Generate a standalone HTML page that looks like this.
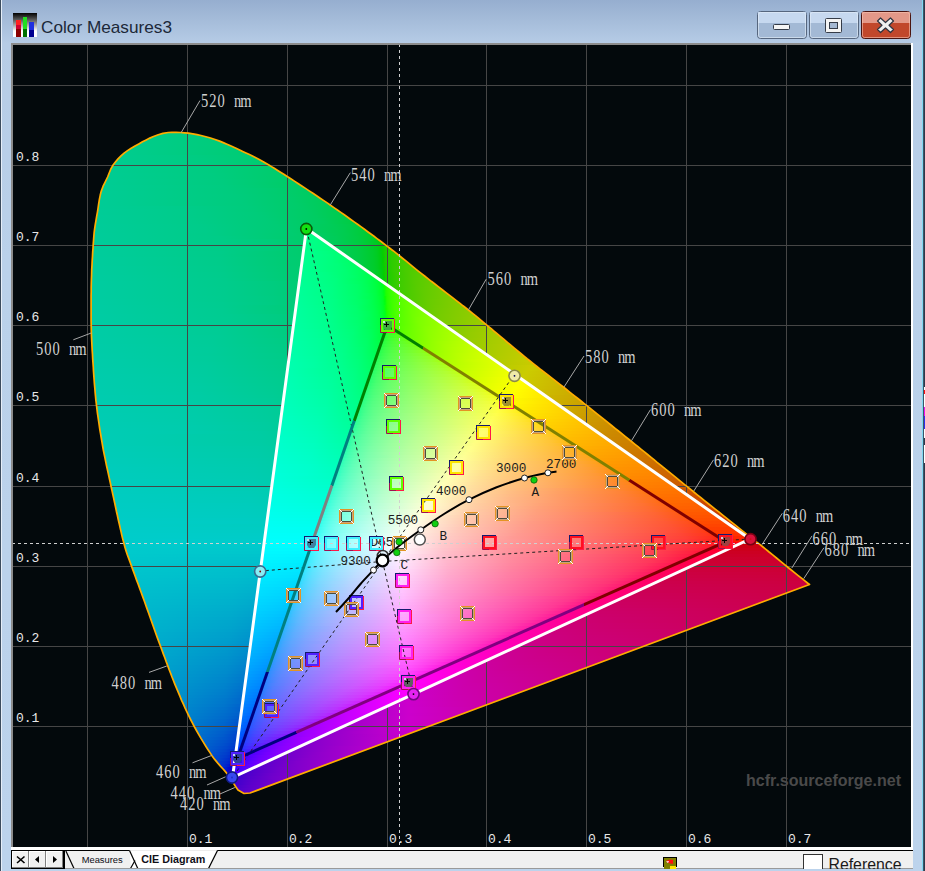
<!DOCTYPE html><html><head><meta charset="utf-8"><style>html,body{margin:0;padding:0;width:925px;height:871px;overflow:hidden;background:#b9d1ea}svg{display:block}</style></head><body>
<svg width="925" height="871" viewBox="0 0 925 871">
<defs>
<linearGradient id="frameg" gradientUnits="userSpaceOnUse" x1="0" y1="0" x2="0" y2="871"><stop offset="0" stop-color="#96aecf"/><stop offset="0.05" stop-color="#b6cce6"/><stop offset="0.3" stop-color="#bad1ea"/><stop offset="1" stop-color="#bcd3ec"/></linearGradient>
<clipPath id="chartclip"><rect x="13" y="45" width="898" height="802"/></clipPath>
<clipPath id="locclip"><polygon points="250.0,793.0 244.0,793.5 238.0,790.0 235.9,787.1 233.6,783.3 230.9,779.1 227.9,774.7 225.6,771.9 223.1,769.0 220.4,766.1 217.6,762.9 214.7,759.4 211.8,755.4 209.8,752.4 207.7,749.2 205.5,745.7 203.3,742.1 201.0,738.4 198.8,734.6 196.6,730.8 194.5,727.0 192.5,723.2 190.6,719.5 188.7,715.7 186.9,711.9 185.1,708.1 183.4,704.2 181.6,700.3 179.9,696.2 178.2,692.1 176.4,687.9 174.9,684.4 173.5,680.7 172.0,677.0 170.6,673.3 169.1,669.5 167.7,665.6 166.2,661.7 164.8,657.8 163.3,653.9 161.9,650.0 160.4,646.0 158.9,642.0 157.4,637.9 155.9,633.7 154.4,629.5 152.9,625.2 151.4,621.0 149.9,616.8 148.5,612.7 147.0,608.6 145.6,604.7 144.3,601.0 142.7,596.6 141.1,592.3 139.6,588.1 138.1,584.0 136.6,580.1 135.2,576.3 133.9,572.6 132.6,569.1 131.4,565.7 129.8,561.4 128.6,558.1 127.4,555.0 126.3,551.7 125.0,547.5 123.5,541.9 122.7,538.9 121.9,535.6 121.1,531.9 120.2,528.1 119.3,524.0 118.3,519.8 117.4,515.5 116.4,511.2 115.5,506.9 114.6,502.6 113.7,498.4 112.8,494.4 112.0,490.6 111.2,487.0 110.2,482.3 109.2,477.9 108.3,473.6 107.4,469.5 106.5,465.6 105.7,461.6 104.9,457.7 104.1,453.8 103.3,449.9 102.6,445.8 101.9,441.7 101.2,437.5 100.5,433.4 99.8,429.3 99.2,425.2 98.6,421.0 98.0,416.9 97.4,412.8 96.9,408.6 96.4,404.5 95.9,400.4 95.5,396.2 95.1,392.0 94.8,387.8 94.4,383.7 94.1,379.5 93.8,375.4 93.5,371.3 93.3,367.2 93.0,363.2 92.7,358.9 92.5,354.6 92.2,350.5 92.0,346.4 91.8,342.3 91.6,338.1 91.4,333.9 91.3,329.5 91.2,325.0 91.1,321.1 91.1,317.1 91.1,312.9 91.1,308.6 91.1,304.3 91.1,300.0 91.1,295.8 91.2,291.6 91.2,287.5 91.3,283.5 91.4,279.8 91.6,274.8 91.7,269.9 92.0,265.1 92.2,260.6 92.5,256.2 92.7,252.1 93.0,248.3 93.2,244.9 93.6,239.5 93.9,235.5 94.2,232.1 94.7,228.4 95.3,224.3 96.0,220.3 96.7,216.2 97.5,211.8 98.1,207.9 98.7,203.7 99.4,199.4 100.2,195.3 101.1,191.6 103.1,186.2 105.4,181.5 107.6,177.0 109.3,172.8 110.9,168.9 113.1,165.0 115.4,162.0 118.0,158.9 121.0,155.9 124.1,153.1 127.5,150.6 131.2,148.2 135.0,146.0 138.8,143.9 142.5,141.8 146.2,139.9 149.8,138.1 153.5,136.5 158.2,134.7 162.9,133.4 168.2,132.5 171.9,132.3 176.1,132.3 180.3,132.5 184.5,132.8 188.4,133.2 192.8,133.8 197.0,134.6 201.0,135.5 204.9,136.5 209.7,137.8 214.3,139.2 219.6,141.1 223.2,142.6 227.0,144.2 231.1,146.0 235.5,148.0 240.2,150.3 243.2,151.7 246.0,153.0 248.9,154.3 252.0,155.7 255.4,157.4 259.2,159.4 263.7,161.9 268.9,165.0 271.5,166.6 274.3,168.3 277.3,170.2 280.5,172.2 283.8,174.3 287.2,176.5 290.8,178.8 294.4,181.1 298.0,183.5 301.8,186.0 305.5,188.4 309.2,190.9 312.9,193.3 316.6,195.8 320.2,198.2 323.8,200.6 327.2,202.9 330.5,205.2 333.9,207.6 337.4,210.0 340.8,212.4 344.3,214.8 347.7,217.2 351.1,219.7 354.5,222.1 357.9,224.5 361.2,226.9 364.5,229.3 367.7,231.7 370.9,234.0 374.0,236.3 377.0,238.6 380.0,240.8 382.9,243.0 385.7,245.1 389.5,248.0 393.1,250.7 396.5,253.4 399.7,256.0 402.8,258.5 405.9,260.9 408.9,263.4 411.9,265.8 414.9,268.3 418.0,270.8 421.2,273.3 424.6,276.0 427.9,278.6 431.3,281.3 434.9,284.0 438.6,286.9 442.3,289.7 446.0,292.6 449.6,295.4 453.2,298.2 456.7,300.9 460.0,303.4 463.0,305.8 465.9,308.0 468.4,310.0 473.2,313.8 476.1,316.2 478.5,318.1 481.4,320.6 486.2,324.6 488.6,326.6 491.2,328.7 494.0,331.1 497.1,333.7 500.3,336.4 503.7,339.2 507.1,342.1 510.5,344.9 514.0,347.8 517.4,350.7 520.8,353.5 524.0,356.1 527.1,358.7 530.0,361.0 533.6,363.9 536.9,366.5 539.9,368.8 542.7,371.0 545.5,373.1 548.5,375.4 551.6,377.8 555.2,380.6 559.3,383.8 564.0,387.5 566.5,389.5 569.1,391.6 571.9,393.8 574.8,396.1 577.9,398.5 581.0,401.0 584.2,403.6 587.5,406.2 590.9,408.9 594.3,411.6 597.7,414.4 601.2,417.2 604.7,419.9 608.1,422.7 611.6,425.5 615.1,428.3 618.5,431.0 621.8,433.7 625.1,436.4 628.4,439.0 631.5,441.5 634.7,444.1 638.0,446.7 641.2,449.3 644.4,451.9 647.6,454.5 650.8,457.1 654.0,459.7 657.1,462.3 660.3,464.8 663.4,467.4 666.5,469.9 669.6,472.4 672.7,474.9 675.8,477.4 678.8,479.9 681.9,482.4 684.9,484.8 687.9,487.2 690.9,489.6 693.8,492.0 697.3,494.8 700.9,497.7 704.5,500.6 708.1,503.5 711.8,506.4 715.5,509.3 719.1,512.2 722.7,515.1 726.2,517.9 729.6,520.6 732.8,523.2 736.0,525.7 739.0,528.1 741.8,530.3 744.4,532.4 746.8,534.3 749.0,536.0 755.1,540.8 757.7,542.8 759.5,544.2 763.0,547.0 765.9,549.3 769.1,552.0 772.7,554.9 776.5,558.0 780.3,561.1 784.0,564.1 787.5,567.0 790.6,569.5 794.5,572.6 798.2,575.6 801.8,578.4 804.9,580.9 807.5,583.0 809.5,584.5"/></clipPath>
<clipPath id="triclip"><polygon points="306.5,228.5 750.0,539.0 232.5,777.5"/></clipPath>
<linearGradient id="o0"><stop offset="0" stop-color="#00cc87"/><stop offset="1" stop-color="#00cc7f"/></linearGradient>
<linearGradient id="o1"><stop offset="0" stop-color="#00cc89"/><stop offset="1" stop-color="#00cc7d"/></linearGradient>
<linearGradient id="o2"><stop offset="0" stop-color="#00cc8a"/><stop offset="1" stop-color="#00cc7b"/></linearGradient>
<linearGradient id="o3"><stop offset="0" stop-color="#00cc8b"/><stop offset="1" stop-color="#00cc79"/></linearGradient>
<linearGradient id="o4"><stop offset="0" stop-color="#00cc8c"/><stop offset="1" stop-color="#00cc78"/></linearGradient>
<linearGradient id="o5"><stop offset="0" stop-color="#00cc8d"/><stop offset="1" stop-color="#00cc76"/></linearGradient>
<linearGradient id="o6"><stop offset="0" stop-color="#00cc8e"/><stop offset="1" stop-color="#00cc75"/></linearGradient>
<linearGradient id="o7"><stop offset="0" stop-color="#00cc8f"/><stop offset="1" stop-color="#00cc73"/></linearGradient>
<linearGradient id="o8"><stop offset="0" stop-color="#00cc90"/><stop offset="0.552" stop-color="#00cc82"/><stop offset="1" stop-color="#00cc72"/></linearGradient>
<linearGradient id="o9"><stop offset="0" stop-color="#00cc90"/><stop offset="0.562" stop-color="#00cc82"/><stop offset="1" stop-color="#00cc70"/></linearGradient>
<linearGradient id="o10"><stop offset="0" stop-color="#00cc91"/><stop offset="0.559" stop-color="#00cc82"/><stop offset="1" stop-color="#00cc6f"/></linearGradient>
<linearGradient id="o11"><stop offset="0" stop-color="#00cc91"/><stop offset="0.571" stop-color="#00cc81"/><stop offset="1" stop-color="#00cc6d"/></linearGradient>
<linearGradient id="o12"><stop offset="0" stop-color="#00cc92"/><stop offset="0.566" stop-color="#00cc82"/><stop offset="1" stop-color="#00cc6c"/></linearGradient>
<linearGradient id="o13"><stop offset="0" stop-color="#00cc92"/><stop offset="0.57" stop-color="#00cc81"/><stop offset="1" stop-color="#00cc6b"/></linearGradient>
<linearGradient id="o14"><stop offset="0" stop-color="#00cc93"/><stop offset="0.573" stop-color="#00cc81"/><stop offset="1" stop-color="#00cc69"/></linearGradient>
<linearGradient id="o15"><stop offset="0" stop-color="#00cc93"/><stop offset="0.583" stop-color="#00cc80"/><stop offset="1" stop-color="#00cc67"/></linearGradient>
<linearGradient id="o16"><stop offset="0" stop-color="#00cc94"/><stop offset="0.589" stop-color="#00cc80"/><stop offset="1" stop-color="#00cc66"/></linearGradient>
<linearGradient id="o17"><stop offset="0" stop-color="#00cc94"/><stop offset="0.598" stop-color="#00cc7f"/><stop offset="1" stop-color="#00cc63"/></linearGradient>
<linearGradient id="o18"><stop offset="0" stop-color="#00cc95"/><stop offset="0.593" stop-color="#00cc80"/><stop offset="1" stop-color="#00cc62"/></linearGradient>
<linearGradient id="o19"><stop offset="0" stop-color="#00cc95"/><stop offset="0.595" stop-color="#00cc7f"/><stop offset="0.819" stop-color="#00cc71"/><stop offset="1" stop-color="#00cc60"/></linearGradient>
<linearGradient id="o20"><stop offset="0" stop-color="#00cc96"/><stop offset="0.609" stop-color="#00cc7e"/><stop offset="0.827" stop-color="#00cc6f"/><stop offset="1" stop-color="#00cc5e"/></linearGradient>
<linearGradient id="o21"><stop offset="0" stop-color="#00cc96"/><stop offset="0.611" stop-color="#00cc7e"/><stop offset="0.832" stop-color="#00cc6e"/><stop offset="1" stop-color="#00cc5b"/></linearGradient>
<linearGradient id="o22"><stop offset="0" stop-color="#00cc96"/><stop offset="0.617" stop-color="#00cc7d"/><stop offset="0.835" stop-color="#00cc6d"/><stop offset="1" stop-color="#00cc59"/></linearGradient>
<linearGradient id="o23"><stop offset="0" stop-color="#00cc97"/><stop offset="0.619" stop-color="#00cc7d"/><stop offset="0.839" stop-color="#00cc6b"/><stop offset="1" stop-color="#00cc56"/></linearGradient>
<linearGradient id="o24"><stop offset="0" stop-color="#00cc97"/><stop offset="0.625" stop-color="#00cc7c"/><stop offset="0.842" stop-color="#00cc6a"/><stop offset="1" stop-color="#00cc53"/></linearGradient>
<linearGradient id="o25"><stop offset="0" stop-color="#00cc97"/><stop offset="0.351" stop-color="#00cc8b"/><stop offset="0.629" stop-color="#00cc7c"/><stop offset="0.841" stop-color="#00cc69"/><stop offset="1" stop-color="#00cc51"/></linearGradient>
<linearGradient id="o26"><stop offset="0" stop-color="#00cc98"/><stop offset="0.36" stop-color="#00cc8b"/><stop offset="0.64" stop-color="#00cc7a"/><stop offset="0.848" stop-color="#00cc66"/><stop offset="1" stop-color="#00cc4d"/></linearGradient>
<linearGradient id="o27"><stop offset="0" stop-color="#00cc98"/><stop offset="0.361" stop-color="#00cc8b"/><stop offset="0.643" stop-color="#00cc7a"/><stop offset="0.847" stop-color="#00cc65"/><stop offset="1" stop-color="#00cc4a"/></linearGradient>
<linearGradient id="o28"><stop offset="0" stop-color="#00cc99"/><stop offset="0.371" stop-color="#00cc8a"/><stop offset="0.649" stop-color="#00cc79"/><stop offset="0.857" stop-color="#00cc62"/><stop offset="1" stop-color="#00cc46"/></linearGradient>
<linearGradient id="o29"><stop offset="0" stop-color="#00cc99"/><stop offset="0.379" stop-color="#00cc8a"/><stop offset="0.659" stop-color="#00cc78"/><stop offset="0.864" stop-color="#00cc60"/><stop offset="1" stop-color="#00cc42"/></linearGradient>
<linearGradient id="o30"><stop offset="0" stop-color="#00cc99"/><stop offset="0.379" stop-color="#00cc8a"/><stop offset="0.662" stop-color="#00cc77"/><stop offset="0.862" stop-color="#00cc5e"/><stop offset="1" stop-color="#00cc3c"/></linearGradient>
<linearGradient id="o31"><stop offset="0" stop-color="#00cc9a"/><stop offset="0.394" stop-color="#00cc8a"/><stop offset="0.679" stop-color="#00cc75"/><stop offset="0.876" stop-color="#00cc59"/><stop offset="0.949" stop-color="#00cc48"/><stop offset="1" stop-color="#00cc36"/></linearGradient>
<linearGradient id="o32"><stop offset="0" stop-color="#00cc9a"/><stop offset="0.396" stop-color="#00cc8a"/><stop offset="0.683" stop-color="#00cc74"/><stop offset="0.885" stop-color="#00cc55"/><stop offset="0.95" stop-color="#00cc44"/><stop offset="1" stop-color="#00cc30"/></linearGradient>
<linearGradient id="o33"><stop offset="0" stop-color="#00cc9a"/><stop offset="0.411" stop-color="#00cc89"/><stop offset="0.702" stop-color="#00cc71"/><stop offset="0.894" stop-color="#00cc51"/><stop offset="0.957" stop-color="#00cc3d"/><stop offset="1" stop-color="#00cc27"/></linearGradient>
<linearGradient id="o34"><stop offset="0" stop-color="#00cc9b"/><stop offset="0.418" stop-color="#00cc88"/><stop offset="0.711" stop-color="#00cc6f"/><stop offset="0.815" stop-color="#00cc5f"/><stop offset="0.899" stop-color="#00cc4d"/><stop offset="0.962" stop-color="#00cc36"/><stop offset="1" stop-color="#00cc1e"/></linearGradient>
<linearGradient id="o35"><stop offset="0" stop-color="#00cc9b"/><stop offset="0.447" stop-color="#00cc87"/><stop offset="0.742" stop-color="#00cc6a"/><stop offset="0.845" stop-color="#00cc58"/><stop offset="0.921" stop-color="#00cc42"/><stop offset="0.969" stop-color="#00cc2b"/><stop offset="0.983" stop-color="#00cc20"/><stop offset="1" stop-color="#00cc0a"/></linearGradient>
<linearGradient id="o36"><stop offset="0" stop-color="#00cc9b"/><stop offset="0.447" stop-color="#00cc87"/><stop offset="0.617" stop-color="#00cc79"/><stop offset="0.746" stop-color="#00cc68"/><stop offset="0.847" stop-color="#00cc55"/><stop offset="0.922" stop-color="#00cc3d"/><stop offset="0.963" stop-color="#00cc27"/><stop offset="0.983" stop-color="#00cc0f"/><stop offset="0.99" stop-color="#04cc00"/><stop offset="0.997" stop-color="#14cc00"/><stop offset="1" stop-color="#17cc00"/></linearGradient>
<linearGradient id="o37"><stop offset="0" stop-color="#00cc9c"/><stop offset="0.441" stop-color="#00cc87"/><stop offset="0.609" stop-color="#00cc79"/><stop offset="0.736" stop-color="#00cc69"/><stop offset="0.829" stop-color="#00cc57"/><stop offset="0.896" stop-color="#00cc43"/><stop offset="0.943" stop-color="#00cc2c"/><stop offset="0.957" stop-color="#00cc22"/><stop offset="0.97" stop-color="#00cc10"/><stop offset="0.977" stop-color="#02cc00"/><stop offset="0.983" stop-color="#13cc00"/><stop offset="1" stop-color="#25cc00"/></linearGradient>
<linearGradient id="o38"><stop offset="0" stop-color="#00cc9c"/><stop offset="0.434" stop-color="#00cc88"/><stop offset="0.592" stop-color="#00cc7a"/><stop offset="0.724" stop-color="#00cc6a"/><stop offset="0.816" stop-color="#00cc58"/><stop offset="0.888" stop-color="#00cc43"/><stop offset="0.934" stop-color="#00cc2a"/><stop offset="0.954" stop-color="#00cc17"/><stop offset="0.961" stop-color="#00cc0a"/><stop offset="0.967" stop-color="#0bcc00"/><stop offset="0.98" stop-color="#20cc00"/><stop offset="1" stop-color="#30cc00"/></linearGradient>
<linearGradient id="o39"><stop offset="0" stop-color="#00cc9d"/><stop offset="0.429" stop-color="#00cc88"/><stop offset="0.584" stop-color="#00cc7b"/><stop offset="0.714" stop-color="#00cc6a"/><stop offset="0.805" stop-color="#00cc59"/><stop offset="0.877" stop-color="#00cc43"/><stop offset="0.922" stop-color="#00cc2b"/><stop offset="0.935" stop-color="#00cc20"/><stop offset="0.948" stop-color="#00cc0c"/><stop offset="0.955" stop-color="#0acc00"/><stop offset="0.968" stop-color="#1fcc00"/><stop offset="1" stop-color="#38cc00"/></linearGradient>
<linearGradient id="o40"><stop offset="0" stop-color="#00cc9d"/><stop offset="0.423" stop-color="#00cc89"/><stop offset="0.699" stop-color="#00cc6c"/><stop offset="0.795" stop-color="#00cc59"/><stop offset="0.865" stop-color="#00cc44"/><stop offset="0.91" stop-color="#00cc2c"/><stop offset="0.923" stop-color="#00cc21"/><stop offset="0.936" stop-color="#00cc0d"/><stop offset="0.942" stop-color="#08cc00"/><stop offset="0.949" stop-color="#16cc00"/><stop offset="0.962" stop-color="#26cc00"/><stop offset="1" stop-color="#40cc00"/></linearGradient>
<linearGradient id="o41"><stop offset="0" stop-color="#00cc9d"/><stop offset="0.413" stop-color="#00cc89"/><stop offset="0.686" stop-color="#00cc6d"/><stop offset="0.787" stop-color="#00cc5a"/><stop offset="0.857" stop-color="#00cc44"/><stop offset="0.902" stop-color="#00cc2c"/><stop offset="0.914" stop-color="#00cc21"/><stop offset="0.927" stop-color="#00cc0f"/><stop offset="0.933" stop-color="#06cc00"/><stop offset="0.94" stop-color="#15cc00"/><stop offset="0.952" stop-color="#25cc00"/><stop offset="1" stop-color="#44cc00"/></linearGradient>
<linearGradient id="o42"><stop offset="0" stop-color="#00cc9e"/><stop offset="0.408" stop-color="#00cc8a"/><stop offset="0.677" stop-color="#00cc6e"/><stop offset="0.771" stop-color="#00cc5c"/><stop offset="0.84" stop-color="#00cc47"/><stop offset="0.89" stop-color="#00cc2d"/><stop offset="0.903" stop-color="#00cc22"/><stop offset="0.915" stop-color="#00cc10"/><stop offset="0.922" stop-color="#04cc00"/><stop offset="0.928" stop-color="#15cc00"/><stop offset="0.947" stop-color="#2bcc00"/><stop offset="1" stop-color="#4acc00"/></linearGradient>
<linearGradient id="o43"><stop offset="0" stop-color="#00cc9e"/><stop offset="0.402" stop-color="#00cc8a"/><stop offset="0.669" stop-color="#00cc6e"/><stop offset="0.762" stop-color="#00cc5c"/><stop offset="0.83" stop-color="#00cc48"/><stop offset="0.879" stop-color="#00cc2e"/><stop offset="0.892" stop-color="#00cc23"/><stop offset="0.904" stop-color="#00cc11"/><stop offset="0.91" stop-color="#02cc00"/><stop offset="0.916" stop-color="#14cc00"/><stop offset="0.923" stop-color="#1dcc00"/><stop offset="0.941" stop-color="#30cc00"/><stop offset="1" stop-color="#4fcc00"/></linearGradient>
<linearGradient id="o44"><stop offset="0" stop-color="#00cc9e"/><stop offset="0.402" stop-color="#00cc8a"/><stop offset="0.671" stop-color="#00cc6d"/><stop offset="0.762" stop-color="#00cc5b"/><stop offset="0.829" stop-color="#00cc44"/><stop offset="0.872" stop-color="#00cc2c"/><stop offset="0.884" stop-color="#00cc20"/><stop offset="0.896" stop-color="#00cc0b"/><stop offset="0.902" stop-color="#0bcc00"/><stop offset="0.915" stop-color="#21cc00"/><stop offset="0.927" stop-color="#2dcc00"/><stop offset="0.957" stop-color="#41cc00"/><stop offset="1" stop-color="#55cc00"/></linearGradient>
<linearGradient id="o45"><stop offset="0" stop-color="#00cc9f"/><stop offset="0.399" stop-color="#00cc8b"/><stop offset="0.665" stop-color="#00cc6e"/><stop offset="0.755" stop-color="#00cc5b"/><stop offset="0.822" stop-color="#00cc45"/><stop offset="0.864" stop-color="#00cc2d"/><stop offset="0.876" stop-color="#00cc21"/><stop offset="0.888" stop-color="#00cc0d"/><stop offset="0.894" stop-color="#0acc00"/><stop offset="0.906" stop-color="#20cc00"/><stop offset="0.924" stop-color="#32cc00"/><stop offset="0.961" stop-color="#48cc00"/><stop offset="1" stop-color="#58cc00"/></linearGradient>
<linearGradient id="o46"><stop offset="0" stop-color="#00cc9f"/><stop offset="0.394" stop-color="#00cc8b"/><stop offset="0.651" stop-color="#00cc6f"/><stop offset="0.746" stop-color="#00cc5c"/><stop offset="0.812" stop-color="#00cc46"/><stop offset="0.854" stop-color="#00cc2d"/><stop offset="0.866" stop-color="#00cc22"/><stop offset="0.878" stop-color="#00cc0e"/><stop offset="0.884" stop-color="#08cc00"/><stop offset="0.89" stop-color="#17cc00"/><stop offset="0.896" stop-color="#20cc00"/><stop offset="0.913" stop-color="#32cc00"/><stop offset="0.949" stop-color="#48cc00"/><stop offset="1" stop-color="#5dcc00"/></linearGradient>
<linearGradient id="o47"><stop offset="0" stop-color="#00cc9f"/><stop offset="0.389" stop-color="#00cc8c"/><stop offset="0.643" stop-color="#00cc70"/><stop offset="0.732" stop-color="#00cc5e"/><stop offset="0.796" stop-color="#00cc49"/><stop offset="0.844" stop-color="#00cc2e"/><stop offset="0.855" stop-color="#00cc23"/><stop offset="0.867" stop-color="#00cc10"/><stop offset="0.873" stop-color="#06cc00"/><stop offset="0.879" stop-color="#16cc00"/><stop offset="0.885" stop-color="#1fcc00"/><stop offset="0.909" stop-color="#36cc00"/><stop offset="0.95" stop-color="#4ecc00"/><stop offset="1" stop-color="#62cc00"/></linearGradient>
<linearGradient id="o48"><stop offset="0" stop-color="#00cca0"/><stop offset="0.385" stop-color="#00cc8c"/><stop offset="0.636" stop-color="#00cc70"/><stop offset="0.723" stop-color="#00cc5e"/><stop offset="0.787" stop-color="#00cc49"/><stop offset="0.834" stop-color="#00cc2f"/><stop offset="0.845" stop-color="#00cc24"/><stop offset="0.857" stop-color="#00cc11"/><stop offset="0.863" stop-color="#04cc00"/><stop offset="0.869" stop-color="#15cc00"/><stop offset="0.875" stop-color="#1fcc00"/><stop offset="0.904" stop-color="#3acc00"/><stop offset="0.945" stop-color="#51cc00"/><stop offset="1" stop-color="#66cc00"/></linearGradient>
<linearGradient id="o49"><stop offset="0" stop-color="#00cca0"/><stop offset="0.382" stop-color="#00cc8d"/><stop offset="0.63" stop-color="#00cc71"/><stop offset="0.717" stop-color="#00cc5f"/><stop offset="0.78" stop-color="#00cc4a"/><stop offset="0.827" stop-color="#00cc2f"/><stop offset="0.838" stop-color="#00cc24"/><stop offset="0.85" stop-color="#00cc13"/><stop offset="0.855" stop-color="#02cc00"/><stop offset="0.861" stop-color="#14cc00"/><stop offset="0.867" stop-color="#1ecc00"/><stop offset="0.896" stop-color="#3acc00"/><stop offset="0.942" stop-color="#54cc00"/><stop offset="1" stop-color="#6acc00"/></linearGradient>
<linearGradient id="o50"><stop offset="0" stop-color="#00cca1"/><stop offset="0.394" stop-color="#00cc8c"/><stop offset="0.537" stop-color="#00cc7e"/><stop offset="0.646" stop-color="#00cc6d"/><stop offset="0.731" stop-color="#00cc59"/><stop offset="0.794" stop-color="#00cc3f"/><stop offset="0.829" stop-color="#00cc25"/><stop offset="0.84" stop-color="#00cc14"/><stop offset="0.846" stop-color="#00cc01"/><stop offset="0.851" stop-color="#13cc00"/><stop offset="0.857" stop-color="#1ecc00"/><stop offset="0.886" stop-color="#3acc00"/><stop offset="0.931" stop-color="#54cc00"/><stop offset="1" stop-color="#6ecc00"/></linearGradient>
<linearGradient id="o51"><stop offset="0" stop-color="#00cca1"/><stop offset="0.39" stop-color="#00cc8c"/><stop offset="0.531" stop-color="#00cc7e"/><stop offset="0.638" stop-color="#00cc6e"/><stop offset="0.723" stop-color="#00cc59"/><stop offset="0.785" stop-color="#00cc40"/><stop offset="0.819" stop-color="#00cc26"/><stop offset="0.831" stop-color="#00cc15"/><stop offset="0.836" stop-color="#00cc03"/><stop offset="0.842" stop-color="#12cc00"/><stop offset="0.853" stop-color="#25cc00"/><stop offset="0.881" stop-color="#3ecc00"/><stop offset="0.932" stop-color="#59cc00"/><stop offset="1" stop-color="#73cc00"/></linearGradient>
<linearGradient id="o52"><stop offset="0" stop-color="#00cca1"/><stop offset="0.38" stop-color="#00cc8d"/><stop offset="0.52" stop-color="#00cc7f"/><stop offset="0.626" stop-color="#00cc6f"/><stop offset="0.709" stop-color="#00cc5c"/><stop offset="0.771" stop-color="#00cc44"/><stop offset="0.81" stop-color="#00cc27"/><stop offset="0.821" stop-color="#00cc16"/><stop offset="0.827" stop-color="#00cc05"/><stop offset="0.832" stop-color="#11cc00"/><stop offset="0.844" stop-color="#25cc00"/><stop offset="0.872" stop-color="#3ecc00"/><stop offset="0.922" stop-color="#5acc00"/><stop offset="1" stop-color="#77cc00"/></linearGradient>
<linearGradient id="o53"><stop offset="0" stop-color="#00cca2"/><stop offset="0.376" stop-color="#00cc8e"/><stop offset="0.514" stop-color="#00cc80"/><stop offset="0.619" stop-color="#00cc70"/><stop offset="0.702" stop-color="#00cc5c"/><stop offset="0.762" stop-color="#00cc44"/><stop offset="0.801" stop-color="#00cc27"/><stop offset="0.812" stop-color="#00cc17"/><stop offset="0.818" stop-color="#00cc07"/><stop offset="0.823" stop-color="#10cc00"/><stop offset="0.834" stop-color="#24cc00"/><stop offset="0.867" stop-color="#42cc00"/><stop offset="0.923" stop-color="#5fcc00"/><stop offset="1" stop-color="#7bcc00"/></linearGradient>
<linearGradient id="o54"><stop offset="0" stop-color="#00cca2"/><stop offset="0.372" stop-color="#00cc8e"/><stop offset="0.508" stop-color="#00cc80"/><stop offset="0.612" stop-color="#00cc70"/><stop offset="0.694" stop-color="#00cc5d"/><stop offset="0.754" stop-color="#00cc45"/><stop offset="0.792" stop-color="#00cc28"/><stop offset="0.803" stop-color="#00cc18"/><stop offset="0.809" stop-color="#00cc0a"/><stop offset="0.814" stop-color="#0fcc00"/><stop offset="0.825" stop-color="#24cc00"/><stop offset="0.858" stop-color="#42cc00"/><stop offset="0.918" stop-color="#61cc00"/><stop offset="1" stop-color="#7fcc00"/></linearGradient>
<linearGradient id="o55"><stop offset="0" stop-color="#00cca2"/><stop offset="0.362" stop-color="#00cc8f"/><stop offset="0.497" stop-color="#00cc82"/><stop offset="0.6" stop-color="#00cc72"/><stop offset="0.681" stop-color="#00cc5f"/><stop offset="0.741" stop-color="#00cc48"/><stop offset="0.778" stop-color="#00cc2f"/><stop offset="0.795" stop-color="#00cc1a"/><stop offset="0.8" stop-color="#00cc0c"/><stop offset="0.805" stop-color="#0dcc00"/><stop offset="0.816" stop-color="#23cc00"/><stop offset="0.832" stop-color="#35cc00"/><stop offset="0.854" stop-color="#46cc00"/><stop offset="0.914" stop-color="#64cc00"/><stop offset="1" stop-color="#82cc00"/></linearGradient>
<linearGradient id="o56"><stop offset="0" stop-color="#00cca3"/><stop offset="0.358" stop-color="#00cc8f"/><stop offset="0.492" stop-color="#00cc82"/><stop offset="0.594" stop-color="#00cc73"/><stop offset="0.674" stop-color="#00cc60"/><stop offset="0.733" stop-color="#00cc49"/><stop offset="0.77" stop-color="#00cc2f"/><stop offset="0.781" stop-color="#00cc23"/><stop offset="0.791" stop-color="#00cc0d"/><stop offset="0.797" stop-color="#0ccc00"/><stop offset="0.802" stop-color="#1acc00"/><stop offset="0.813" stop-color="#2acc00"/><stop offset="0.85" stop-color="#49cc00"/><stop offset="0.914" stop-color="#69cc00"/><stop offset="1" stop-color="#86cc00"/></linearGradient>
<linearGradient id="o57"><stop offset="0" stop-color="#00cca3"/><stop offset="0.355" stop-color="#00cc90"/><stop offset="0.488" stop-color="#00cc83"/><stop offset="0.589" stop-color="#00cc73"/><stop offset="0.668" stop-color="#00cc60"/><stop offset="0.727" stop-color="#00cc49"/><stop offset="0.764" stop-color="#00cc30"/><stop offset="0.775" stop-color="#00cc24"/><stop offset="0.785" stop-color="#00cc0f"/><stop offset="0.79" stop-color="#0acc00"/><stop offset="0.796" stop-color="#19cc00"/><stop offset="0.806" stop-color="#2acc00"/><stop offset="0.844" stop-color="#49cc00"/><stop offset="0.907" stop-color="#69cc00"/><stop offset="1" stop-color="#89cc00"/></linearGradient>
<linearGradient id="o58"><stop offset="0" stop-color="#00cca4"/><stop offset="0.352" stop-color="#00cc90"/><stop offset="0.577" stop-color="#00cc75"/><stop offset="0.661" stop-color="#00cc61"/><stop offset="0.719" stop-color="#00cc4a"/><stop offset="0.756" stop-color="#00cc31"/><stop offset="0.766" stop-color="#00cc25"/><stop offset="0.777" stop-color="#00cc11"/><stop offset="0.782" stop-color="#08cc00"/><stop offset="0.787" stop-color="#18cc00"/><stop offset="0.798" stop-color="#29cc00"/><stop offset="0.814" stop-color="#3acc00"/><stop offset="0.84" stop-color="#4dcc00"/><stop offset="0.908" stop-color="#6ecc00"/><stop offset="1" stop-color="#8ccc00"/></linearGradient>
<linearGradient id="o59"><stop offset="0" stop-color="#00cca4"/><stop offset="0.348" stop-color="#00cc91"/><stop offset="0.571" stop-color="#00cc75"/><stop offset="0.649" stop-color="#00cc63"/><stop offset="0.706" stop-color="#00cc4d"/><stop offset="0.748" stop-color="#00cc32"/><stop offset="0.758" stop-color="#00cc26"/><stop offset="0.769" stop-color="#00cc12"/><stop offset="0.774" stop-color="#05cc00"/><stop offset="0.779" stop-color="#17cc00"/><stop offset="0.79" stop-color="#29cc00"/><stop offset="0.805" stop-color="#3acc00"/><stop offset="0.831" stop-color="#4dcc00"/><stop offset="0.904" stop-color="#71cc00"/><stop offset="1" stop-color="#90cc00"/></linearGradient>
<linearGradient id="o60"><stop offset="0" stop-color="#00cca4"/><stop offset="0.344" stop-color="#00cc91"/><stop offset="0.566" stop-color="#00cc76"/><stop offset="0.643" stop-color="#00cc64"/><stop offset="0.699" stop-color="#00cc4e"/><stop offset="0.74" stop-color="#00cc32"/><stop offset="0.751" stop-color="#00cc27"/><stop offset="0.761" stop-color="#00cc14"/><stop offset="0.766" stop-color="#03cc00"/><stop offset="0.771" stop-color="#17cc00"/><stop offset="0.781" stop-color="#29cc00"/><stop offset="0.802" stop-color="#3ecc00"/><stop offset="0.828" stop-color="#50cc00"/><stop offset="0.9" stop-color="#73cc00"/><stop offset="1" stop-color="#94cc00"/></linearGradient>
<linearGradient id="o61"><stop offset="0" stop-color="#00cca5"/><stop offset="0.361" stop-color="#00cc90"/><stop offset="0.489" stop-color="#00cc82"/><stop offset="0.585" stop-color="#00cc71"/><stop offset="0.662" stop-color="#00cc5c"/><stop offset="0.712" stop-color="#00cc43"/><stop offset="0.743" stop-color="#00cc28"/><stop offset="0.753" stop-color="#00cc15"/><stop offset="0.758" stop-color="#00cc00"/><stop offset="0.763" stop-color="#16cc00"/><stop offset="0.774" stop-color="#28cc00"/><stop offset="0.794" stop-color="#3ecc00"/><stop offset="0.819" stop-color="#51cc00"/><stop offset="0.896" stop-color="#76cc00"/><stop offset="1" stop-color="#97cc00"/></linearGradient>
<linearGradient id="o62"><stop offset="0" stop-color="#00cca5"/><stop offset="0.354" stop-color="#00cc91"/><stop offset="0.48" stop-color="#00cc83"/><stop offset="0.576" stop-color="#00cc73"/><stop offset="0.652" stop-color="#00cc5e"/><stop offset="0.707" stop-color="#00cc44"/><stop offset="0.737" stop-color="#00cc28"/><stop offset="0.747" stop-color="#00cc16"/><stop offset="0.753" stop-color="#00cc02"/><stop offset="0.758" stop-color="#15cc00"/><stop offset="0.768" stop-color="#28cc00"/><stop offset="0.788" stop-color="#3ecc00"/><stop offset="0.813" stop-color="#51cc00"/><stop offset="0.889" stop-color="#76cc00"/><stop offset="1" stop-color="#9bcc00"/></linearGradient>
<linearGradient id="o63"><stop offset="0" stop-color="#00cca5"/><stop offset="0.35" stop-color="#00cc92"/><stop offset="0.475" stop-color="#00cc84"/><stop offset="0.57" stop-color="#00cc74"/><stop offset="0.64" stop-color="#00cc61"/><stop offset="0.695" stop-color="#00cc48"/><stop offset="0.73" stop-color="#00cc29"/><stop offset="0.74" stop-color="#00cc18"/><stop offset="0.745" stop-color="#00cc05"/><stop offset="0.75" stop-color="#13cc00"/><stop offset="0.755" stop-color="#1fcc00"/><stop offset="0.765" stop-color="#2fcc00"/><stop offset="0.785" stop-color="#43cc00"/><stop offset="0.81" stop-color="#54cc00"/><stop offset="0.89" stop-color="#7bcc00"/><stop offset="1" stop-color="#9ecc00"/></linearGradient>
<linearGradient id="o64"><stop offset="0" stop-color="#00cca6"/><stop offset="0.347" stop-color="#00cc92"/><stop offset="0.471" stop-color="#00cc84"/><stop offset="0.566" stop-color="#00cc74"/><stop offset="0.635" stop-color="#00cc61"/><stop offset="0.69" stop-color="#00cc48"/><stop offset="0.725" stop-color="#00cc2a"/><stop offset="0.734" stop-color="#00cc19"/><stop offset="0.739" stop-color="#00cc07"/><stop offset="0.744" stop-color="#12cc00"/><stop offset="0.749" stop-color="#1fcc00"/><stop offset="0.759" stop-color="#2ecc00"/><stop offset="0.779" stop-color="#43cc00"/><stop offset="0.804" stop-color="#55cc00"/><stop offset="0.883" stop-color="#7bcc00"/><stop offset="1" stop-color="#a1cc00"/></linearGradient>
<linearGradient id="o65"><stop offset="0" stop-color="#00cca6"/><stop offset="0.339" stop-color="#00cc93"/><stop offset="0.462" stop-color="#00cc86"/><stop offset="0.555" stop-color="#00cc76"/><stop offset="0.629" stop-color="#00cc62"/><stop offset="0.683" stop-color="#00cc49"/><stop offset="0.717" stop-color="#00cc2b"/><stop offset="0.727" stop-color="#00cc1a"/><stop offset="0.732" stop-color="#00cc0a"/><stop offset="0.737" stop-color="#13cc04"/><stop offset="0.752" stop-color="#2ecc00"/><stop offset="0.771" stop-color="#43cc00"/><stop offset="0.801" stop-color="#58cc00"/><stop offset="0.885" stop-color="#80cc00"/><stop offset="1" stop-color="#a5cc00"/></linearGradient>
<linearGradient id="o66"><stop offset="0" stop-color="#00cca7"/><stop offset="0.321" stop-color="#00cc95"/><stop offset="0.53" stop-color="#00cc7a"/><stop offset="0.603" stop-color="#00cc69"/><stop offset="0.657" stop-color="#00cc54"/><stop offset="0.696" stop-color="#00cc3b"/><stop offset="0.71" stop-color="#00cc2c"/><stop offset="0.72" stop-color="#00cc1b"/><stop offset="0.73" stop-color="#19cc10"/><stop offset="0.745" stop-color="#2ecc00"/><stop offset="0.769" stop-color="#47cc00"/><stop offset="0.798" stop-color="#5bcc00"/><stop offset="0.881" stop-color="#82cc00"/><stop offset="1" stop-color="#a8cc00"/></linearGradient>
<linearGradient id="o67"><stop offset="0" stop-color="#00cca7"/><stop offset="0.319" stop-color="#00cc95"/><stop offset="0.527" stop-color="#00cc7b"/><stop offset="0.599" stop-color="#00cc69"/><stop offset="0.652" stop-color="#00cc55"/><stop offset="0.691" stop-color="#00cc3c"/><stop offset="0.705" stop-color="#00cc2d"/><stop offset="0.715" stop-color="#01cc1d"/><stop offset="0.72" stop-color="#14cc1b"/><stop offset="0.734" stop-color="#2bcc12"/><stop offset="0.754" stop-color="#3ecc00"/><stop offset="0.797" stop-color="#5fcc00"/><stop offset="0.879" stop-color="#85cc00"/><stop offset="1" stop-color="#accc00"/></linearGradient>
<linearGradient id="o68"><stop offset="0" stop-color="#00cca7"/><stop offset="0.306" stop-color="#00cc97"/><stop offset="0.512" stop-color="#00cc7d"/><stop offset="0.584" stop-color="#00cc6d"/><stop offset="0.636" stop-color="#00cc5a"/><stop offset="0.679" stop-color="#00cc41"/><stop offset="0.703" stop-color="#00cc27"/><stop offset="0.713" stop-color="#19cc20"/><stop offset="0.727" stop-color="#2ecc19"/><stop offset="0.756" stop-color="#47cc00"/><stop offset="0.789" stop-color="#5fcc00"/><stop offset="0.876" stop-color="#87cc00"/><stop offset="1" stop-color="#afcc00"/></linearGradient>
<linearGradient id="o69"><stop offset="0" stop-color="#00cca8"/><stop offset="0.295" stop-color="#00cc98"/><stop offset="0.494" stop-color="#00cc81"/><stop offset="0.565" stop-color="#00cc72"/><stop offset="0.622" stop-color="#00cc5f"/><stop offset="0.665" stop-color="#00cc49"/><stop offset="0.694" stop-color="#00cc2f"/><stop offset="0.698" stop-color="#02cc28"/><stop offset="0.703" stop-color="#14cc26"/><stop offset="0.708" stop-color="#1ecc25"/><stop offset="0.722" stop-color="#31cc1f"/><stop offset="0.746" stop-color="#46cc11"/><stop offset="0.76" stop-color="#4fcc00"/><stop offset="0.789" stop-color="#62cc00"/><stop offset="0.879" stop-color="#8ccc00"/><stop offset="1" stop-color="#b2cc00"/></linearGradient>
<linearGradient id="o70"><stop offset="0" stop-color="#00cca8"/><stop offset="0.292" stop-color="#00cc98"/><stop offset="0.489" stop-color="#00cc81"/><stop offset="0.56" stop-color="#00cc72"/><stop offset="0.616" stop-color="#00cc60"/><stop offset="0.659" stop-color="#00cc4a"/><stop offset="0.687" stop-color="#00cc2f"/><stop offset="0.696" stop-color="#1acc2b"/><stop offset="0.715" stop-color="#34cc24"/><stop offset="0.744" stop-color="#4bcc16"/><stop offset="0.762" stop-color="#57cc02"/><stop offset="0.786" stop-color="#65cc00"/><stop offset="0.875" stop-color="#8ecc00"/><stop offset="1" stop-color="#b5cc00"/></linearGradient>
<linearGradient id="o71"><stop offset="0" stop-color="#00cca9"/><stop offset="0.285" stop-color="#00cc99"/><stop offset="0.481" stop-color="#00cc83"/><stop offset="0.551" stop-color="#00cc74"/><stop offset="0.607" stop-color="#00cc62"/><stop offset="0.65" stop-color="#00cc4d"/><stop offset="0.678" stop-color="#00cc36"/><stop offset="0.682" stop-color="#03cc31"/><stop offset="0.687" stop-color="#15cc30"/><stop offset="0.692" stop-color="#1fcc2e"/><stop offset="0.71" stop-color="#36cc28"/><stop offset="0.748" stop-color="#53cc17"/><stop offset="0.771" stop-color="#60cc00"/><stop offset="0.785" stop-color="#69cc00"/><stop offset="0.874" stop-color="#91cc00"/><stop offset="1" stop-color="#b9cc00"/></linearGradient>
<linearGradient id="o72"><stop offset="0" stop-color="#00cca9"/><stop offset="0.278" stop-color="#00cc9a"/><stop offset="0.469" stop-color="#00cc85"/><stop offset="0.538" stop-color="#00cc77"/><stop offset="0.594" stop-color="#00cc66"/><stop offset="0.636" stop-color="#00cc52"/><stop offset="0.668" stop-color="#00cc39"/><stop offset="0.673" stop-color="#03cc35"/><stop offset="0.677" stop-color="#15cc34"/><stop offset="0.682" stop-color="#1fcc32"/><stop offset="0.696" stop-color="#32cc2e"/><stop offset="0.719" stop-color="#47cc27"/><stop offset="0.752" stop-color="#5bcc17"/><stop offset="0.775" stop-color="#68cc00"/><stop offset="0.868" stop-color="#93cc00"/><stop offset="1" stop-color="#bccc00"/></linearGradient>
<linearGradient id="o73"><stop offset="0" stop-color="#00cca9"/><stop offset="0.276" stop-color="#00cc9b"/><stop offset="0.464" stop-color="#00cc85"/><stop offset="0.533" stop-color="#00cc77"/><stop offset="0.589" stop-color="#00cc67"/><stop offset="0.63" stop-color="#00cc53"/><stop offset="0.662" stop-color="#00cc3a"/><stop offset="0.671" stop-color="#1bcc37"/><stop offset="0.685" stop-color="#30cc33"/><stop offset="0.708" stop-color="#45cc2c"/><stop offset="0.745" stop-color="#5dcc1d"/><stop offset="0.763" stop-color="#67cc11"/><stop offset="0.777" stop-color="#6ecc00"/><stop offset="0.874" stop-color="#99cc00"/><stop offset="1" stop-color="#c0cc00"/></linearGradient>
<linearGradient id="o74"><stop offset="0" stop-color="#00ccaa"/><stop offset="0.269" stop-color="#00cc9b"/><stop offset="0.457" stop-color="#00cc87"/><stop offset="0.58" stop-color="#00cc69"/><stop offset="0.621" stop-color="#00cc57"/><stop offset="0.653" stop-color="#00cc40"/><stop offset="0.658" stop-color="#04cc3c"/><stop offset="0.662" stop-color="#16cc3b"/><stop offset="0.667" stop-color="#20cc3a"/><stop offset="0.68" stop-color="#33cc36"/><stop offset="0.703" stop-color="#47cc30"/><stop offset="0.74" stop-color="#5fcc23"/><stop offset="0.763" stop-color="#6bcc16"/><stop offset="0.785" stop-color="#76cc00"/><stop offset="0.877" stop-color="#9dcc00"/><stop offset="1" stop-color="#c3cc00"/></linearGradient>
<linearGradient id="o75"><stop offset="0" stop-color="#00ccaa"/><stop offset="0.267" stop-color="#00cc9c"/><stop offset="0.452" stop-color="#00cc87"/><stop offset="0.575" stop-color="#00cc6a"/><stop offset="0.615" stop-color="#00cc57"/><stop offset="0.647" stop-color="#00cc41"/><stop offset="0.656" stop-color="#1bcc3e"/><stop offset="0.67" stop-color="#30cc3b"/><stop offset="0.697" stop-color="#49cc34"/><stop offset="0.733" stop-color="#60cc28"/><stop offset="0.765" stop-color="#71cc18"/><stop offset="0.787" stop-color="#7bcc00"/><stop offset="0.878" stop-color="#a1cc00"/><stop offset="1" stop-color="#c7cc00"/></linearGradient>
<linearGradient id="o76"><stop offset="0" stop-color="#00ccab"/><stop offset="0.265" stop-color="#00cc9c"/><stop offset="0.444" stop-color="#00cc89"/><stop offset="0.565" stop-color="#00cc6c"/><stop offset="0.605" stop-color="#00cc5b"/><stop offset="0.637" stop-color="#00cc46"/><stop offset="0.641" stop-color="#05cc42"/><stop offset="0.646" stop-color="#17cc41"/><stop offset="0.65" stop-color="#20cc40"/><stop offset="0.664" stop-color="#33cc3d"/><stop offset="0.691" stop-color="#4bcc37"/><stop offset="0.726" stop-color="#62cc2c"/><stop offset="0.767" stop-color="#76cc19"/><stop offset="0.78" stop-color="#7ccc0e"/><stop offset="0.789" stop-color="#80cc00"/><stop offset="0.879" stop-color="#a5cc00"/><stop offset="1" stop-color="#cbcc00"/></linearGradient>
<linearGradient id="o77"><stop offset="0" stop-color="#00ccab"/><stop offset="0.263" stop-color="#00cc9d"/><stop offset="0.441" stop-color="#00cc89"/><stop offset="0.561" stop-color="#00cc6d"/><stop offset="0.601" stop-color="#00cc5b"/><stop offset="0.633" stop-color="#00cc46"/><stop offset="0.641" stop-color="#1ccc44"/><stop offset="0.659" stop-color="#36cc40"/><stop offset="0.686" stop-color="#4dcc3a"/><stop offset="0.722" stop-color="#64cc30"/><stop offset="0.771" stop-color="#7ccc1a"/><stop offset="0.797" stop-color="#88cc00"/><stop offset="0.9" stop-color="#b0cc00"/><stop offset="1" stop-color="#ccca00"/></linearGradient>
<linearGradient id="o78"><stop offset="0" stop-color="#00ccab"/><stop offset="0.257" stop-color="#00cc9e"/><stop offset="0.434" stop-color="#00cc8a"/><stop offset="0.553" stop-color="#00cc6e"/><stop offset="0.593" stop-color="#00cc5d"/><stop offset="0.624" stop-color="#00cc49"/><stop offset="0.633" stop-color="#1ccc47"/><stop offset="0.65" stop-color="#36cc43"/><stop offset="0.677" stop-color="#4ecc3e"/><stop offset="0.717" stop-color="#67cc33"/><stop offset="0.77" stop-color="#80cc1d"/><stop offset="0.801" stop-color="#8ecc00"/><stop offset="0.929" stop-color="#bdcc00"/><stop offset="0.978" stop-color="#cccc00"/><stop offset="1" stop-color="#ccc600"/></linearGradient>
<linearGradient id="o79"><stop offset="0" stop-color="#00ccac"/><stop offset="0.25" stop-color="#00cc9f"/><stop offset="0.421" stop-color="#00cc8c"/><stop offset="0.539" stop-color="#00cc72"/><stop offset="0.583" stop-color="#00cc61"/><stop offset="0.614" stop-color="#00cc4e"/><stop offset="0.618" stop-color="#07cc4b"/><stop offset="0.623" stop-color="#18cc4a"/><stop offset="0.627" stop-color="#21cc49"/><stop offset="0.645" stop-color="#39cc46"/><stop offset="0.675" stop-color="#53cc3f"/><stop offset="0.719" stop-color="#6dcc34"/><stop offset="0.776" stop-color="#88cc1b"/><stop offset="0.789" stop-color="#8dcc11"/><stop offset="0.803" stop-color="#92cc00"/><stop offset="0.877" stop-color="#b0cc00"/><stop offset="0.965" stop-color="#cccc00"/><stop offset="1" stop-color="#ccc300"/></linearGradient>
<linearGradient id="o80"><stop offset="0" stop-color="#00ccac"/><stop offset="0.248" stop-color="#00cc9f"/><stop offset="0.417" stop-color="#00cc8d"/><stop offset="0.535" stop-color="#00cc73"/><stop offset="0.578" stop-color="#00cc61"/><stop offset="0.609" stop-color="#00cc4e"/><stop offset="0.617" stop-color="#1dcc4c"/><stop offset="0.639" stop-color="#3bcc48"/><stop offset="0.67" stop-color="#55cc42"/><stop offset="0.713" stop-color="#6ecc37"/><stop offset="0.774" stop-color="#8bcc1f"/><stop offset="0.791" stop-color="#92cc13"/><stop offset="0.804" stop-color="#97cc00"/><stop offset="0.948" stop-color="#cbcc00"/><stop offset="1" stop-color="#ccbf00"/></linearGradient>
<linearGradient id="o81"><stop offset="0" stop-color="#00ccad"/><stop offset="0.241" stop-color="#00cca0"/><stop offset="0.409" stop-color="#00cc8e"/><stop offset="0.526" stop-color="#00cc75"/><stop offset="0.569" stop-color="#00cc64"/><stop offset="0.599" stop-color="#00cc53"/><stop offset="0.603" stop-color="#08cc50"/><stop offset="0.608" stop-color="#18cc4f"/><stop offset="0.612" stop-color="#22cc4f"/><stop offset="0.634" stop-color="#3ecc4b"/><stop offset="0.668" stop-color="#59cc44"/><stop offset="0.716" stop-color="#74cc38"/><stop offset="0.776" stop-color="#90cc21"/><stop offset="0.793" stop-color="#97cc14"/><stop offset="0.806" stop-color="#9ccc02"/><stop offset="0.81" stop-color="#9ecc00"/><stop offset="0.935" stop-color="#cbcc00"/><stop offset="1" stop-color="#ccbc00"/></linearGradient>
<linearGradient id="o82"><stop offset="0" stop-color="#00ccad"/><stop offset="0.239" stop-color="#00cca1"/><stop offset="0.406" stop-color="#00cc8f"/><stop offset="0.521" stop-color="#00cc76"/><stop offset="0.564" stop-color="#00cc65"/><stop offset="0.594" stop-color="#00cc53"/><stop offset="0.598" stop-color="#12cc52"/><stop offset="0.603" stop-color="#1ecc52"/><stop offset="0.624" stop-color="#3ccc4e"/><stop offset="0.662" stop-color="#5bcc47"/><stop offset="0.714" stop-color="#78cc3a"/><stop offset="0.782" stop-color="#97cc1f"/><stop offset="0.799" stop-color="#9ecc12"/><stop offset="0.812" stop-color="#a3cc00"/><stop offset="0.923" stop-color="#cbcc00"/><stop offset="1" stop-color="#ccb800"/></linearGradient>
<linearGradient id="o83"><stop offset="0" stop-color="#00ccae"/><stop offset="0.234" stop-color="#00cca1"/><stop offset="0.399" stop-color="#00cc90"/><stop offset="0.514" stop-color="#00cc77"/><stop offset="0.556" stop-color="#00cc67"/><stop offset="0.586" stop-color="#00cc56"/><stop offset="0.59" stop-color="#12cc55"/><stop offset="0.599" stop-color="#26cc53"/><stop offset="0.62" stop-color="#41cc50"/><stop offset="0.658" stop-color="#5ecc49"/><stop offset="0.709" stop-color="#7bcc3d"/><stop offset="0.781" stop-color="#9bcc22"/><stop offset="0.798" stop-color="#a2cc16"/><stop offset="0.815" stop-color="#a9cc00"/><stop offset="0.913" stop-color="#cccc00"/><stop offset="1" stop-color="#ccb500"/></linearGradient>
<linearGradient id="o84"><stop offset="0" stop-color="#00ccae"/><stop offset="0.232" stop-color="#00cca2"/><stop offset="0.392" stop-color="#00cc91"/><stop offset="0.505" stop-color="#00cc7a"/><stop offset="0.543" stop-color="#00cc6c"/><stop offset="0.577" stop-color="#00cc5a"/><stop offset="0.589" stop-color="#23cc56"/><stop offset="0.615" stop-color="#43cc52"/><stop offset="0.653" stop-color="#60cc4b"/><stop offset="0.712" stop-color="#81cc3e"/><stop offset="0.783" stop-color="#a0cc23"/><stop offset="0.804" stop-color="#a8cc13"/><stop offset="0.817" stop-color="#adcc00"/><stop offset="0.901" stop-color="#cccc00"/><stop offset="1" stop-color="#ccb200"/></linearGradient>
<linearGradient id="o85"><stop offset="0" stop-color="#00ccae"/><stop offset="0.23" stop-color="#00cca3"/><stop offset="0.389" stop-color="#00cc92"/><stop offset="0.502" stop-color="#00cc7a"/><stop offset="0.54" stop-color="#00cc6d"/><stop offset="0.573" stop-color="#00cc5b"/><stop offset="0.577" stop-color="#13cc5a"/><stop offset="0.586" stop-color="#27cc58"/><stop offset="0.611" stop-color="#45cc55"/><stop offset="0.653" stop-color="#65cc4d"/><stop offset="0.711" stop-color="#84cc40"/><stop offset="0.787" stop-color="#a5cc24"/><stop offset="0.808" stop-color="#adcc15"/><stop offset="0.82" stop-color="#b2cc01"/><stop offset="0.824" stop-color="#b4cc00"/><stop offset="0.891" stop-color="#cccc00"/><stop offset="1" stop-color="#ccaf00"/></linearGradient>
<linearGradient id="o86"><stop offset="0" stop-color="#00ccaf"/><stop offset="0.224" stop-color="#00cca3"/><stop offset="0.382" stop-color="#00cc93"/><stop offset="0.49" stop-color="#00cc7e"/><stop offset="0.531" stop-color="#00cc6f"/><stop offset="0.564" stop-color="#00cc5e"/><stop offset="0.573" stop-color="#1acc5c"/><stop offset="0.581" stop-color="#2bcc5b"/><stop offset="0.606" stop-color="#48cc57"/><stop offset="0.651" stop-color="#69cc4f"/><stop offset="0.714" stop-color="#8acc41"/><stop offset="0.759" stop-color="#9ecc33"/><stop offset="0.793" stop-color="#abcc23"/><stop offset="0.813" stop-color="#b4cc12"/><stop offset="0.826" stop-color="#b8cc00"/><stop offset="0.88" stop-color="#cccb00"/><stop offset="1" stop-color="#ccac00"/></linearGradient>
<linearGradient id="o87"><stop offset="0" stop-color="#00ccaf"/><stop offset="0.219" stop-color="#00cca4"/><stop offset="0.375" stop-color="#00cc94"/><stop offset="0.482" stop-color="#00cc7f"/><stop offset="0.557" stop-color="#00cc60"/><stop offset="0.565" stop-color="#1acc5e"/><stop offset="0.573" stop-color="#2bcc5d"/><stop offset="0.598" stop-color="#48cc59"/><stop offset="0.647" stop-color="#6ccc51"/><stop offset="0.718" stop-color="#90cc41"/><stop offset="0.792" stop-color="#b0cc25"/><stop offset="0.812" stop-color="#b8cc16"/><stop offset="0.829" stop-color="#becc00"/><stop offset="0.866" stop-color="#cccc00"/><stop offset="1" stop-color="#cca900"/></linearGradient>
<linearGradient id="o88"><stop offset="0" stop-color="#00ccb0"/><stop offset="0.217" stop-color="#00cca5"/><stop offset="0.372" stop-color="#00cc95"/><stop offset="0.479" stop-color="#00cc80"/><stop offset="0.552" stop-color="#00cc61"/><stop offset="0.556" stop-color="#14cc61"/><stop offset="0.564" stop-color="#28cc60"/><stop offset="0.593" stop-color="#4acc5c"/><stop offset="0.642" stop-color="#6ecc53"/><stop offset="0.716" stop-color="#94cc44"/><stop offset="0.765" stop-color="#a9cc34"/><stop offset="0.798" stop-color="#b6cc24"/><stop offset="0.818" stop-color="#becc14"/><stop offset="0.83" stop-color="#c3cc00"/><stop offset="0.855" stop-color="#cccc00"/><stop offset="0.92" stop-color="#ccb700"/><stop offset="1" stop-color="#cca600"/></linearGradient>
<linearGradient id="o89"><stop offset="0" stop-color="#00ccb0"/><stop offset="0.215" stop-color="#00cca5"/><stop offset="0.366" stop-color="#00cc97"/><stop offset="0.472" stop-color="#00cc82"/><stop offset="0.545" stop-color="#00cc65"/><stop offset="0.553" stop-color="#1bcc63"/><stop offset="0.561" stop-color="#2ccc62"/><stop offset="0.593" stop-color="#50cc5d"/><stop offset="0.646" stop-color="#74cc54"/><stop offset="0.724" stop-color="#9bcc43"/><stop offset="0.801" stop-color="#bbcc26"/><stop offset="0.821" stop-color="#c3cc16"/><stop offset="0.833" stop-color="#c8cc01"/><stop offset="0.846" stop-color="#cccc00"/><stop offset="0.915" stop-color="#ccb600"/><stop offset="1" stop-color="#cca300"/></linearGradient>
<linearGradient id="o90"><stop offset="0" stop-color="#00ccb1"/><stop offset="0.21" stop-color="#00cca6"/><stop offset="0.36" stop-color="#00cc98"/><stop offset="0.465" stop-color="#00cc83"/><stop offset="0.537" stop-color="#00cc67"/><stop offset="0.545" stop-color="#1bcc65"/><stop offset="0.554" stop-color="#2ccc64"/><stop offset="0.586" stop-color="#50cc60"/><stop offset="0.642" stop-color="#77cc57"/><stop offset="0.727" stop-color="#a1cc44"/><stop offset="0.804" stop-color="#c1cc26"/><stop offset="0.824" stop-color="#c9cc15"/><stop offset="0.836" stop-color="#cccb00"/><stop offset="0.909" stop-color="#ccb400"/><stop offset="1" stop-color="#cca000"/></linearGradient>
<linearGradient id="o91"><stop offset="0" stop-color="#00ccb1"/><stop offset="0.208" stop-color="#00cca7"/><stop offset="0.357" stop-color="#00cc98"/><stop offset="0.461" stop-color="#00cc84"/><stop offset="0.533" stop-color="#00cc68"/><stop offset="0.537" stop-color="#16cc68"/><stop offset="0.545" stop-color="#29cc67"/><stop offset="0.561" stop-color="#3fcc64"/><stop offset="0.581" stop-color="#53cc62"/><stop offset="0.641" stop-color="#7bcc58"/><stop offset="0.733" stop-color="#a8cc44"/><stop offset="0.806" stop-color="#c6cc27"/><stop offset="0.826" stop-color="#ccca17"/><stop offset="0.838" stop-color="#ccc603"/><stop offset="0.842" stop-color="#ccc400"/><stop offset="0.914" stop-color="#ccaf00"/><stop offset="1" stop-color="#cc9d00"/></linearGradient>
<linearGradient id="o92"><stop offset="0" stop-color="#00ccb2"/><stop offset="0.203" stop-color="#00cca8"/><stop offset="0.35" stop-color="#00cc9a"/><stop offset="0.453" stop-color="#00cc86"/><stop offset="0.525" stop-color="#00cc6b"/><stop offset="0.533" stop-color="#1ccc6a"/><stop offset="0.541" stop-color="#2dcc69"/><stop offset="0.557" stop-color="#42cc67"/><stop offset="0.581" stop-color="#58cc63"/><stop offset="0.644" stop-color="#81cc59"/><stop offset="0.744" stop-color="#b0cc43"/><stop offset="0.811" stop-color="#cccc26"/><stop offset="0.831" stop-color="#ccc413"/><stop offset="0.843" stop-color="#ccc000"/><stop offset="0.915" stop-color="#ccac00"/><stop offset="1" stop-color="#cc9b00"/></linearGradient>
<linearGradient id="o93"><stop offset="0" stop-color="#00ccb2"/><stop offset="0.202" stop-color="#00cca8"/><stop offset="0.345" stop-color="#00cc9b"/><stop offset="0.448" stop-color="#00cc88"/><stop offset="0.519" stop-color="#00cc6d"/><stop offset="0.527" stop-color="#1ccc6c"/><stop offset="0.539" stop-color="#33cc6a"/><stop offset="0.554" stop-color="#46cc68"/><stop offset="0.578" stop-color="#5bcc65"/><stop offset="0.65" stop-color="#88cc5a"/><stop offset="0.756" stop-color="#bacc41"/><stop offset="0.8" stop-color="#cccc2f"/><stop offset="0.812" stop-color="#ccc827"/><stop offset="0.832" stop-color="#ccc017"/><stop offset="0.848" stop-color="#ccbb00"/><stop offset="1" stop-color="#cc9800"/></linearGradient>
<linearGradient id="o94"><stop offset="0" stop-color="#00ccb3"/><stop offset="0.196" stop-color="#00cca9"/><stop offset="0.338" stop-color="#00cc9c"/><stop offset="0.44" stop-color="#00cc8a"/><stop offset="0.511" stop-color="#00cc71"/><stop offset="0.515" stop-color="#01cc6f"/><stop offset="0.519" stop-color="#17cc6e"/><stop offset="0.523" stop-color="#22cc6e"/><stop offset="0.534" stop-color="#36cc6c"/><stop offset="0.554" stop-color="#4dcc6a"/><stop offset="0.578" stop-color="#60cc67"/><stop offset="0.656" stop-color="#90cc5a"/><stop offset="0.778" stop-color="#c7cc3b"/><stop offset="0.79" stop-color="#cccc36"/><stop offset="0.825" stop-color="#ccbf1f"/><stop offset="0.837" stop-color="#ccba13"/><stop offset="0.849" stop-color="#ccb700"/><stop offset="1" stop-color="#cc9500"/></linearGradient>
<linearGradient id="o95"><stop offset="0" stop-color="#00ccb3"/><stop offset="0.199" stop-color="#00cca9"/><stop offset="0.339" stop-color="#00cc9c"/><stop offset="0.437" stop-color="#00cc8b"/><stop offset="0.507" stop-color="#00cc72"/><stop offset="0.515" stop-color="#1dcc70"/><stop offset="0.526" stop-color="#34cc6f"/><stop offset="0.546" stop-color="#4bcc6c"/><stop offset="0.573" stop-color="#62cc69"/><stop offset="0.651" stop-color="#91cc5d"/><stop offset="0.776" stop-color="#cacc3d"/><stop offset="0.827" stop-color="#ccba1f"/><stop offset="0.854" stop-color="#ccb100"/><stop offset="1" stop-color="#cc9200"/></linearGradient>
<linearGradient id="o96"><stop offset="0" stop-color="#00ccb3"/><stop offset="0.194" stop-color="#00ccaa"/><stop offset="0.333" stop-color="#00cc9d"/><stop offset="0.43" stop-color="#00cc8c"/><stop offset="0.5" stop-color="#00cc74"/><stop offset="0.508" stop-color="#1dcc72"/><stop offset="0.519" stop-color="#34cc71"/><stop offset="0.539" stop-color="#4ccc6f"/><stop offset="0.566" stop-color="#63cc6b"/><stop offset="0.643" stop-color="#92cc60"/><stop offset="0.767" stop-color="#cbcc42"/><stop offset="0.829" stop-color="#ccb51e"/><stop offset="0.845" stop-color="#ccb00f"/><stop offset="0.853" stop-color="#ccae00"/><stop offset="1" stop-color="#cc9000"/></linearGradient>
<linearGradient id="o97"><stop offset="0" stop-color="#00ccb4"/><stop offset="0.189" stop-color="#00ccab"/><stop offset="0.328" stop-color="#00cc9f"/><stop offset="0.424" stop-color="#00cc8e"/><stop offset="0.493" stop-color="#00cc77"/><stop offset="0.497" stop-color="#03cc75"/><stop offset="0.501" stop-color="#18cc75"/><stop offset="0.505" stop-color="#23cc74"/><stop offset="0.516" stop-color="#37cc73"/><stop offset="0.536" stop-color="#4ecc71"/><stop offset="0.559" stop-color="#62cc6e"/><stop offset="0.636" stop-color="#92cc63"/><stop offset="0.759" stop-color="#cccc47"/><stop offset="0.829" stop-color="#ccb222"/><stop offset="0.844" stop-color="#ccad15"/><stop offset="0.859" stop-color="#cca900"/><stop offset="1" stop-color="#cc8d00"/></linearGradient>
<linearGradient id="o98"><stop offset="0" stop-color="#00ccb4"/><stop offset="0.188" stop-color="#00ccac"/><stop offset="0.322" stop-color="#00cca0"/><stop offset="0.418" stop-color="#00cc8f"/><stop offset="0.487" stop-color="#00cc79"/><stop offset="0.49" stop-color="#04cc77"/><stop offset="0.494" stop-color="#18cc77"/><stop offset="0.498" stop-color="#23cc76"/><stop offset="0.51" stop-color="#38cc75"/><stop offset="0.529" stop-color="#4ecc73"/><stop offset="0.552" stop-color="#62cc70"/><stop offset="0.628" stop-color="#92cc65"/><stop offset="0.747" stop-color="#cbcc4c"/><stop offset="0.828" stop-color="#ccaf23"/><stop offset="0.847" stop-color="#cca914"/><stop offset="0.862" stop-color="#cca500"/><stop offset="1" stop-color="#cc8a00"/></linearGradient>
<linearGradient id="o99"><stop offset="0" stop-color="#00ccb5"/><stop offset="0.186" stop-color="#00ccac"/><stop offset="0.319" stop-color="#00cca0"/><stop offset="0.414" stop-color="#00cc90"/><stop offset="0.483" stop-color="#00cc7a"/><stop offset="0.49" stop-color="#1ecc79"/><stop offset="0.502" stop-color="#35cc77"/><stop offset="0.521" stop-color="#4dcc75"/><stop offset="0.544" stop-color="#61cc73"/><stop offset="0.62" stop-color="#92cc68"/><stop offset="0.738" stop-color="#cbcc51"/><stop offset="0.829" stop-color="#ccab23"/><stop offset="0.848" stop-color="#cca515"/><stop offset="0.863" stop-color="#cca100"/><stop offset="1" stop-color="#cc8800"/></linearGradient>
<linearGradient id="o100"><stop offset="0" stop-color="#00ccb5"/><stop offset="0.181" stop-color="#00ccad"/><stop offset="0.314" stop-color="#00cca2"/><stop offset="0.408" stop-color="#00cc92"/><stop offset="0.476" stop-color="#00cc7c"/><stop offset="0.484" stop-color="#1fcc7b"/><stop offset="0.495" stop-color="#36cc7a"/><stop offset="0.514" stop-color="#4dcc78"/><stop offset="0.537" stop-color="#62cc75"/><stop offset="0.609" stop-color="#91cc6c"/><stop offset="0.726" stop-color="#cbcc55"/><stop offset="0.828" stop-color="#cca825"/><stop offset="0.851" stop-color="#cca114"/><stop offset="0.866" stop-color="#cc9d00"/><stop offset="1" stop-color="#cc8500"/></linearGradient>
<linearGradient id="o101"><stop offset="0" stop-color="#00ccb6"/><stop offset="0.308" stop-color="#00cca3"/><stop offset="0.402" stop-color="#00cc94"/><stop offset="0.47" stop-color="#00cc7f"/><stop offset="0.474" stop-color="#06cc7d"/><stop offset="0.477" stop-color="#19cc7d"/><stop offset="0.481" stop-color="#24cc7d"/><stop offset="0.489" stop-color="#33cc7c"/><stop offset="0.508" stop-color="#4ccc7a"/><stop offset="0.53" stop-color="#61cc78"/><stop offset="0.602" stop-color="#90cc6f"/><stop offset="0.718" stop-color="#cbcc59"/><stop offset="0.831" stop-color="#cca425"/><stop offset="0.853" stop-color="#cc9d15"/><stop offset="0.868" stop-color="#cc9900"/><stop offset="1" stop-color="#cc8300"/></linearGradient>
<linearGradient id="o102"><stop offset="0" stop-color="#00ccb6"/><stop offset="0.307" stop-color="#00cca3"/><stop offset="0.4" stop-color="#00cc94"/><stop offset="0.464" stop-color="#00cc81"/><stop offset="0.467" stop-color="#06cc7f"/><stop offset="0.471" stop-color="#1acc7f"/><stop offset="0.475" stop-color="#24cc7f"/><stop offset="0.482" stop-color="#33cc7e"/><stop offset="0.501" stop-color="#4ccc7c"/><stop offset="0.523" stop-color="#61cc7a"/><stop offset="0.594" stop-color="#91cc71"/><stop offset="0.71" stop-color="#cccc5d"/><stop offset="0.83" stop-color="#cca126"/><stop offset="0.856" stop-color="#cc9914"/><stop offset="0.871" stop-color="#cc9500"/><stop offset="1" stop-color="#cc8000"/></linearGradient>
<linearGradient id="o103"><stop offset="0" stop-color="#00ccb7"/><stop offset="0.304" stop-color="#00cca4"/><stop offset="0.397" stop-color="#00cc95"/><stop offset="0.46" stop-color="#00cc82"/><stop offset="0.468" stop-color="#20cc81"/><stop offset="0.479" stop-color="#37cc80"/><stop offset="0.497" stop-color="#4ecc7e"/><stop offset="0.519" stop-color="#63cc7c"/><stop offset="0.59" stop-color="#93cc73"/><stop offset="0.701" stop-color="#cccc61"/><stop offset="0.761" stop-color="#ccb347"/><stop offset="0.831" stop-color="#cc9d26"/><stop offset="0.857" stop-color="#cc9615"/><stop offset="0.872" stop-color="#cc9200"/><stop offset="1" stop-color="#cc7e00"/></linearGradient>
<linearGradient id="o104"><stop offset="0" stop-color="#00ccb7"/><stop offset="0.299" stop-color="#00cca5"/><stop offset="0.391" stop-color="#00cc97"/><stop offset="0.454" stop-color="#00cc84"/><stop offset="0.458" stop-color="#13cc83"/><stop offset="0.461" stop-color="#20cc83"/><stop offset="0.469" stop-color="#31cc82"/><stop offset="0.487" stop-color="#4bcc81"/><stop offset="0.509" stop-color="#61cc7e"/><stop offset="0.579" stop-color="#92cc76"/><stop offset="0.69" stop-color="#cccc65"/><stop offset="0.756" stop-color="#ccb149"/><stop offset="0.83" stop-color="#cc9a28"/><stop offset="0.86" stop-color="#cc9214"/><stop offset="0.875" stop-color="#cc8e00"/><stop offset="1" stop-color="#cc7b00"/></linearGradient>
<linearGradient id="o105"><stop offset="0" stop-color="#00ccb8"/><stop offset="0.294" stop-color="#00cca7"/><stop offset="0.382" stop-color="#00cc9a"/><stop offset="0.448" stop-color="#00cc87"/><stop offset="0.451" stop-color="#09cc86"/><stop offset="0.455" stop-color="#1bcc85"/><stop offset="0.459" stop-color="#26cc85"/><stop offset="0.466" stop-color="#34cc84"/><stop offset="0.484" stop-color="#4dcc83"/><stop offset="0.506" stop-color="#63cc81"/><stop offset="0.576" stop-color="#93cc79"/><stop offset="0.683" stop-color="#cccc68"/><stop offset="0.752" stop-color="#ccaf4b"/><stop offset="0.833" stop-color="#cc9628"/><stop offset="0.859" stop-color="#cc9018"/><stop offset="0.881" stop-color="#cc8a00"/><stop offset="1" stop-color="#cc7900"/></linearGradient>
<linearGradient id="o106"><stop offset="0" stop-color="#00ccb8"/><stop offset="0.288" stop-color="#00cca8"/><stop offset="0.376" stop-color="#00cc9b"/><stop offset="0.442" stop-color="#00cc89"/><stop offset="0.445" stop-color="#09cc88"/><stop offset="0.449" stop-color="#1bcc87"/><stop offset="0.46" stop-color="#35cc86"/><stop offset="0.478" stop-color="#4ecc85"/><stop offset="0.5" stop-color="#63cc83"/><stop offset="0.566" stop-color="#92cc7c"/><stop offset="0.672" stop-color="#cbcc6c"/><stop offset="0.748" stop-color="#ccad4d"/><stop offset="0.836" stop-color="#cc9227"/><stop offset="0.865" stop-color="#cc8b14"/><stop offset="0.88" stop-color="#cc8701"/><stop offset="1" stop-color="#cc7600"/></linearGradient>
<linearGradient id="o107"><stop offset="0" stop-color="#00ccb9"/><stop offset="0.286" stop-color="#00cca9"/><stop offset="0.373" stop-color="#00cc9c"/><stop offset="0.438" stop-color="#00cc8a"/><stop offset="0.442" stop-color="#15cc8a"/><stop offset="0.446" stop-color="#21cc89"/><stop offset="0.453" stop-color="#32cc89"/><stop offset="0.471" stop-color="#4ccc87"/><stop offset="0.493" stop-color="#62cc85"/><stop offset="0.558" stop-color="#92cc7e"/><stop offset="0.663" stop-color="#cbcc70"/><stop offset="0.743" stop-color="#ccab4f"/><stop offset="0.833" stop-color="#cc9029"/><stop offset="0.862" stop-color="#cc8917"/><stop offset="0.884" stop-color="#cc8400"/><stop offset="1" stop-color="#cc7300"/></linearGradient>
<linearGradient id="o108"><stop offset="0" stop-color="#00ccb9"/><stop offset="0.285" stop-color="#00cca9"/><stop offset="0.372" stop-color="#00cc9d"/><stop offset="0.433" stop-color="#00cc8c"/><stop offset="0.437" stop-color="#15cc8c"/><stop offset="0.44" stop-color="#22cc8b"/><stop offset="0.448" stop-color="#32cc8b"/><stop offset="0.466" stop-color="#4dcc89"/><stop offset="0.487" stop-color="#63cc87"/><stop offset="0.556" stop-color="#95cc80"/><stop offset="0.657" stop-color="#cccc72"/><stop offset="0.736" stop-color="#ccaa51"/><stop offset="0.838" stop-color="#cc8c28"/><stop offset="0.866" stop-color="#cc8517"/><stop offset="0.888" stop-color="#cc8000"/><stop offset="1" stop-color="#cc7100"/></linearGradient>
<linearGradient id="o109"><stop offset="0" stop-color="#00ccba"/><stop offset="0.28" stop-color="#00ccab"/><stop offset="0.366" stop-color="#00cc9f"/><stop offset="0.427" stop-color="#00cc8f"/><stop offset="0.43" stop-color="#0bcc8e"/><stop offset="0.434" stop-color="#1dcc8e"/><stop offset="0.444" stop-color="#36cc8d"/><stop offset="0.459" stop-color="#4bcc8c"/><stop offset="0.48" stop-color="#62cc8a"/><stop offset="0.545" stop-color="#92cc83"/><stop offset="0.645" stop-color="#cbcc76"/><stop offset="0.735" stop-color="#cca752"/><stop offset="0.839" stop-color="#cc8928"/><stop offset="0.871" stop-color="#cc8115"/><stop offset="0.889" stop-color="#cc7d00"/><stop offset="1" stop-color="#cc6f00"/></linearGradient>
<linearGradient id="o110"><stop offset="0" stop-color="#00ccba"/><stop offset="0.275" stop-color="#00ccac"/><stop offset="0.36" stop-color="#00cca0"/><stop offset="0.421" stop-color="#00cc91"/><stop offset="0.428" stop-color="#1dcc90"/><stop offset="0.439" stop-color="#36cc8f"/><stop offset="0.453" stop-color="#4bcc8e"/><stop offset="0.474" stop-color="#62cc8c"/><stop offset="0.538" stop-color="#93cc86"/><stop offset="0.638" stop-color="#cccc79"/><stop offset="0.724" stop-color="#cca756"/><stop offset="0.838" stop-color="#cc8629"/><stop offset="0.87" stop-color="#cc7e17"/><stop offset="0.891" stop-color="#cc7a00"/><stop offset="1" stop-color="#cc6c00"/></linearGradient>
<linearGradient id="o111"><stop offset="0" stop-color="#00ccbb"/><stop offset="0.27" stop-color="#00ccad"/><stop offset="0.355" stop-color="#00cca2"/><stop offset="0.416" stop-color="#00cc93"/><stop offset="0.423" stop-color="#1dcc92"/><stop offset="0.433" stop-color="#37cc91"/><stop offset="0.448" stop-color="#4ccc90"/><stop offset="0.469" stop-color="#63cc8e"/><stop offset="0.533" stop-color="#94cc88"/><stop offset="0.629" stop-color="#cbcc7d"/><stop offset="0.721" stop-color="#cca557"/><stop offset="0.842" stop-color="#cc8228"/><stop offset="0.874" stop-color="#cc7b16"/><stop offset="0.895" stop-color="#cc7600"/><stop offset="1" stop-color="#cc6a00"/></linearGradient>
<linearGradient id="o112"><stop offset="0" stop-color="#00ccbc"/><stop offset="0.268" stop-color="#00ccae"/><stop offset="0.353" stop-color="#00cca3"/><stop offset="0.413" stop-color="#00cc94"/><stop offset="0.416" stop-color="#17cc94"/><stop offset="0.427" stop-color="#34cc93"/><stop offset="0.441" stop-color="#4acc92"/><stop offset="0.462" stop-color="#62cc91"/><stop offset="0.522" stop-color="#91cc8b"/><stop offset="0.621" stop-color="#cccc80"/><stop offset="0.716" stop-color="#cca359"/><stop offset="0.843" stop-color="#cc7f28"/><stop offset="0.875" stop-color="#cc7817"/><stop offset="0.896" stop-color="#cc7300"/><stop offset="1" stop-color="#cc6700"/></linearGradient>
<linearGradient id="o113"><stop offset="0" stop-color="#00ccbc"/><stop offset="0.267" stop-color="#00ccaf"/><stop offset="0.347" stop-color="#00cca4"/><stop offset="0.407" stop-color="#00cc96"/><stop offset="0.411" stop-color="#17cc96"/><stop offset="0.421" stop-color="#34cc95"/><stop offset="0.435" stop-color="#4acc94"/><stop offset="0.456" stop-color="#62cc93"/><stop offset="0.516" stop-color="#92cc8e"/><stop offset="0.611" stop-color="#cbcc83"/><stop offset="0.712" stop-color="#cca15a"/><stop offset="0.846" stop-color="#cc7b28"/><stop offset="0.877" stop-color="#cc7416"/><stop offset="0.898" stop-color="#cc7000"/><stop offset="1" stop-color="#cc6400"/></linearGradient>
<linearGradient id="o114"><stop offset="0" stop-color="#00ccbd"/><stop offset="0.262" stop-color="#00ccb0"/><stop offset="0.342" stop-color="#00cca6"/><stop offset="0.401" stop-color="#00cc99"/><stop offset="0.405" stop-color="#18cc98"/><stop offset="0.415" stop-color="#35cc98"/><stop offset="0.429" stop-color="#4bcc97"/><stop offset="0.45" stop-color="#63cc95"/><stop offset="0.51" stop-color="#93cc90"/><stop offset="0.604" stop-color="#cccc86"/><stop offset="0.705" stop-color="#cca05c"/><stop offset="0.845" stop-color="#cc7928"/><stop offset="0.88" stop-color="#cc7115"/><stop offset="0.901" stop-color="#cc6d00"/><stop offset="1" stop-color="#cc6200"/></linearGradient>
<linearGradient id="o115"><stop offset="0" stop-color="#00ccbd"/><stop offset="0.257" stop-color="#00ccb1"/><stop offset="0.337" stop-color="#00cca8"/><stop offset="0.396" stop-color="#00cc9b"/><stop offset="0.403" stop-color="#1fcc9a"/><stop offset="0.41" stop-color="#32cc9a"/><stop offset="0.424" stop-color="#49cc99"/><stop offset="0.444" stop-color="#62cc97"/><stop offset="0.503" stop-color="#92cc93"/><stop offset="0.597" stop-color="#cccc89"/><stop offset="0.701" stop-color="#cc9e5d"/><stop offset="0.851" stop-color="#cc7527"/><stop offset="0.882" stop-color="#cc6e16"/><stop offset="0.903" stop-color="#cc6a00"/><stop offset="1" stop-color="#cc5f00"/></linearGradient>
<linearGradient id="o116"><stop offset="0" stop-color="#00ccbe"/><stop offset="0.252" stop-color="#00ccb2"/><stop offset="0.332" stop-color="#00cca9"/><stop offset="0.39" stop-color="#00cc9d"/><stop offset="0.397" stop-color="#1fcc9c"/><stop offset="0.404" stop-color="#32cc9c"/><stop offset="0.418" stop-color="#4acc9b"/><stop offset="0.439" stop-color="#62cc9a"/><stop offset="0.497" stop-color="#93cc95"/><stop offset="0.587" stop-color="#cccc8d"/><stop offset="0.639" stop-color="#ccb275"/><stop offset="0.698" stop-color="#cc9c5e"/><stop offset="0.85" stop-color="#cc7228"/><stop offset="0.884" stop-color="#cc6a15"/><stop offset="0.905" stop-color="#cc6600"/><stop offset="1" stop-color="#cc5d00"/></linearGradient>
<linearGradient id="o117"><stop offset="0" stop-color="#00ccbe"/><stop offset="0.251" stop-color="#00ccb3"/><stop offset="0.385" stop-color="#00cc9f"/><stop offset="0.392" stop-color="#20cc9e"/><stop offset="0.399" stop-color="#32cc9e"/><stop offset="0.412" stop-color="#4acc9d"/><stop offset="0.433" stop-color="#63cc9c"/><stop offset="0.491" stop-color="#94cc98"/><stop offset="0.581" stop-color="#cccb8f"/><stop offset="0.632" stop-color="#ccb177"/><stop offset="0.691" stop-color="#cc9b60"/><stop offset="0.852" stop-color="#cc6f27"/><stop offset="0.887" stop-color="#cc6715"/><stop offset="0.907" stop-color="#cc6300"/><stop offset="1" stop-color="#cc5a00"/></linearGradient>
<linearGradient id="o118"><stop offset="0" stop-color="#00ccbf"/><stop offset="0.25" stop-color="#00ccb4"/><stop offset="0.383" stop-color="#00cca1"/><stop offset="0.386" stop-color="#1acca1"/><stop offset="0.397" stop-color="#36cca0"/><stop offset="0.41" stop-color="#4dcc9f"/><stop offset="0.427" stop-color="#62cc9e"/><stop offset="0.485" stop-color="#94cc9a"/><stop offset="0.574" stop-color="#cccb92"/><stop offset="0.626" stop-color="#ccb179"/><stop offset="0.687" stop-color="#cc9962"/><stop offset="0.855" stop-color="#cc6c27"/><stop offset="0.889" stop-color="#cc6415"/><stop offset="0.909" stop-color="#cc6000"/><stop offset="1" stop-color="#cc5700"/></linearGradient>
<linearGradient id="o119"><stop offset="0" stop-color="#00ccc0"/><stop offset="0.245" stop-color="#00ccb5"/><stop offset="0.378" stop-color="#01cca3"/><stop offset="0.381" stop-color="#1acca3"/><stop offset="0.391" stop-color="#37cca2"/><stop offset="0.405" stop-color="#4dcca2"/><stop offset="0.422" stop-color="#62cca1"/><stop offset="0.48" stop-color="#94cc9d"/><stop offset="0.565" stop-color="#cccc95"/><stop offset="0.626" stop-color="#ccac78"/><stop offset="0.701" stop-color="#cc915d"/><stop offset="0.861" stop-color="#cc6725"/><stop offset="0.891" stop-color="#cc6115"/><stop offset="0.912" stop-color="#cc5d00"/><stop offset="1" stop-color="#cc5500"/></linearGradient>
<linearGradient id="o120"><stop offset="0" stop-color="#00ccc0"/><stop offset="0.237" stop-color="#00ccb7"/><stop offset="0.369" stop-color="#00cca6"/><stop offset="0.372" stop-color="#02cca5"/><stop offset="0.376" stop-color="#1bcca5"/><stop offset="0.386" stop-color="#37cca4"/><stop offset="0.399" stop-color="#4ecca4"/><stop offset="0.416" stop-color="#63cca3"/><stop offset="0.47" stop-color="#93cc9f"/><stop offset="0.555" stop-color="#cccc99"/><stop offset="0.619" stop-color="#ccab7a"/><stop offset="0.694" stop-color="#cc905f"/><stop offset="0.86" stop-color="#cc6526"/><stop offset="0.893" stop-color="#cc5d14"/><stop offset="0.914" stop-color="#cc5900"/><stop offset="1" stop-color="#cc5200"/></linearGradient>
<linearGradient id="o121"><stop offset="0" stop-color="#00ccc1"/><stop offset="0.235" stop-color="#00ccb8"/><stop offset="0.366" stop-color="#00cca8"/><stop offset="0.373" stop-color="#22cca7"/><stop offset="0.38" stop-color="#34cca7"/><stop offset="0.393" stop-color="#4ccca6"/><stop offset="0.41" stop-color="#62cca5"/><stop offset="0.464" stop-color="#92cca2"/><stop offset="0.548" stop-color="#cccc9c"/><stop offset="0.612" stop-color="#ccab7d"/><stop offset="0.689" stop-color="#cc8e60"/><stop offset="0.861" stop-color="#cc6226"/><stop offset="0.894" stop-color="#cc5a15"/><stop offset="0.914" stop-color="#cc5600"/><stop offset="1" stop-color="#cc4f00"/></linearGradient>
<linearGradient id="o122"><stop offset="0" stop-color="#00ccc1"/><stop offset="0.235" stop-color="#00ccb9"/><stop offset="0.362" stop-color="#00ccaa"/><stop offset="0.369" stop-color="#22cca9"/><stop offset="0.375" stop-color="#35cca9"/><stop offset="0.389" stop-color="#4dcca8"/><stop offset="0.405" stop-color="#62cca7"/><stop offset="0.462" stop-color="#96cca4"/><stop offset="0.543" stop-color="#cccb9e"/><stop offset="0.606" stop-color="#cca97e"/><stop offset="0.683" stop-color="#cc8d62"/><stop offset="0.861" stop-color="#cc5f27"/><stop offset="0.898" stop-color="#cc5714"/><stop offset="0.918" stop-color="#cc5300"/><stop offset="1" stop-color="#cc4c00"/></linearGradient>
<linearGradient id="o123"><stop offset="0" stop-color="#00ccc2"/><stop offset="0.23" stop-color="#00ccba"/><stop offset="0.357" stop-color="#00ccac"/><stop offset="0.363" stop-color="#23ccab"/><stop offset="0.37" stop-color="#35ccab"/><stop offset="0.383" stop-color="#4dccab"/><stop offset="0.4" stop-color="#63ccaa"/><stop offset="0.453" stop-color="#94cca7"/><stop offset="0.533" stop-color="#cccca1"/><stop offset="0.597" stop-color="#ccaa82"/><stop offset="0.677" stop-color="#cc8c64"/><stop offset="0.863" stop-color="#cc5b26"/><stop offset="0.9" stop-color="#cc5313"/><stop offset="0.92" stop-color="#cc4f00"/><stop offset="1" stop-color="#cc4900"/></linearGradient>
<linearGradient id="o124"><stop offset="0" stop-color="#00ccc3"/><stop offset="0.225" stop-color="#00ccbc"/><stop offset="0.351" stop-color="#00ccae"/><stop offset="0.354" stop-color="#05ccae"/><stop offset="0.358" stop-color="#1cccae"/><stop offset="0.368" stop-color="#39ccad"/><stop offset="0.381" stop-color="#50ccad"/><stop offset="0.397" stop-color="#65ccac"/><stop offset="0.45" stop-color="#96cca9"/><stop offset="0.526" stop-color="#cccba4"/><stop offset="0.589" stop-color="#cca984"/><stop offset="0.672" stop-color="#cc8a65"/><stop offset="0.864" stop-color="#cc5826"/><stop offset="0.901" stop-color="#cc5014"/><stop offset="0.921" stop-color="#cc4c00"/><stop offset="1" stop-color="#cc4600"/></linearGradient>
<linearGradient id="o125"><stop offset="0" stop-color="#00ccc3"/><stop offset="0.221" stop-color="#00ccbd"/><stop offset="0.346" stop-color="#00ccb1"/><stop offset="0.349" stop-color="#06ccb0"/><stop offset="0.353" stop-color="#1dccb0"/><stop offset="0.356" stop-color="#29ccb0"/><stop offset="0.362" stop-color="#3accb0"/><stop offset="0.389" stop-color="#62ccaf"/><stop offset="0.438" stop-color="#92ccac"/><stop offset="0.517" stop-color="#cccca8"/><stop offset="0.583" stop-color="#cca886"/><stop offset="0.666" stop-color="#cc8967"/><stop offset="0.863" stop-color="#cc5527"/><stop offset="0.903" stop-color="#cc4d13"/><stop offset="0.923" stop-color="#cc4800"/><stop offset="1" stop-color="#cc4300"/></linearGradient>
<linearGradient id="o126"><stop offset="0" stop-color="#00ccc4"/><stop offset="0.223" stop-color="#00ccbe"/><stop offset="0.344" stop-color="#00ccb3"/><stop offset="0.351" stop-color="#24ccb2"/><stop offset="0.357" stop-color="#36ccb2"/><stop offset="0.367" stop-color="#4accb2"/><stop offset="0.384" stop-color="#61ccb1"/><stop offset="0.433" stop-color="#92ccaf"/><stop offset="0.511" stop-color="#ccccab"/><stop offset="0.593" stop-color="#cca081"/><stop offset="0.705" stop-color="#cc7a5a"/><stop offset="0.869" stop-color="#cc5126"/><stop offset="0.905" stop-color="#cc4914"/><stop offset="0.925" stop-color="#cc4501"/><stop offset="1" stop-color="#cc4000"/></linearGradient>
<linearGradient id="o127"><stop offset="0" stop-color="#00ccc5"/><stop offset="0.219" stop-color="#00ccbf"/><stop offset="0.339" stop-color="#00ccb5"/><stop offset="0.343" stop-color="#15ccb5"/><stop offset="0.346" stop-color="#24ccb4"/><stop offset="0.352" stop-color="#37ccb4"/><stop offset="0.362" stop-color="#4accb4"/><stop offset="0.378" stop-color="#61ccb3"/><stop offset="0.427" stop-color="#93ccb1"/><stop offset="0.502" stop-color="#cbccae"/><stop offset="0.587" stop-color="#cc9f83"/><stop offset="0.698" stop-color="#cc795c"/><stop offset="0.871" stop-color="#cc4e25"/><stop offset="0.907" stop-color="#cc4613"/><stop offset="0.927" stop-color="#cc4100"/><stop offset="1" stop-color="#cc3c00"/></linearGradient>
<linearGradient id="o128"><stop offset="0" stop-color="#00ccc5"/><stop offset="0.214" stop-color="#00ccc0"/><stop offset="0.334" stop-color="#00ccb7"/><stop offset="0.338" stop-color="#16ccb7"/><stop offset="0.341" stop-color="#25ccb7"/><stop offset="0.347" stop-color="#37ccb7"/><stop offset="0.357" stop-color="#4bccb6"/><stop offset="0.373" stop-color="#62ccb6"/><stop offset="0.422" stop-color="#94ccb4"/><stop offset="0.497" stop-color="#cccbb0"/><stop offset="0.578" stop-color="#cc9f86"/><stop offset="0.692" stop-color="#cc775e"/><stop offset="0.87" stop-color="#cc4b26"/><stop offset="0.909" stop-color="#cc4213"/><stop offset="0.929" stop-color="#cc3d00"/><stop offset="1" stop-color="#cc3900"/></linearGradient>
<linearGradient id="o129"><stop offset="0" stop-color="#00ccc6"/><stop offset="0.21" stop-color="#00ccc2"/><stop offset="0.329" stop-color="#00ccb9"/><stop offset="0.332" stop-color="#09ccb9"/><stop offset="0.335" stop-color="#1fccb9"/><stop offset="0.342" stop-color="#34ccb9"/><stop offset="0.355" stop-color="#4eccb9"/><stop offset="0.371" stop-color="#65ccb8"/><stop offset="0.419" stop-color="#96ccb7"/><stop offset="0.49" stop-color="#cccbb3"/><stop offset="0.571" stop-color="#cc9e88"/><stop offset="0.684" stop-color="#cc7660"/><stop offset="0.871" stop-color="#cc4726"/><stop offset="0.91" stop-color="#cc3e13"/><stop offset="0.929" stop-color="#cc3901"/><stop offset="1" stop-color="#cc3500"/></linearGradient>
<linearGradient id="o130"><stop offset="0" stop-color="#00ccc7"/><stop offset="0.209" stop-color="#00ccc3"/><stop offset="0.325" stop-color="#00ccbc"/><stop offset="0.328" stop-color="#0accbb"/><stop offset="0.331" stop-color="#1fccbb"/><stop offset="0.338" stop-color="#34ccbb"/><stop offset="0.347" stop-color="#49ccbb"/><stop offset="0.363" stop-color="#61ccbb"/><stop offset="0.412" stop-color="#94ccb9"/><stop offset="0.482" stop-color="#ccccb7"/><stop offset="0.563" stop-color="#cc9e8b"/><stop offset="0.672" stop-color="#cc7763"/><stop offset="0.871" stop-color="#cc4427"/><stop offset="0.91" stop-color="#cc3b15"/><stop offset="0.932" stop-color="#cc3500"/><stop offset="1" stop-color="#cc3100"/></linearGradient>
<linearGradient id="o131"><stop offset="0" stop-color="#00ccc7"/><stop offset="0.32" stop-color="#00ccbe"/><stop offset="0.323" stop-color="#0bccbe"/><stop offset="0.326" stop-color="#20ccbe"/><stop offset="0.333" stop-color="#35ccbe"/><stop offset="0.342" stop-color="#4accbd"/><stop offset="0.358" stop-color="#62ccbd"/><stop offset="0.403" stop-color="#92ccbc"/><stop offset="0.474" stop-color="#cbccba"/><stop offset="0.554" stop-color="#cc9e8e"/><stop offset="0.666" stop-color="#cc7665"/><stop offset="0.874" stop-color="#cc4026"/><stop offset="0.912" stop-color="#cc3615"/><stop offset="0.934" stop-color="#cc3000"/><stop offset="1" stop-color="#cc2d00"/></linearGradient>
<linearGradient id="o132"><stop offset="0" stop-color="#00ccc8"/><stop offset="0.318" stop-color="#00ccc0"/><stop offset="0.321" stop-color="#18ccc0"/><stop offset="0.328" stop-color="#31ccc0"/><stop offset="0.337" stop-color="#47ccc0"/><stop offset="0.353" stop-color="#61ccc0"/><stop offset="0.397" stop-color="#92ccbf"/><stop offset="0.467" stop-color="#ccccbd"/><stop offset="0.547" stop-color="#cc9e90"/><stop offset="0.655" stop-color="#cc7668"/><stop offset="0.871" stop-color="#cc3d28"/><stop offset="0.913" stop-color="#cc3215"/><stop offset="0.938" stop-color="#cc2b00"/><stop offset="1" stop-color="#cc2800"/></linearGradient>
<linearGradient id="o133"><stop offset="0" stop-color="#00ccc9"/><stop offset="0.313" stop-color="#00ccc3"/><stop offset="0.316" stop-color="#19ccc2"/><stop offset="0.323" stop-color="#32ccc2"/><stop offset="0.332" stop-color="#48ccc2"/><stop offset="0.348" stop-color="#61ccc2"/><stop offset="0.396" stop-color="#96ccc1"/><stop offset="0.462" stop-color="#cccbbf"/><stop offset="0.538" stop-color="#cc9e93"/><stop offset="0.646" stop-color="#cc756b"/><stop offset="0.873" stop-color="#cc3827"/><stop offset="0.915" stop-color="#cc2d15"/><stop offset="0.937" stop-color="#cc2601"/><stop offset="1" stop-color="#cc2300"/></linearGradient>
<linearGradient id="o134"><stop offset="0" stop-color="#00ccca"/><stop offset="0.309" stop-color="#00ccc5"/><stop offset="0.312" stop-color="#19ccc5"/><stop offset="0.319" stop-color="#32ccc5"/><stop offset="0.328" stop-color="#48ccc5"/><stop offset="0.344" stop-color="#62ccc5"/><stop offset="0.388" stop-color="#94ccc4"/><stop offset="0.454" stop-color="#ccccc3"/><stop offset="0.527" stop-color="#cc9f97"/><stop offset="0.631" stop-color="#cc776f"/><stop offset="0.874" stop-color="#cc3528"/><stop offset="0.918" stop-color="#cc2714"/><stop offset="0.94" stop-color="#cc1f00"/><stop offset="1" stop-color="#cc1d00"/></linearGradient>
<linearGradient id="o135"><stop offset="0" stop-color="#00ccca"/><stop offset="0.305" stop-color="#00ccc7"/><stop offset="0.308" stop-color="#1accc7"/><stop offset="0.314" stop-color="#33ccc7"/><stop offset="0.323" stop-color="#49ccc7"/><stop offset="0.339" stop-color="#63ccc7"/><stop offset="0.38" stop-color="#92ccc7"/><stop offset="0.446" stop-color="#cbccc6"/><stop offset="0.518" stop-color="#cc9f9a"/><stop offset="0.619" stop-color="#cc7873"/><stop offset="0.876" stop-color="#cc3027"/><stop offset="0.92" stop-color="#cc2114"/><stop offset="0.942" stop-color="#cc1700"/><stop offset="1" stop-color="#cc1500"/></linearGradient>
<linearGradient id="o136"><stop offset="0" stop-color="#00cccb"/><stop offset="0.3" stop-color="#00ccca"/><stop offset="0.306" stop-color="#22ccca"/><stop offset="0.312" stop-color="#38ccca"/><stop offset="0.321" stop-color="#4dccca"/><stop offset="0.334" stop-color="#61ccca"/><stop offset="0.374" stop-color="#91ccca"/><stop offset="0.44" stop-color="#ccccc9"/><stop offset="0.509" stop-color="#cca09e"/><stop offset="0.599" stop-color="#cc7b79"/><stop offset="0.874" stop-color="#cc2c28"/><stop offset="0.917" stop-color="#cc1b16"/><stop offset="0.942" stop-color="#cc0c01"/><stop offset="1" stop-color="#cc0a00"/></linearGradient>
<linearGradient id="o137"><stop offset="0" stop-color="#00cccc"/><stop offset="0.295" stop-color="#00cccc"/><stop offset="0.301" stop-color="#23cccc"/><stop offset="0.307" stop-color="#38cccc"/><stop offset="0.317" stop-color="#4dcccc"/><stop offset="0.329" stop-color="#62cccc"/><stop offset="0.373" stop-color="#95cccc"/><stop offset="0.435" stop-color="#cccbcb"/><stop offset="0.5" stop-color="#cca0a1"/><stop offset="0.593" stop-color="#cc7a7a"/><stop offset="0.87" stop-color="#cc282a"/><stop offset="0.913" stop-color="#cc1519"/><stop offset="0.938" stop-color="#cc0008"/><stop offset="1" stop-color="#cc0008"/></linearGradient>
<linearGradient id="o138"><stop offset="0" stop-color="#00cbcc"/><stop offset="0.291" stop-color="#00c9cc"/><stop offset="0.297" stop-color="#23c9cc"/><stop offset="0.303" stop-color="#38c9cc"/><stop offset="0.312" stop-color="#4dc9cc"/><stop offset="0.325" stop-color="#61c9cc"/><stop offset="0.365" stop-color="#91c9cc"/><stop offset="0.43" stop-color="#cbc8cc"/><stop offset="0.507" stop-color="#cc999c"/><stop offset="0.612" stop-color="#cc7073"/><stop offset="0.856" stop-color="#cc272e"/><stop offset="0.896" stop-color="#cc1521"/><stop offset="0.921" stop-color="#cc0015"/><stop offset="1" stop-color="#cc0014"/></linearGradient>
<linearGradient id="o139"><stop offset="0" stop-color="#00cacc"/><stop offset="0.287" stop-color="#00c7cc"/><stop offset="0.293" stop-color="#23c7cc"/><stop offset="0.299" stop-color="#38c7cc"/><stop offset="0.308" stop-color="#4cc7cc"/><stop offset="0.32" stop-color="#61c7cc"/><stop offset="0.364" stop-color="#93c6cc"/><stop offset="0.428" stop-color="#ccc5cc"/><stop offset="0.49" stop-color="#cc9da4"/><stop offset="0.57" stop-color="#cc7b81"/><stop offset="0.841" stop-color="#cc2834"/><stop offset="0.884" stop-color="#cc1426"/><stop offset="0.906" stop-color="#cc001e"/><stop offset="1" stop-color="#cc001b"/></linearGradient>
<linearGradient id="o140"><stop offset="0" stop-color="#00cacc"/><stop offset="0.282" stop-color="#00c5cc"/><stop offset="0.288" stop-color="#23c4cc"/><stop offset="0.294" stop-color="#37c4cc"/><stop offset="0.304" stop-color="#4cc4cc"/><stop offset="0.319" stop-color="#65c4cc"/><stop offset="0.365" stop-color="#98c3cc"/><stop offset="0.426" stop-color="#ccc1cb"/><stop offset="0.488" stop-color="#cc9aa4"/><stop offset="0.567" stop-color="#cc7882"/><stop offset="0.825" stop-color="#cc2838"/><stop offset="0.868" stop-color="#cc142c"/><stop offset="0.89" stop-color="#cc0024"/><stop offset="1" stop-color="#cc0021"/></linearGradient>
<linearGradient id="o141"><stop offset="0" stop-color="#00c9cc"/><stop offset="0.278" stop-color="#00c2cc"/><stop offset="0.284" stop-color="#23c2cc"/><stop offset="0.29" stop-color="#37c2cc"/><stop offset="0.299" stop-color="#4cc2cc"/><stop offset="0.315" stop-color="#64c1cc"/><stop offset="0.357" stop-color="#95c1cc"/><stop offset="0.421" stop-color="#ccbfcc"/><stop offset="0.482" stop-color="#cc99a5"/><stop offset="0.565" stop-color="#cc7682"/><stop offset="0.812" stop-color="#cc273c"/><stop offset="0.852" stop-color="#cc1531"/><stop offset="0.873" stop-color="#cc002a"/><stop offset="1" stop-color="#cc0025"/></linearGradient>
<linearGradient id="o142"><stop offset="0" stop-color="#00c8cc"/><stop offset="0.274" stop-color="#00c0cc"/><stop offset="0.28" stop-color="#23c0cc"/><stop offset="0.286" stop-color="#37bfcc"/><stop offset="0.295" stop-color="#4bbfcc"/><stop offset="0.311" stop-color="#63bfcc"/><stop offset="0.356" stop-color="#96becc"/><stop offset="0.42" stop-color="#ccbbcb"/><stop offset="0.481" stop-color="#cc96a5"/><stop offset="0.563" stop-color="#cc7382"/><stop offset="0.798" stop-color="#cc2840"/><stop offset="0.837" stop-color="#cc1535"/><stop offset="0.858" stop-color="#cc012f"/><stop offset="1" stop-color="#cc0029"/></linearGradient>
<linearGradient id="o143"><stop offset="0" stop-color="#00c7cc"/><stop offset="0.27" stop-color="#00bdcc"/><stop offset="0.276" stop-color="#23bdcc"/><stop offset="0.282" stop-color="#37bdcc"/><stop offset="0.291" stop-color="#4bbdcc"/><stop offset="0.306" stop-color="#63bccc"/><stop offset="0.348" stop-color="#93bbcc"/><stop offset="0.415" stop-color="#ccb9cc"/><stop offset="0.479" stop-color="#cc93a4"/><stop offset="0.561" stop-color="#cc7082"/><stop offset="0.782" stop-color="#cc2844"/><stop offset="0.821" stop-color="#cc163a"/><stop offset="0.845" stop-color="#cc0034"/><stop offset="1" stop-color="#cc002d"/></linearGradient>
<linearGradient id="o144"><stop offset="0" stop-color="#00c6cc"/><stop offset="0.265" stop-color="#00bbcc"/><stop offset="0.271" stop-color="#23bbcc"/><stop offset="0.278" stop-color="#37bbcc"/><stop offset="0.287" stop-color="#4abacc"/><stop offset="0.302" stop-color="#62bacc"/><stop offset="0.347" stop-color="#95b8cc"/><stop offset="0.413" stop-color="#ccb5cb"/><stop offset="0.474" stop-color="#cc91a6"/><stop offset="0.555" stop-color="#cc6f83"/><stop offset="0.769" stop-color="#cc2847"/><stop offset="0.805" stop-color="#cc163e"/><stop offset="0.83" stop-color="#cc0038"/><stop offset="1" stop-color="#cc0030"/></linearGradient>
<linearGradient id="o145"><stop offset="0" stop-color="#00c5cc"/><stop offset="0.165" stop-color="#00c1cc"/><stop offset="0.262" stop-color="#00b9cc"/><stop offset="0.268" stop-color="#23b9cc"/><stop offset="0.274" stop-color="#36b8cc"/><stop offset="0.283" stop-color="#4ab8cc"/><stop offset="0.298" stop-color="#62b8cc"/><stop offset="0.346" stop-color="#97b6cc"/><stop offset="0.412" stop-color="#ccb1ca"/><stop offset="0.472" stop-color="#cc8ea6"/><stop offset="0.553" stop-color="#cc6c84"/><stop offset="0.755" stop-color="#cc284b"/><stop offset="0.794" stop-color="#cc1441"/><stop offset="0.815" stop-color="#cc003c"/><stop offset="1" stop-color="#cc0033"/></linearGradient>
<linearGradient id="o146"><stop offset="0" stop-color="#00c5cc"/><stop offset="0.162" stop-color="#00bfcc"/><stop offset="0.257" stop-color="#00b7cc"/><stop offset="0.263" stop-color="#23b6cc"/><stop offset="0.269" stop-color="#36b6cc"/><stop offset="0.278" stop-color="#4ab6cc"/><stop offset="0.293" stop-color="#61b5cc"/><stop offset="0.338" stop-color="#93b3cc"/><stop offset="0.407" stop-color="#ccb0cc"/><stop offset="0.467" stop-color="#cc8ca7"/><stop offset="0.545" stop-color="#cc6b86"/><stop offset="0.743" stop-color="#cc284e"/><stop offset="0.778" stop-color="#cc1545"/><stop offset="0.799" stop-color="#cc0040"/><stop offset="1" stop-color="#cc0035"/></linearGradient>
<linearGradient id="o147"><stop offset="0" stop-color="#00c4cc"/><stop offset="0.158" stop-color="#00becc"/><stop offset="0.253" stop-color="#00b4cc"/><stop offset="0.259" stop-color="#23b4cc"/><stop offset="0.265" stop-color="#36b4cc"/><stop offset="0.277" stop-color="#4fb3cc"/><stop offset="0.292" stop-color="#65b3cc"/><stop offset="0.34" stop-color="#98b0cc"/><stop offset="0.405" stop-color="#ccaccb"/><stop offset="0.465" stop-color="#cc89a7"/><stop offset="0.539" stop-color="#cc6a87"/><stop offset="0.727" stop-color="#cc2852"/><stop offset="0.763" stop-color="#cc1549"/><stop offset="0.784" stop-color="#cc0044"/><stop offset="1" stop-color="#cc0038"/></linearGradient>
<linearGradient id="o148"><stop offset="0" stop-color="#00c3cc"/><stop offset="0.157" stop-color="#00bdcc"/><stop offset="0.249" stop-color="#00b2cc"/><stop offset="0.255" stop-color="#23b2cc"/><stop offset="0.261" stop-color="#36b1cc"/><stop offset="0.27" stop-color="#49b1cc"/><stop offset="0.285" stop-color="#60b0cc"/><stop offset="0.329" stop-color="#91aecc"/><stop offset="0.401" stop-color="#ccaacc"/><stop offset="0.46" stop-color="#cc87a8"/><stop offset="0.534" stop-color="#cc6888"/><stop offset="0.715" stop-color="#cc2754"/><stop offset="0.751" stop-color="#cc144c"/><stop offset="0.769" stop-color="#cc0047"/><stop offset="1" stop-color="#cc003a"/></linearGradient>
<linearGradient id="o149"><stop offset="0" stop-color="#00c2cc"/><stop offset="0.154" stop-color="#00bbcc"/><stop offset="0.245" stop-color="#00b0cc"/><stop offset="0.251" stop-color="#23afcc"/><stop offset="0.257" stop-color="#36afcc"/><stop offset="0.269" stop-color="#4eafcc"/><stop offset="0.284" stop-color="#64aecc"/><stop offset="0.331" stop-color="#96abcc"/><stop offset="0.399" stop-color="#cca6cb"/><stop offset="0.455" stop-color="#cc86a9"/><stop offset="0.529" stop-color="#cc668a"/><stop offset="0.703" stop-color="#cc2657"/><stop offset="0.736" stop-color="#cc144f"/><stop offset="0.753" stop-color="#cc004b"/><stop offset="1" stop-color="#cc003c"/></linearGradient>
<linearGradient id="o150"><stop offset="0" stop-color="#00c1cc"/><stop offset="0.15" stop-color="#00bacc"/><stop offset="0.242" stop-color="#00aecc"/><stop offset="0.247" stop-color="#23adcc"/><stop offset="0.253" stop-color="#36adcc"/><stop offset="0.265" stop-color="#4eaccc"/><stop offset="0.28" stop-color="#63accc"/><stop offset="0.33" stop-color="#98a9cc"/><stop offset="0.398" stop-color="#cca2ca"/><stop offset="0.454" stop-color="#cc82a9"/><stop offset="0.524" stop-color="#cc648b"/><stop offset="0.689" stop-color="#cc275b"/><stop offset="0.722" stop-color="#cc1453"/><stop offset="0.739" stop-color="#cc004f"/><stop offset="1" stop-color="#cc003e"/></linearGradient>
<linearGradient id="o151"><stop offset="0" stop-color="#00c0cc"/><stop offset="0.148" stop-color="#00b8cc"/><stop offset="0.236" stop-color="#00accc"/><stop offset="0.239" stop-color="#06abcc"/><stop offset="0.242" stop-color="#1cabcc"/><stop offset="0.245" stop-color="#28abcc"/><stop offset="0.251" stop-color="#39abcc"/><stop offset="0.263" stop-color="#50aacc"/><stop offset="0.278" stop-color="#65a9cc"/><stop offset="0.328" stop-color="#98a6cc"/><stop offset="0.396" stop-color="#cc9fcb"/><stop offset="0.452" stop-color="#cc80a9"/><stop offset="0.523" stop-color="#cc628b"/><stop offset="0.679" stop-color="#cc275e"/><stop offset="0.712" stop-color="#cc1456"/><stop offset="0.73" stop-color="#cc0052"/><stop offset="1" stop-color="#cc0040"/></linearGradient>
<linearGradient id="o152"><stop offset="0" stop-color="#00bfcc"/><stop offset="0.146" stop-color="#00b7cc"/><stop offset="0.236" stop-color="#00aacc"/><stop offset="0.239" stop-color="#07a9cc"/><stop offset="0.242" stop-color="#1da9cc"/><stop offset="0.245" stop-color="#28a9cc"/><stop offset="0.251" stop-color="#39a8cc"/><stop offset="0.263" stop-color="#4fa8cc"/><stop offset="0.278" stop-color="#64a7cc"/><stop offset="0.325" stop-color="#95a4cc"/><stop offset="0.397" stop-color="#cc9ecc"/><stop offset="0.454" stop-color="#cc7eaa"/><stop offset="0.522" stop-color="#cc618e"/><stop offset="0.678" stop-color="#cc2660"/><stop offset="0.707" stop-color="#cc1459"/><stop offset="0.725" stop-color="#cc0055"/><stop offset="1" stop-color="#cc0042"/></linearGradient>
<linearGradient id="o153"><stop offset="0" stop-color="#00becc"/><stop offset="0.145" stop-color="#00b6cc"/><stop offset="0.236" stop-color="#00a8cc"/><stop offset="0.239" stop-color="#07a7cc"/><stop offset="0.242" stop-color="#1da7cc"/><stop offset="0.245" stop-color="#28a6cc"/><stop offset="0.251" stop-color="#39a6cc"/><stop offset="0.263" stop-color="#4fa5cc"/><stop offset="0.278" stop-color="#64a4cc"/><stop offset="0.33" stop-color="#96a1cc"/><stop offset="0.402" stop-color="#cc9acb"/><stop offset="0.457" stop-color="#cc7cac"/><stop offset="0.526" stop-color="#cc5f8f"/><stop offset="0.675" stop-color="#cc2764"/><stop offset="0.705" stop-color="#cc155d"/><stop offset="0.723" stop-color="#cc0058"/><stop offset="1" stop-color="#cc0045"/></linearGradient>
<linearGradient id="o154"><stop offset="0" stop-color="#00bdcc"/><stop offset="0.147" stop-color="#00b4cc"/><stop offset="0.236" stop-color="#00a5cc"/><stop offset="0.239" stop-color="#08a5cc"/><stop offset="0.242" stop-color="#1da4cc"/><stop offset="0.245" stop-color="#28a4cc"/><stop offset="0.252" stop-color="#38a4cc"/><stop offset="0.264" stop-color="#4fa3cc"/><stop offset="0.279" stop-color="#63a2cc"/><stop offset="0.328" stop-color="#939fcc"/><stop offset="0.405" stop-color="#cc98cc"/><stop offset="0.454" stop-color="#cc7db0"/><stop offset="0.512" stop-color="#cc6497"/><stop offset="0.672" stop-color="#cc2767"/><stop offset="0.702" stop-color="#cc1560"/><stop offset="0.721" stop-color="#cc005c"/><stop offset="1" stop-color="#cc0047"/></linearGradient>
<linearGradient id="o155"><stop offset="0" stop-color="#00bccc"/><stop offset="0.146" stop-color="#00b3cc"/><stop offset="0.236" stop-color="#00a3cc"/><stop offset="0.24" stop-color="#08a3cc"/><stop offset="0.243" stop-color="#1da2cc"/><stop offset="0.246" stop-color="#28a2cc"/><stop offset="0.252" stop-color="#38a2cc"/><stop offset="0.264" stop-color="#4ea1cc"/><stop offset="0.28" stop-color="#63a0cc"/><stop offset="0.333" stop-color="#959ccc"/><stop offset="0.411" stop-color="#cc94cb"/><stop offset="0.457" stop-color="#cc7bb1"/><stop offset="0.516" stop-color="#cc6298"/><stop offset="0.669" stop-color="#cc286b"/><stop offset="0.7" stop-color="#cc1663"/><stop offset="0.719" stop-color="#cc005f"/><stop offset="1" stop-color="#cc0049"/></linearGradient>
<linearGradient id="o156"><stop offset="0" stop-color="#00bbcc"/><stop offset="0.145" stop-color="#00b1cc"/><stop offset="0.237" stop-color="#00a1cc"/><stop offset="0.24" stop-color="#09a0cc"/><stop offset="0.243" stop-color="#1da0cc"/><stop offset="0.246" stop-color="#28a0cc"/><stop offset="0.252" stop-color="#38a0cc"/><stop offset="0.265" stop-color="#4e9fcc"/><stop offset="0.281" stop-color="#629ecc"/><stop offset="0.331" stop-color="#929acc"/><stop offset="0.413" stop-color="#cb92cc"/><stop offset="0.464" stop-color="#cc78b1"/><stop offset="0.517" stop-color="#cc619a"/><stop offset="0.666" stop-color="#cc286e"/><stop offset="0.697" stop-color="#cc1667"/><stop offset="0.719" stop-color="#cc0062"/><stop offset="1" stop-color="#cc004c"/></linearGradient>
<linearGradient id="o157"><stop offset="0" stop-color="#00bacc"/><stop offset="0.147" stop-color="#00b0cc"/><stop offset="0.237" stop-color="#009fcc"/><stop offset="0.24" stop-color="#0a9ecc"/><stop offset="0.243" stop-color="#1d9ecc"/><stop offset="0.253" stop-color="#389dcc"/><stop offset="0.266" stop-color="#4e9ccc"/><stop offset="0.282" stop-color="#629bcc"/><stop offset="0.336" stop-color="#9397cc"/><stop offset="0.419" stop-color="#cc8ecc"/><stop offset="0.467" stop-color="#cc76b2"/><stop offset="0.522" stop-color="#cc5f9b"/><stop offset="0.666" stop-color="#cc2771"/><stop offset="0.698" stop-color="#cc1469"/><stop offset="0.717" stop-color="#cc0065"/><stop offset="1" stop-color="#cc004e"/></linearGradient>
<linearGradient id="o158"><stop offset="0" stop-color="#00b9cc"/><stop offset="0.146" stop-color="#00aecc"/><stop offset="0.237" stop-color="#009dcc"/><stop offset="0.24" stop-color="#0a9ccc"/><stop offset="0.244" stop-color="#1d9ccc"/><stop offset="0.253" stop-color="#389bcc"/><stop offset="0.266" stop-color="#4d9acc"/><stop offset="0.286" stop-color="#6599cc"/><stop offset="0.344" stop-color="#9794cc"/><stop offset="0.425" stop-color="#cc8acb"/><stop offset="0.523" stop-color="#cc5e9d"/><stop offset="0.662" stop-color="#cc2874"/><stop offset="0.695" stop-color="#cc156d"/><stop offset="0.714" stop-color="#cc0068"/><stop offset="1" stop-color="#cc0050"/></linearGradient>
<linearGradient id="o159"><stop offset="0" stop-color="#00b8cc"/><stop offset="0.145" stop-color="#00adcc"/><stop offset="0.237" stop-color="#009bcc"/><stop offset="0.241" stop-color="#0b9acc"/><stop offset="0.244" stop-color="#1d9acc"/><stop offset="0.254" stop-color="#3799cc"/><stop offset="0.267" stop-color="#4d98cc"/><stop offset="0.283" stop-color="#6197cc"/><stop offset="0.339" stop-color="#9292cc"/><stop offset="0.428" stop-color="#cc88cc"/><stop offset="0.524" stop-color="#cc5da0"/><stop offset="0.659" stop-color="#cc2978"/><stop offset="0.692" stop-color="#cc1570"/><stop offset="0.712" stop-color="#cc006c"/><stop offset="1" stop-color="#cc0053"/></linearGradient>
<linearGradient id="o160"><stop offset="0" stop-color="#00b7cc"/><stop offset="0.147" stop-color="#00abcc"/><stop offset="0.237" stop-color="#0099cc"/><stop offset="0.241" stop-color="#0b98cc"/><stop offset="0.244" stop-color="#1d98cc"/><stop offset="0.254" stop-color="#3797cc"/><stop offset="0.268" stop-color="#4d96cc"/><stop offset="0.288" stop-color="#6494cc"/><stop offset="0.348" stop-color="#968fcc"/><stop offset="0.435" stop-color="#cc84cb"/><stop offset="0.528" stop-color="#cc5ba1"/><stop offset="0.659" stop-color="#cc287a"/><stop offset="0.689" stop-color="#cc1673"/><stop offset="0.709" stop-color="#cc006f"/><stop offset="1" stop-color="#cc0055"/></linearGradient>
<linearGradient id="o161"><stop offset="0" stop-color="#00b6cc"/><stop offset="0.146" stop-color="#00aacc"/><stop offset="0.238" stop-color="#0097cc"/><stop offset="0.241" stop-color="#0c96cc"/><stop offset="0.244" stop-color="#1d95cc"/><stop offset="0.255" stop-color="#3795cc"/><stop offset="0.268" stop-color="#4c94cc"/><stop offset="0.289" stop-color="#6492cc"/><stop offset="0.346" stop-color="#938dcc"/><stop offset="0.438" stop-color="#cc82cc"/><stop offset="0.533" stop-color="#cc59a2"/><stop offset="0.655" stop-color="#cc287e"/><stop offset="0.686" stop-color="#cc1777"/><stop offset="0.706" stop-color="#cc0072"/><stop offset="1" stop-color="#cc0057"/></linearGradient>
<linearGradient id="o162"><stop offset="0" stop-color="#00b5cc"/><stop offset="0.145" stop-color="#00a8cc"/><stop offset="0.238" stop-color="#0094cc"/><stop offset="0.242" stop-color="#1693cc"/><stop offset="0.252" stop-color="#3493cc"/><stop offset="0.266" stop-color="#4a92cc"/><stop offset="0.287" stop-color="#6290cc"/><stop offset="0.349" stop-color="#938acc"/><stop offset="0.442" stop-color="#cb7fcc"/><stop offset="0.535" stop-color="#cc57a3"/><stop offset="0.653" stop-color="#cc2881"/><stop offset="0.684" stop-color="#cc167a"/><stop offset="0.705" stop-color="#cc0075"/><stop offset="1" stop-color="#cc0059"/></linearGradient>
<linearGradient id="o163"><stop offset="0" stop-color="#00b4cc"/><stop offset="0.147" stop-color="#00a6cc"/><stop offset="0.239" stop-color="#0092cc"/><stop offset="0.242" stop-color="#1691cc"/><stop offset="0.253" stop-color="#3491cc"/><stop offset="0.267" stop-color="#4a8fcc"/><stop offset="0.288" stop-color="#618ecc"/><stop offset="0.351" stop-color="#9288cc"/><stop offset="0.449" stop-color="#cc7bcc"/><stop offset="0.537" stop-color="#cc56a6"/><stop offset="0.649" stop-color="#cc2985"/><stop offset="0.681" stop-color="#cc167d"/><stop offset="0.702" stop-color="#cc0079"/><stop offset="0.832" stop-color="#cc0069"/><stop offset="1" stop-color="#cc005c"/></linearGradient>
<linearGradient id="o164"><stop offset="0" stop-color="#00b3cc"/><stop offset="0.146" stop-color="#00a5cc"/><stop offset="0.239" stop-color="#0090cc"/><stop offset="0.242" stop-color="#178fcc"/><stop offset="0.253" stop-color="#338ecc"/><stop offset="0.267" stop-color="#498dcc"/><stop offset="0.289" stop-color="#618bcc"/><stop offset="0.357" stop-color="#9485cc"/><stop offset="0.456" stop-color="#cc77cb"/><stop offset="0.538" stop-color="#cc55a8"/><stop offset="0.649" stop-color="#cc2888"/><stop offset="0.681" stop-color="#cc1480"/><stop offset="0.699" stop-color="#cc007c"/><stop offset="0.831" stop-color="#cc006c"/><stop offset="1" stop-color="#cc005e"/></linearGradient>
<linearGradient id="o165"><stop offset="0" stop-color="#00b2cc"/><stop offset="0.145" stop-color="#00a4cc"/><stop offset="0.239" stop-color="#008ecc"/><stop offset="0.243" stop-color="#178dcc"/><stop offset="0.254" stop-color="#338ccc"/><stop offset="0.268" stop-color="#498bcc"/><stop offset="0.29" stop-color="#6089cc"/><stop offset="0.355" stop-color="#9183cc"/><stop offset="0.46" stop-color="#cc75cc"/><stop offset="0.543" stop-color="#cc52a9"/><stop offset="0.645" stop-color="#cc298b"/><stop offset="0.678" stop-color="#cc1583"/><stop offset="0.696" stop-color="#cc007f"/><stop offset="0.83" stop-color="#cc006e"/><stop offset="1" stop-color="#cc0060"/></linearGradient>
<linearGradient id="o166"><stop offset="0" stop-color="#00b1cc"/><stop offset="0.147" stop-color="#00a2cc"/><stop offset="0.239" stop-color="#008bcc"/><stop offset="0.243" stop-color="#178bcc"/><stop offset="0.254" stop-color="#338acc"/><stop offset="0.273" stop-color="#4d89cc"/><stop offset="0.295" stop-color="#6387cc"/><stop offset="0.365" stop-color="#957fcc"/><stop offset="0.468" stop-color="#cc71cb"/><stop offset="0.545" stop-color="#cc51ab"/><stop offset="0.645" stop-color="#cc288e"/><stop offset="0.674" stop-color="#cc1687"/><stop offset="0.692" stop-color="#cc0083"/><stop offset="0.829" stop-color="#cc0071"/><stop offset="1" stop-color="#cc0063"/></linearGradient>
<linearGradient id="o167"><stop offset="0" stop-color="#00afcc"/><stop offset="0.146" stop-color="#00a0cc"/><stop offset="0.24" stop-color="#0089cc"/><stop offset="0.243" stop-color="#1789cc"/><stop offset="0.255" stop-color="#3388cc"/><stop offset="0.273" stop-color="#4d86cc"/><stop offset="0.296" stop-color="#6384cc"/><stop offset="0.363" stop-color="#927dcc"/><stop offset="0.472" stop-color="#cc6ecc"/><stop offset="0.551" stop-color="#cc4eac"/><stop offset="0.64" stop-color="#cc2892"/><stop offset="0.67" stop-color="#cc168a"/><stop offset="0.689" stop-color="#cc0086"/><stop offset="0.824" stop-color="#cc0074"/><stop offset="1" stop-color="#cc0065"/></linearGradient>
<linearGradient id="o168"><stop offset="0" stop-color="#00aecc"/><stop offset="0.145" stop-color="#009fcc"/><stop offset="0.24" stop-color="#0087cc"/><stop offset="0.244" stop-color="#1787cc"/><stop offset="0.256" stop-color="#3386cc"/><stop offset="0.275" stop-color="#4d84cc"/><stop offset="0.298" stop-color="#6282cc"/><stop offset="0.37" stop-color="#937acc"/><stop offset="0.481" stop-color="#cc6acc"/><stop offset="0.553" stop-color="#cc4caf"/><stop offset="0.641" stop-color="#cc2795"/><stop offset="0.672" stop-color="#cc148d"/><stop offset="0.687" stop-color="#cc008a"/><stop offset="0.824" stop-color="#cc0077"/><stop offset="1" stop-color="#cc0067"/></linearGradient>
<linearGradient id="o169"><stop offset="0" stop-color="#00adcc"/><stop offset="0.148" stop-color="#009dcc"/><stop offset="0.241" stop-color="#0085cc"/><stop offset="0.245" stop-color="#1785cc"/><stop offset="0.256" stop-color="#3384cc"/><stop offset="0.276" stop-color="#4c82cc"/><stop offset="0.299" stop-color="#6280cc"/><stop offset="0.377" stop-color="#9577cc"/><stop offset="0.489" stop-color="#cc65cb"/><stop offset="0.559" stop-color="#cc49b0"/><stop offset="0.641" stop-color="#cc2698"/><stop offset="0.668" stop-color="#cc1491"/><stop offset="0.683" stop-color="#cc008d"/><stop offset="0.823" stop-color="#cc0079"/><stop offset="1" stop-color="#cc006a"/></linearGradient>
<linearGradient id="o170"><stop offset="0" stop-color="#00accc"/><stop offset="0.146" stop-color="#009ccc"/><stop offset="0.241" stop-color="#0083cc"/><stop offset="0.245" stop-color="#1783cc"/><stop offset="0.257" stop-color="#3382cc"/><stop offset="0.277" stop-color="#4c80cc"/><stop offset="0.3" stop-color="#627ecc"/><stop offset="0.375" stop-color="#9275cc"/><stop offset="0.494" stop-color="#cc63cc"/><stop offset="0.557" stop-color="#cc49b3"/><stop offset="0.636" stop-color="#cc279c"/><stop offset="0.664" stop-color="#cc1595"/><stop offset="0.68" stop-color="#cc0191"/><stop offset="0.684" stop-color="#cc0090"/><stop offset="0.822" stop-color="#cc007c"/><stop offset="1" stop-color="#cc006c"/></linearGradient>
<linearGradient id="o171"><stop offset="0" stop-color="#00abcc"/><stop offset="0.145" stop-color="#009acc"/><stop offset="0.241" stop-color="#0181cc"/><stop offset="0.245" stop-color="#1881cc"/><stop offset="0.258" stop-color="#327fcc"/><stop offset="0.278" stop-color="#4c7ecc"/><stop offset="0.302" stop-color="#617bcc"/><stop offset="0.382" stop-color="#9472cc"/><stop offset="0.503" stop-color="#cc5ecb"/><stop offset="0.632" stop-color="#cc28a0"/><stop offset="0.66" stop-color="#cc1699"/><stop offset="0.68" stop-color="#cc0094"/><stop offset="0.821" stop-color="#cc007f"/><stop offset="1" stop-color="#cc006e"/></linearGradient>
<linearGradient id="o172"><stop offset="0" stop-color="#00a9cc"/><stop offset="0.143" stop-color="#0099cc"/><stop offset="0.238" stop-color="#0080cc"/><stop offset="0.242" stop-color="#027fcc"/><stop offset="0.246" stop-color="#187ecc"/><stop offset="0.25" stop-color="#237ecc"/><stop offset="0.262" stop-color="#387dcc"/><stop offset="0.283" stop-color="#4f7bcc"/><stop offset="0.307" stop-color="#6479cc"/><stop offset="0.385" stop-color="#936fcc"/><stop offset="0.508" stop-color="#cc5bcc"/><stop offset="0.631" stop-color="#cc26a3"/><stop offset="0.656" stop-color="#cc179d"/><stop offset="0.676" stop-color="#cc0098"/><stop offset="0.816" stop-color="#cc0082"/><stop offset="1" stop-color="#cc0071"/></linearGradient>
<linearGradient id="o173"><stop offset="0" stop-color="#00a8cc"/><stop offset="0.142" stop-color="#0097cc"/><stop offset="0.238" stop-color="#007ecc"/><stop offset="0.242" stop-color="#027dcc"/><stop offset="0.246" stop-color="#187ccc"/><stop offset="0.251" stop-color="#237ccc"/><stop offset="0.263" stop-color="#387bcc"/><stop offset="0.284" stop-color="#4f79cc"/><stop offset="0.309" stop-color="#6476cc"/><stop offset="0.392" stop-color="#946ccc"/><stop offset="0.518" stop-color="#cc56cc"/><stop offset="0.63" stop-color="#cc25a6"/><stop offset="0.656" stop-color="#cc14a0"/><stop offset="0.672" stop-color="#cc009c"/><stop offset="0.814" stop-color="#cc0085"/><stop offset="1" stop-color="#cc0073"/></linearGradient>
<linearGradient id="o174"><stop offset="0" stop-color="#00a7cc"/><stop offset="0.145" stop-color="#0095cc"/><stop offset="0.238" stop-color="#007ccc"/><stop offset="0.243" stop-color="#037bcc"/><stop offset="0.247" stop-color="#187acc"/><stop offset="0.251" stop-color="#237acc"/><stop offset="0.264" stop-color="#3879cc"/><stop offset="0.285" stop-color="#4f77cc"/><stop offset="0.311" stop-color="#6374cc"/><stop offset="0.396" stop-color="#946acc"/><stop offset="0.523" stop-color="#cb53cc"/><stop offset="0.63" stop-color="#cc23a9"/><stop offset="0.651" stop-color="#cc15a4"/><stop offset="0.668" stop-color="#cc00a0"/><stop offset="0.813" stop-color="#cc0088"/><stop offset="1" stop-color="#cc0075"/></linearGradient>
<linearGradient id="o175"><stop offset="0" stop-color="#00a5cc"/><stop offset="0.143" stop-color="#0093cc"/><stop offset="0.239" stop-color="#0079cc"/><stop offset="0.248" stop-color="#1e78cc"/><stop offset="0.261" stop-color="#3577cc"/><stop offset="0.283" stop-color="#4d74cc"/><stop offset="0.309" stop-color="#6172cc"/><stop offset="0.396" stop-color="#9267cc"/><stop offset="0.53" stop-color="#cb4ecc"/><stop offset="0.626" stop-color="#cc23ad"/><stop offset="0.648" stop-color="#cc13a8"/><stop offset="0.661" stop-color="#cc02a4"/><stop offset="0.665" stop-color="#cc00a3"/><stop offset="0.809" stop-color="#cc008b"/><stop offset="1" stop-color="#cc0078"/></linearGradient>
<linearGradient id="o176"><stop offset="0" stop-color="#00a4cc"/><stop offset="0.146" stop-color="#0091cc"/><stop offset="0.239" stop-color="#0077cc"/><stop offset="0.248" stop-color="#1e76cc"/><stop offset="0.262" stop-color="#3574cc"/><stop offset="0.284" stop-color="#4c72cc"/><stop offset="0.31" stop-color="#616fcc"/><stop offset="0.399" stop-color="#9264cc"/><stop offset="0.541" stop-color="#cc49cc"/><stop offset="0.625" stop-color="#cc21b1"/><stop offset="0.643" stop-color="#cc14ac"/><stop offset="0.661" stop-color="#cc00a7"/><stop offset="0.807" stop-color="#cc008e"/><stop offset="1" stop-color="#cc007a"/></linearGradient>
<linearGradient id="o177"><stop offset="0" stop-color="#00a3cc"/><stop offset="0.145" stop-color="#0090cc"/><stop offset="0.24" stop-color="#0075cc"/><stop offset="0.249" stop-color="#1e73cc"/><stop offset="0.262" stop-color="#3572cc"/><stop offset="0.285" stop-color="#4c70cc"/><stop offset="0.317" stop-color="#636dcc"/><stop offset="0.412" stop-color="#9560cc"/><stop offset="0.552" stop-color="#cc43cb"/><stop offset="0.624" stop-color="#cc1fb4"/><stop offset="0.643" stop-color="#cc11af"/><stop offset="0.656" stop-color="#cc00ac"/><stop offset="0.805" stop-color="#cc0091"/><stop offset="1" stop-color="#cc007d"/></linearGradient>
<linearGradient id="o178"><stop offset="0" stop-color="#00a1cc"/><stop offset="0.143" stop-color="#008ecc"/><stop offset="0.24" stop-color="#0073cc"/><stop offset="0.249" stop-color="#1e71cc"/><stop offset="0.263" stop-color="#3570cc"/><stop offset="0.286" stop-color="#4c6ecc"/><stop offset="0.319" stop-color="#636acc"/><stop offset="0.411" stop-color="#925ecc"/><stop offset="0.559" stop-color="#cc3fcc"/><stop offset="0.624" stop-color="#cc1db8"/><stop offset="0.651" stop-color="#cc00b0"/><stop offset="0.799" stop-color="#cc0095"/><stop offset="1" stop-color="#cc007f"/></linearGradient>
<linearGradient id="o179"><stop offset="0" stop-color="#00a0cc"/><stop offset="0.146" stop-color="#008ccc"/><stop offset="0.241" stop-color="#0071cc"/><stop offset="0.25" stop-color="#1e6fcc"/><stop offset="0.264" stop-color="#356ecc"/><stop offset="0.288" stop-color="#4c6bcc"/><stop offset="0.321" stop-color="#6368cc"/><stop offset="0.42" stop-color="#945acc"/><stop offset="0.505" stop-color="#b54acc"/><stop offset="0.571" stop-color="#cc38cc"/><stop offset="0.623" stop-color="#cc1bbb"/><stop offset="0.646" stop-color="#cc00b5"/><stop offset="0.797" stop-color="#cc0098"/><stop offset="1" stop-color="#cc0082"/></linearGradient>
<linearGradient id="o180"><stop offset="0" stop-color="#009ecc"/><stop offset="0.145" stop-color="#008bcc"/><stop offset="0.241" stop-color="#006ecc"/><stop offset="0.251" stop-color="#1e6dcc"/><stop offset="0.265" stop-color="#346bcc"/><stop offset="0.289" stop-color="#4b69cc"/><stop offset="0.323" stop-color="#6265cc"/><stop offset="0.386" stop-color="#835dcc"/><stop offset="0.477" stop-color="#a84ecc"/><stop offset="0.578" stop-color="#cb32cc"/><stop offset="0.622" stop-color="#cc18bf"/><stop offset="0.641" stop-color="#cc00ba"/><stop offset="0.795" stop-color="#cc009c"/><stop offset="1" stop-color="#cc0084"/></linearGradient>
<linearGradient id="o181"><stop offset="0" stop-color="#009dcc"/><stop offset="0.143" stop-color="#0089cc"/><stop offset="0.241" stop-color="#006ccc"/><stop offset="0.251" stop-color="#1e6bcc"/><stop offset="0.266" stop-color="#3469cc"/><stop offset="0.291" stop-color="#4b67cc"/><stop offset="0.325" stop-color="#6263cc"/><stop offset="0.394" stop-color="#845acc"/><stop offset="0.488" stop-color="#a949cc"/><stop offset="0.547" stop-color="#bd3acc"/><stop offset="0.591" stop-color="#cc29cc"/><stop offset="0.621" stop-color="#cc14c3"/><stop offset="0.635" stop-color="#cc00bf"/><stop offset="0.788" stop-color="#cc00a0"/><stop offset="1" stop-color="#cc0087"/></linearGradient>
<linearGradient id="o182"><stop offset="0" stop-color="#009bcc"/><stop offset="0.141" stop-color="#0087cc"/><stop offset="0.237" stop-color="#006bcc"/><stop offset="0.242" stop-color="#0769cc"/><stop offset="0.247" stop-color="#1969cc"/><stop offset="0.253" stop-color="#2368cc"/><stop offset="0.268" stop-color="#3767cc"/><stop offset="0.293" stop-color="#4d64cc"/><stop offset="0.328" stop-color="#6360cc"/><stop offset="0.399" stop-color="#8556cc"/><stop offset="0.5" stop-color="#ab44cc"/><stop offset="0.561" stop-color="#bf32cc"/><stop offset="0.601" stop-color="#cc20cc"/><stop offset="0.616" stop-color="#cc13c7"/><stop offset="0.631" stop-color="#cc00c3"/><stop offset="0.788" stop-color="#cc00a3"/><stop offset="1" stop-color="#cc008a"/></linearGradient>
<linearGradient id="o183"><stop offset="0" stop-color="#009acc"/><stop offset="0.145" stop-color="#0085cc"/><stop offset="0.238" stop-color="#0069cc"/><stop offset="0.243" stop-color="#0867cc"/><stop offset="0.248" stop-color="#1966cc"/><stop offset="0.253" stop-color="#2366cc"/><stop offset="0.269" stop-color="#3764cc"/><stop offset="0.295" stop-color="#4d61cc"/><stop offset="0.331" stop-color="#635dcc"/><stop offset="0.413" stop-color="#8852cc"/><stop offset="0.527" stop-color="#b13acc"/><stop offset="0.584" stop-color="#c325cc"/><stop offset="0.615" stop-color="#cc0ecb"/><stop offset="0.625" stop-color="#cc00c8"/><stop offset="0.786" stop-color="#cc00a6"/><stop offset="1" stop-color="#cc008c"/></linearGradient>
<linearGradient id="o184"><stop offset="0" stop-color="#0098cc"/><stop offset="0.143" stop-color="#0083cc"/><stop offset="0.238" stop-color="#0066cc"/><stop offset="0.243" stop-color="#0865cc"/><stop offset="0.249" stop-color="#1964cc"/><stop offset="0.254" stop-color="#2364cc"/><stop offset="0.27" stop-color="#3762cc"/><stop offset="0.296" stop-color="#4c5fcc"/><stop offset="0.333" stop-color="#625bcc"/><stop offset="0.418" stop-color="#884fcc"/><stop offset="0.534" stop-color="#b035cc"/><stop offset="0.587" stop-color="#c01fcc"/><stop offset="0.603" stop-color="#c514cc"/><stop offset="0.619" stop-color="#ca00cc"/><stop offset="0.624" stop-color="#cc00cc"/><stop offset="0.783" stop-color="#cc00aa"/><stop offset="1" stop-color="#cc008f"/></linearGradient>
<linearGradient id="o185"><stop offset="0" stop-color="#0096cc"/><stop offset="0.141" stop-color="#0082cc"/><stop offset="0.238" stop-color="#0064cc"/><stop offset="0.244" stop-color="#0962cc"/><stop offset="0.249" stop-color="#1962cc"/><stop offset="0.255" stop-color="#2361cc"/><stop offset="0.271" stop-color="#375fcc"/><stop offset="0.298" stop-color="#4c5dcc"/><stop offset="0.336" stop-color="#6258cc"/><stop offset="0.417" stop-color="#854ccc"/><stop offset="0.526" stop-color="#aa35cc"/><stop offset="0.585" stop-color="#bc1ccc"/><stop offset="0.602" stop-color="#c10fcc"/><stop offset="0.612" stop-color="#c400cc"/><stop offset="0.64" stop-color="#cc00cc"/><stop offset="0.791" stop-color="#cc00ac"/><stop offset="1" stop-color="#cc0092"/></linearGradient>
<linearGradient id="o186"><stop offset="0" stop-color="#0095cc"/><stop offset="0.144" stop-color="#007fcc"/><stop offset="0.239" stop-color="#0062cc"/><stop offset="0.256" stop-color="#235fcc"/><stop offset="0.272" stop-color="#365dcc"/><stop offset="0.3" stop-color="#4c5acc"/><stop offset="0.339" stop-color="#6255cc"/><stop offset="0.411" stop-color="#814bcc"/><stop offset="0.511" stop-color="#a336cc"/><stop offset="0.578" stop-color="#b71ccc"/><stop offset="0.594" stop-color="#bc0fcc"/><stop offset="0.606" stop-color="#bf00cc"/><stop offset="0.65" stop-color="#cb00cc"/><stop offset="0.806" stop-color="#cc00ad"/><stop offset="1" stop-color="#cc0095"/></linearGradient>
<linearGradient id="o187"><stop offset="0" stop-color="#0093cc"/><stop offset="0.143" stop-color="#007dcc"/><stop offset="0.24" stop-color="#005ecc"/><stop offset="0.246" stop-color="#135dcc"/><stop offset="0.251" stop-color="#1f5dcc"/><stop offset="0.269" stop-color="#345bcc"/><stop offset="0.297" stop-color="#4a58cc"/><stop offset="0.337" stop-color="#6053cc"/><stop offset="0.417" stop-color="#8147cc"/><stop offset="0.526" stop-color="#a52ecc"/><stop offset="0.571" stop-color="#b21bcc"/><stop offset="0.6" stop-color="#ba00cc"/><stop offset="0.663" stop-color="#cb00cc"/><stop offset="0.811" stop-color="#cc00af"/><stop offset="1" stop-color="#cc0098"/></linearGradient>
<linearGradient id="o188"><stop offset="0" stop-color="#0091cc"/><stop offset="0.147" stop-color="#007acc"/><stop offset="0.241" stop-color="#005ccc"/><stop offset="0.247" stop-color="#135bcc"/><stop offset="0.253" stop-color="#1f5acc"/><stop offset="0.271" stop-color="#3358cc"/><stop offset="0.3" stop-color="#4955cc"/><stop offset="0.347" stop-color="#624fcc"/><stop offset="0.447" stop-color="#893fcc"/><stop offset="0.524" stop-color="#a12ccc"/><stop offset="0.571" stop-color="#ae17cc"/><stop offset="0.594" stop-color="#b500cc"/><stop offset="0.682" stop-color="#cc00cc"/><stop offset="0.824" stop-color="#cc00b1"/><stop offset="1" stop-color="#cc009b"/></linearGradient>
<linearGradient id="o189"><stop offset="0" stop-color="#008fcc"/><stop offset="0.145" stop-color="#0078cc"/><stop offset="0.242" stop-color="#0059cc"/><stop offset="0.248" stop-color="#1358cc"/><stop offset="0.254" stop-color="#1f58cc"/><stop offset="0.272" stop-color="#3356cc"/><stop offset="0.302" stop-color="#4952cc"/><stop offset="0.35" stop-color="#624ccc"/><stop offset="0.447" stop-color="#863ccc"/><stop offset="0.52" stop-color="#9c2acc"/><stop offset="0.562" stop-color="#a817cc"/><stop offset="0.586" stop-color="#af00cc"/><stop offset="0.695" stop-color="#cb00cc"/><stop offset="0.84" stop-color="#cc00b2"/><stop offset="1" stop-color="#cc009e"/></linearGradient>
<linearGradient id="o190"><stop offset="0" stop-color="#008ecc"/><stop offset="0.143" stop-color="#0077cc"/><stop offset="0.199" stop-color="#0068cc"/><stop offset="0.242" stop-color="#0057cc"/><stop offset="0.248" stop-color="#1356cc"/><stop offset="0.267" stop-color="#2e54cc"/><stop offset="0.292" stop-color="#4151cc"/><stop offset="0.323" stop-color="#534dcc"/><stop offset="0.398" stop-color="#7342cc"/><stop offset="0.503" stop-color="#952bcc"/><stop offset="0.553" stop-color="#a317cc"/><stop offset="0.578" stop-color="#a900cc"/><stop offset="0.714" stop-color="#cc00cc"/><stop offset="0.845" stop-color="#cc00b5"/><stop offset="1" stop-color="#cc00a1"/></linearGradient>
<linearGradient id="o191"><stop offset="0" stop-color="#008bcc"/><stop offset="0.141" stop-color="#0075cc"/><stop offset="0.237" stop-color="#0056cc"/><stop offset="0.25" stop-color="#1a53cc"/><stop offset="0.263" stop-color="#2a52cc"/><stop offset="0.288" stop-color="#3f4fcc"/><stop offset="0.321" stop-color="#514bcc"/><stop offset="0.391" stop-color="#6f40cc"/><stop offset="0.494" stop-color="#902acc"/><stop offset="0.538" stop-color="#9c19cc"/><stop offset="0.571" stop-color="#a500cc"/><stop offset="0.731" stop-color="#cb00cc"/><stop offset="0.859" stop-color="#cc00b6"/><stop offset="1" stop-color="#cc00a4"/></linearGradient>
<linearGradient id="o192"><stop offset="0" stop-color="#0089cc"/><stop offset="0.145" stop-color="#0071cc"/><stop offset="0.238" stop-color="#0053cc"/><stop offset="0.251" stop-color="#1a50cc"/><stop offset="0.264" stop-color="#2a4fcc"/><stop offset="0.29" stop-color="#3f4ccc"/><stop offset="0.323" stop-color="#5148cc"/><stop offset="0.396" stop-color="#6f3dcc"/><stop offset="0.488" stop-color="#8b28cc"/><stop offset="0.535" stop-color="#9816cc"/><stop offset="0.561" stop-color="#9f00cc"/><stop offset="0.752" stop-color="#cc00cc"/><stop offset="1" stop-color="#cc00a8"/></linearGradient>
<linearGradient id="o193"><stop offset="0" stop-color="#0087cc"/><stop offset="0.143" stop-color="#006fcc"/><stop offset="0.198" stop-color="#0060cc"/><stop offset="0.239" stop-color="#004fcc"/><stop offset="0.246" stop-color="#144ecc"/><stop offset="0.259" stop-color="#274ccc"/><stop offset="0.28" stop-color="#384acc"/><stop offset="0.314" stop-color="#4c46cc"/><stop offset="0.382" stop-color="#683ccc"/><stop offset="0.478" stop-color="#8627cc"/><stop offset="0.519" stop-color="#9118cc"/><stop offset="0.546" stop-color="#9801cc"/><stop offset="0.553" stop-color="#9a00cc"/><stop offset="0.771" stop-color="#cc00cc"/><stop offset="1" stop-color="#cc00ab"/></linearGradient>
<linearGradient id="o194"><stop offset="0" stop-color="#0085cc"/><stop offset="0.141" stop-color="#006dcc"/><stop offset="0.197" stop-color="#005ecc"/><stop offset="0.239" stop-color="#004ccc"/><stop offset="0.246" stop-color="#144bcc"/><stop offset="0.261" stop-color="#274acc"/><stop offset="0.282" stop-color="#3847cc"/><stop offset="0.317" stop-color="#4c43cc"/><stop offset="0.38" stop-color="#6639cc"/><stop offset="0.472" stop-color="#8225cc"/><stop offset="0.514" stop-color="#8d14cc"/><stop offset="0.535" stop-color="#9302cc"/><stop offset="0.542" stop-color="#9400cc"/><stop offset="0.789" stop-color="#cb00cc"/><stop offset="1" stop-color="#cc00af"/></linearGradient>
<linearGradient id="o195"><stop offset="0" stop-color="#0083cc"/><stop offset="0.145" stop-color="#006acc"/><stop offset="0.196" stop-color="#005bcc"/><stop offset="0.24" stop-color="#0049cc"/><stop offset="0.247" stop-color="#1448cc"/><stop offset="0.262" stop-color="#2747cc"/><stop offset="0.313" stop-color="#4840cc"/><stop offset="0.378" stop-color="#6336cc"/><stop offset="0.458" stop-color="#7b25cc"/><stop offset="0.502" stop-color="#8714cc"/><stop offset="0.531" stop-color="#8f00cc"/><stop offset="0.655" stop-color="#ad00cc"/><stop offset="0.815" stop-color="#cc00cc"/><stop offset="1" stop-color="#cc00b3"/></linearGradient>
<linearGradient id="o196"><stop offset="0" stop-color="#0080cc"/><stop offset="0.143" stop-color="#0067cc"/><stop offset="0.234" stop-color="#0048cc"/><stop offset="0.257" stop-color="#2344cc"/><stop offset="0.279" stop-color="#3541cc"/><stop offset="0.309" stop-color="#463dcc"/><stop offset="0.37" stop-color="#5e34cc"/><stop offset="0.453" stop-color="#7821cc"/><stop offset="0.491" stop-color="#8212cc"/><stop offset="0.513" stop-color="#8800cc"/><stop offset="0.657" stop-color="#aa00cc"/><stop offset="0.838" stop-color="#cc00cc"/><stop offset="1" stop-color="#cc00b6"/></linearGradient>
<linearGradient id="o197"><stop offset="0" stop-color="#007ecc"/><stop offset="0.141" stop-color="#0065cc"/><stop offset="0.234" stop-color="#0045cc"/><stop offset="0.258" stop-color="#2341cc"/><stop offset="0.305" stop-color="#423bcc"/><stop offset="0.359" stop-color="#5932cc"/><stop offset="0.438" stop-color="#7121cc"/><stop offset="0.477" stop-color="#7c13cc"/><stop offset="0.5" stop-color="#8100cc"/><stop offset="0.656" stop-color="#a700cc"/><stop offset="0.859" stop-color="#cb00cc"/><stop offset="1" stop-color="#cc00ba"/></linearGradient>
<linearGradient id="o198"><stop offset="0" stop-color="#007bcc"/><stop offset="0.146" stop-color="#0061cc"/><stop offset="0.236" stop-color="#0140cc"/><stop offset="0.244" stop-color="#153fcc"/><stop offset="0.252" stop-color="#1f3ecc"/><stop offset="0.301" stop-color="#4038cc"/><stop offset="0.358" stop-color="#572fcc"/><stop offset="0.431" stop-color="#6e1ecc"/><stop offset="0.463" stop-color="#7611cc"/><stop offset="0.488" stop-color="#7c00cc"/><stop offset="0.642" stop-color="#a100cc"/><stop offset="0.846" stop-color="#c500cc"/><stop offset="0.894" stop-color="#cc00cc"/><stop offset="1" stop-color="#cc00be"/></linearGradient>
<linearGradient id="o199"><stop offset="0" stop-color="#0078cc"/><stop offset="0.136" stop-color="#0060cc"/><stop offset="0.186" stop-color="#0051cc"/><stop offset="0.229" stop-color="#003fcc"/><stop offset="0.246" stop-color="#1a3bcc"/><stop offset="0.254" stop-color="#233acc"/><stop offset="0.297" stop-color="#3e35cc"/><stop offset="0.415" stop-color="#671ccc"/><stop offset="0.475" stop-color="#7700cc"/><stop offset="0.61" stop-color="#9700cc"/><stop offset="0.78" stop-color="#b600cc"/><stop offset="0.924" stop-color="#cc00cc"/><stop offset="1" stop-color="#cc00c2"/></linearGradient>
<linearGradient id="o200"><stop offset="0" stop-color="#0076cc"/><stop offset="0.141" stop-color="#005ccc"/><stop offset="0.229" stop-color="#003ccc"/><stop offset="0.247" stop-color="#1b38cc"/><stop offset="0.256" stop-color="#2337cc"/><stop offset="0.291" stop-color="#3932cc"/><stop offset="0.396" stop-color="#601ccc"/><stop offset="0.423" stop-color="#6713cc"/><stop offset="0.458" stop-color="#7000cc"/><stop offset="0.573" stop-color="#8d00cc"/><stop offset="0.722" stop-color="#a900cc"/><stop offset="0.952" stop-color="#cb00cc"/><stop offset="1" stop-color="#cc00c7"/></linearGradient>
<linearGradient id="o201"><stop offset="0" stop-color="#0072cc"/><stop offset="0.129" stop-color="#005bcc"/><stop offset="0.221" stop-color="#003acc"/><stop offset="0.23" stop-color="#0336cc"/><stop offset="0.24" stop-color="#1535cc"/><stop offset="0.249" stop-color="#1f33cc"/><stop offset="0.286" stop-color="#372ecc"/><stop offset="0.387" stop-color="#5c18cc"/><stop offset="0.415" stop-color="#630dcc"/><stop offset="0.433" stop-color="#6800cc"/><stop offset="0.535" stop-color="#8200cc"/><stop offset="0.673" stop-color="#9d00cc"/><stop offset="1" stop-color="#cc00cb"/></linearGradient>
<linearGradient id="o202"><stop offset="0" stop-color="#006fcc"/><stop offset="0.135" stop-color="#0055cc"/><stop offset="0.184" stop-color="#0046cc"/><stop offset="0.222" stop-color="#0034cc"/><stop offset="0.242" stop-color="#1b30cc"/><stop offset="0.28" stop-color="#352acc"/><stop offset="0.367" stop-color="#5517cc"/><stop offset="0.415" stop-color="#6200cc"/><stop offset="0.522" stop-color="#7d00cc"/><stop offset="0.647" stop-color="#9600cc"/><stop offset="1" stop-color="#c800cc"/></linearGradient>
<linearGradient id="o203"><stop offset="0" stop-color="#006ccc"/><stop offset="0.141" stop-color="#0050cc"/><stop offset="0.192" stop-color="#003fcc"/><stop offset="0.222" stop-color="#0030cc"/><stop offset="0.242" stop-color="#1b2bcc"/><stop offset="0.273" stop-color="#2f27cc"/><stop offset="0.343" stop-color="#4b17cc"/><stop offset="0.394" stop-color="#5a00cc"/><stop offset="0.495" stop-color="#7500cc"/><stop offset="0.636" stop-color="#9100cc"/><stop offset="1" stop-color="#c400cc"/></linearGradient>
<linearGradient id="o204"><stop offset="0" stop-color="#0068cc"/><stop offset="0.128" stop-color="#004fcc"/><stop offset="0.181" stop-color="#003ecc"/><stop offset="0.213" stop-color="#002fcc"/><stop offset="0.223" stop-color="#0429cc"/><stop offset="0.234" stop-color="#1627cc"/><stop offset="0.266" stop-color="#2d22cc"/><stop offset="0.319" stop-color="#4316cc"/><stop offset="0.372" stop-color="#5300cc"/><stop offset="0.479" stop-color="#7000cc"/><stop offset="0.617" stop-color="#8b00cc"/><stop offset="1" stop-color="#bf00cc"/></linearGradient>
<linearGradient id="o205"><stop offset="0" stop-color="#0064cc"/><stop offset="0.135" stop-color="#0048cc"/><stop offset="0.18" stop-color="#0039cc"/><stop offset="0.213" stop-color="#0027cc"/><stop offset="0.236" stop-color="#1b21cc"/><stop offset="0.258" stop-color="#2a1dcc"/><stop offset="0.303" stop-color="#3d11cc"/><stop offset="0.337" stop-color="#4800cc"/><stop offset="0.438" stop-color="#6500cc"/><stop offset="0.584" stop-color="#8300cc"/><stop offset="0.775" stop-color="#9f00cc"/><stop offset="1" stop-color="#ba00cc"/></linearGradient>
<linearGradient id="o206"><stop offset="0" stop-color="#0060cc"/><stop offset="0.131" stop-color="#0044cc"/><stop offset="0.202" stop-color="#0025cc"/><stop offset="0.214" stop-color="#051ecc"/><stop offset="0.226" stop-color="#161bcc"/><stop offset="0.25" stop-color="#2616cc"/><stop offset="0.31" stop-color="#3f00cc"/><stop offset="0.417" stop-color="#5f00cc"/><stop offset="0.56" stop-color="#7c00cc"/><stop offset="0.75" stop-color="#9800cc"/><stop offset="1" stop-color="#b500cc"/></linearGradient>
<linearGradient id="o207"><stop offset="0" stop-color="#005bcc"/><stop offset="0.127" stop-color="#003fcc"/><stop offset="0.178" stop-color="#002bcc"/><stop offset="0.204" stop-color="#001acc"/><stop offset="0.229" stop-color="#1b11cc"/><stop offset="0.268" stop-color="#2f01cc"/><stop offset="0.369" stop-color="#5300cc"/><stop offset="0.522" stop-color="#7300cc"/><stop offset="0.739" stop-color="#9300cc"/><stop offset="1" stop-color="#b000cc"/></linearGradient>
<linearGradient id="o208"><stop offset="0" stop-color="#0056cc"/><stop offset="0.122" stop-color="#003acc"/><stop offset="0.163" stop-color="#002acc"/><stop offset="0.19" stop-color="#0018cc"/><stop offset="0.204" stop-color="#060bcc"/><stop offset="0.218" stop-color="#1605cc"/><stop offset="0.231" stop-color="#2000cc"/><stop offset="0.259" stop-color="#2f00cc"/><stop offset="0.313" stop-color="#4400cc"/><stop offset="0.476" stop-color="#6900cc"/><stop offset="0.707" stop-color="#8b00cc"/><stop offset="1" stop-color="#ab00cc"/></linearGradient>
<linearGradient id="o209"><stop offset="0" stop-color="#0051cc"/><stop offset="0.073" stop-color="#0041cc"/><stop offset="0.131" stop-color="#002fcc"/><stop offset="0.175" stop-color="#0017cc"/><stop offset="0.19" stop-color="#0001cc"/><stop offset="0.204" stop-color="#1600cc"/><stop offset="0.234" stop-color="#2900cc"/><stop offset="0.277" stop-color="#3b00cc"/><stop offset="0.438" stop-color="#6100cc"/><stop offset="0.686" stop-color="#8600cc"/><stop offset="1" stop-color="#a600cc"/></linearGradient>
<linearGradient id="o210"><stop offset="0" stop-color="#0049cc"/><stop offset="0.111" stop-color="#002bcc"/><stop offset="0.143" stop-color="#001bcc"/><stop offset="0.159" stop-color="#000ccc"/><stop offset="0.175" stop-color="#0f00cc"/><stop offset="0.206" stop-color="#2600cc"/><stop offset="0.254" stop-color="#3900cc"/><stop offset="0.413" stop-color="#5d00cc"/><stop offset="0.667" stop-color="#8100cc"/><stop offset="1" stop-color="#a200cc"/></linearGradient>
<linearGradient id="o211"><stop offset="0" stop-color="#0041cc"/><stop offset="0.086" stop-color="#002acc"/><stop offset="0.121" stop-color="#0019cc"/><stop offset="0.138" stop-color="#0008cc"/><stop offset="0.155" stop-color="#1200cc"/><stop offset="0.19" stop-color="#2700cc"/><stop offset="0.241" stop-color="#3900cc"/><stop offset="0.397" stop-color="#5a00cc"/><stop offset="0.655" stop-color="#7c00cc"/><stop offset="1" stop-color="#9d00cc"/></linearGradient>
<linearGradient id="o212"><stop offset="0" stop-color="#0037cc"/><stop offset="0.076" stop-color="#001dcc"/><stop offset="0.095" stop-color="#0010cc"/><stop offset="0.114" stop-color="#0a00cc"/><stop offset="0.133" stop-color="#1a00cc"/><stop offset="0.19" stop-color="#3100cc"/><stop offset="0.362" stop-color="#5500cc"/><stop offset="0.629" stop-color="#7700cc"/><stop offset="1" stop-color="#9700cc"/></linearGradient>
<linearGradient id="o213"><stop offset="0" stop-color="#002bcc"/><stop offset="0.042" stop-color="#001bcc"/><stop offset="0.063" stop-color="#000ecc"/><stop offset="0.084" stop-color="#0d00cc"/><stop offset="0.105" stop-color="#1b00cc"/><stop offset="0.168" stop-color="#3200cc"/><stop offset="0.337" stop-color="#5200cc"/><stop offset="0.611" stop-color="#7200cc"/><stop offset="1" stop-color="#9200cc"/></linearGradient>
<linearGradient id="o214"><stop offset="0" stop-color="#0014cc"/><stop offset="0.024" stop-color="#0300cc"/><stop offset="0.048" stop-color="#1700cc"/><stop offset="0.095" stop-color="#2900cc"/><stop offset="0.167" stop-color="#3a00cc"/><stop offset="0.286" stop-color="#4d00cc"/><stop offset="0.571" stop-color="#6d00cc"/><stop offset="1" stop-color="#8d00cc"/></linearGradient>
<linearGradient id="o215"><stop offset="0" stop-color="#1800cc"/><stop offset="0.108" stop-color="#3500cc"/><stop offset="0.324" stop-color="#5300cc"/><stop offset="0.622" stop-color="#6f00cc"/><stop offset="1" stop-color="#8800cc"/></linearGradient>
<linearGradient id="o216"><stop offset="0" stop-color="#2a00cc"/><stop offset="0.156" stop-color="#4300cc"/><stop offset="0.375" stop-color="#5900cc"/><stop offset="1" stop-color="#8300cc"/></linearGradient>
<linearGradient id="o217"><stop offset="0" stop-color="#3600cc"/><stop offset="0.407" stop-color="#5b00cc"/><stop offset="1" stop-color="#7d00cc"/></linearGradient>
<linearGradient id="o218"><stop offset="0" stop-color="#3f00cc"/><stop offset="0.409" stop-color="#5b00cc"/><stop offset="1" stop-color="#7700cc"/></linearGradient>
<linearGradient id="o219"><stop offset="0" stop-color="#4600cc"/><stop offset="0.412" stop-color="#5b00cc"/><stop offset="1" stop-color="#7100cc"/></linearGradient>
<linearGradient id="o220"><stop offset="0" stop-color="#4f00cc"/><stop offset="1" stop-color="#6a00cc"/></linearGradient>
<linearGradient id="i0"><stop offset="0" stop-color="#00ff8b"/><stop offset="1" stop-color="#00ff86"/></linearGradient>
<linearGradient id="i1"><stop offset="0" stop-color="#00ff8c"/><stop offset="1" stop-color="#00ff84"/></linearGradient>
<linearGradient id="i2"><stop offset="0" stop-color="#00ff8d"/><stop offset="1" stop-color="#00ff81"/></linearGradient>
<linearGradient id="i3"><stop offset="0" stop-color="#00ff8d"/><stop offset="1" stop-color="#00ff7f"/></linearGradient>
<linearGradient id="i4"><stop offset="0" stop-color="#00ff8e"/><stop offset="1" stop-color="#00ff7c"/></linearGradient>
<linearGradient id="i5"><stop offset="0" stop-color="#00ff8f"/><stop offset="1" stop-color="#00ff78"/></linearGradient>
<linearGradient id="i6"><stop offset="0" stop-color="#00ff90"/><stop offset="1" stop-color="#00ff75"/></linearGradient>
<linearGradient id="i7"><stop offset="0" stop-color="#00ff90"/><stop offset="1" stop-color="#00ff72"/></linearGradient>
<linearGradient id="i8"><stop offset="0" stop-color="#00ff91"/><stop offset="0.565" stop-color="#00ff80"/><stop offset="1" stop-color="#00ff6e"/></linearGradient>
<linearGradient id="i9"><stop offset="0" stop-color="#00ff92"/><stop offset="0.577" stop-color="#00ff7f"/><stop offset="1" stop-color="#00ff69"/></linearGradient>
<linearGradient id="i10"><stop offset="0" stop-color="#00ff93"/><stop offset="0.571" stop-color="#00ff7d"/><stop offset="1" stop-color="#00ff64"/></linearGradient>
<linearGradient id="i11"><stop offset="0" stop-color="#00ff94"/><stop offset="0.557" stop-color="#00ff7d"/><stop offset="1" stop-color="#00ff60"/></linearGradient>
<linearGradient id="i12"><stop offset="0" stop-color="#00ff94"/><stop offset="0.606" stop-color="#00ff79"/><stop offset="1" stop-color="#00ff58"/></linearGradient>
<linearGradient id="i13"><stop offset="0" stop-color="#00ff95"/><stop offset="0.6" stop-color="#00ff77"/><stop offset="0.829" stop-color="#00ff65"/><stop offset="1" stop-color="#00ff51"/></linearGradient>
<linearGradient id="i14"><stop offset="0" stop-color="#00ff96"/><stop offset="0.613" stop-color="#00ff75"/><stop offset="0.827" stop-color="#00ff61"/><stop offset="1" stop-color="#00ff4a"/></linearGradient>
<linearGradient id="i15"><stop offset="0" stop-color="#00ff97"/><stop offset="0.354" stop-color="#00ff85"/><stop offset="0.633" stop-color="#00ff71"/><stop offset="0.835" stop-color="#00ff5c"/><stop offset="1" stop-color="#00ff3f"/></linearGradient>
<linearGradient id="i16"><stop offset="0" stop-color="#00ff98"/><stop offset="0.4" stop-color="#00ff82"/><stop offset="0.682" stop-color="#00ff6a"/><stop offset="0.871" stop-color="#00ff4f"/><stop offset="1" stop-color="#00ff2c"/></linearGradient>
<linearGradient id="i17"><stop offset="0" stop-color="#00ff98"/><stop offset="0.449" stop-color="#00ff7e"/><stop offset="0.764" stop-color="#00ff5b"/><stop offset="0.854" stop-color="#00ff4b"/><stop offset="0.921" stop-color="#00ff38"/><stop offset="0.966" stop-color="#00ff23"/><stop offset="0.989" stop-color="#0bff00"/><stop offset="1" stop-color="#16ff00"/></linearGradient>
<linearGradient id="i18"><stop offset="0" stop-color="#00ff99"/><stop offset="0.409" stop-color="#00ff80"/><stop offset="0.71" stop-color="#00ff5f"/><stop offset="0.817" stop-color="#00ff4b"/><stop offset="0.882" stop-color="#00ff39"/><stop offset="0.925" stop-color="#00ff25"/><stop offset="0.946" stop-color="#00ff08"/><stop offset="0.968" stop-color="#24ff00"/><stop offset="1" stop-color="#33ff00"/></linearGradient>
<linearGradient id="i19"><stop offset="0" stop-color="#00ff9a"/><stop offset="0.364" stop-color="#00ff83"/><stop offset="0.626" stop-color="#00ff68"/><stop offset="0.727" stop-color="#00ff57"/><stop offset="0.808" stop-color="#00ff44"/><stop offset="0.848" stop-color="#00ff36"/><stop offset="0.889" stop-color="#00ff1e"/><stop offset="0.909" stop-color="#19ff00"/><stop offset="0.929" stop-color="#2aff00"/><stop offset="0.949" stop-color="#35ff00"/><stop offset="1" stop-color="#46ff00"/></linearGradient>
<linearGradient id="i20"><stop offset="0" stop-color="#00ff9b"/><stop offset="0.35" stop-color="#00ff84"/><stop offset="0.602" stop-color="#00ff68"/><stop offset="0.699" stop-color="#00ff58"/><stop offset="0.777" stop-color="#00ff45"/><stop offset="0.816" stop-color="#00ff37"/><stop offset="0.854" stop-color="#00ff20"/><stop offset="0.874" stop-color="#16ff00"/><stop offset="0.893" stop-color="#29ff00"/><stop offset="0.913" stop-color="#34ff00"/><stop offset="1" stop-color="#51ff00"/></linearGradient>
<linearGradient id="i21"><stop offset="0" stop-color="#00ff9c"/><stop offset="0.352" stop-color="#00ff84"/><stop offset="0.611" stop-color="#00ff65"/><stop offset="0.759" stop-color="#00ff43"/><stop offset="0.815" stop-color="#00ff29"/><stop offset="0.833" stop-color="#00ff16"/><stop offset="0.852" stop-color="#20ff00"/><stop offset="0.87" stop-color="#2eff00"/><stop offset="0.926" stop-color="#47ff00"/><stop offset="1" stop-color="#5bff00"/></linearGradient>
<linearGradient id="i22"><stop offset="0" stop-color="#00ff9c"/><stop offset="0.339" stop-color="#00ff84"/><stop offset="0.571" stop-color="#00ff68"/><stop offset="0.661" stop-color="#00ff57"/><stop offset="0.732" stop-color="#00ff44"/><stop offset="0.786" stop-color="#00ff2a"/><stop offset="0.804" stop-color="#00ff19"/><stop offset="0.821" stop-color="#1fff00"/><stop offset="0.857" stop-color="#38ff00"/><stop offset="0.911" stop-color="#4dff00"/><stop offset="1" stop-color="#64ff00"/></linearGradient>
<linearGradient id="i23"><stop offset="0" stop-color="#00ff9e"/><stop offset="0.305" stop-color="#00ff87"/><stop offset="0.525" stop-color="#00ff6d"/><stop offset="0.678" stop-color="#00ff4d"/><stop offset="0.729" stop-color="#00ff3a"/><stop offset="0.763" stop-color="#00ff25"/><stop offset="0.78" stop-color="#0aff00"/><stop offset="0.797" stop-color="#26ff00"/><stop offset="0.831" stop-color="#3bff00"/><stop offset="0.898" stop-color="#54ff00"/><stop offset="1" stop-color="#6dff00"/></linearGradient>
<linearGradient id="i24"><stop offset="0" stop-color="#00ff9e"/><stop offset="0.328" stop-color="#00ff85"/><stop offset="0.557" stop-color="#00ff65"/><stop offset="0.639" stop-color="#00ff53"/><stop offset="0.705" stop-color="#00ff3b"/><stop offset="0.738" stop-color="#00ff26"/><stop offset="0.754" stop-color="#00ff0b"/><stop offset="0.77" stop-color="#25ff00"/><stop offset="0.803" stop-color="#3bff00"/><stop offset="0.885" stop-color="#59ff00"/><stop offset="1" stop-color="#74ff00"/></linearGradient>
<linearGradient id="i25"><stop offset="0" stop-color="#00ff9f"/><stop offset="0.317" stop-color="#00ff85"/><stop offset="0.54" stop-color="#00ff66"/><stop offset="0.619" stop-color="#00ff53"/><stop offset="0.683" stop-color="#00ff3c"/><stop offset="0.714" stop-color="#00ff28"/><stop offset="0.73" stop-color="#00ff11"/><stop offset="0.746" stop-color="#24ff00"/><stop offset="0.762" stop-color="#31ff00"/><stop offset="0.794" stop-color="#42ff00"/><stop offset="0.873" stop-color="#5eff00"/><stop offset="1" stop-color="#7bff00"/></linearGradient>
<linearGradient id="i26"><stop offset="0" stop-color="#00ffa0"/><stop offset="0.273" stop-color="#00ff8a"/><stop offset="0.485" stop-color="#00ff6e"/><stop offset="0.621" stop-color="#00ff4d"/><stop offset="0.667" stop-color="#00ff39"/><stop offset="0.697" stop-color="#00ff21"/><stop offset="0.712" stop-color="#16ff00"/><stop offset="0.727" stop-color="#2aff00"/><stop offset="0.773" stop-color="#46ff00"/><stop offset="0.864" stop-color="#64ff00"/><stop offset="1" stop-color="#83ff00"/></linearGradient>
<linearGradient id="i27"><stop offset="0" stop-color="#00ffa1"/><stop offset="0.265" stop-color="#00ff8b"/><stop offset="0.471" stop-color="#00ff6f"/><stop offset="0.603" stop-color="#00ff4e"/><stop offset="0.647" stop-color="#00ff3a"/><stop offset="0.676" stop-color="#00ff23"/><stop offset="0.691" stop-color="#13ff00"/><stop offset="0.706" stop-color="#29ff00"/><stop offset="0.721" stop-color="#35ff00"/><stop offset="0.765" stop-color="#4cff00"/><stop offset="0.868" stop-color="#6cff00"/><stop offset="1" stop-color="#88ff00"/></linearGradient>
<linearGradient id="i28"><stop offset="0" stop-color="#00ffa2"/><stop offset="0.284" stop-color="#00ff89"/><stop offset="0.482" stop-color="#00ff6b"/><stop offset="0.553" stop-color="#00ff5a"/><stop offset="0.61" stop-color="#00ff46"/><stop offset="0.652" stop-color="#00ff2c"/><stop offset="0.667" stop-color="#00ff1a"/><stop offset="0.681" stop-color="#1fff00"/><stop offset="0.709" stop-color="#39ff00"/><stop offset="0.752" stop-color="#4fff00"/><stop offset="0.851" stop-color="#6eff00"/><stop offset="1" stop-color="#8eff00"/></linearGradient>
<linearGradient id="i29"><stop offset="0" stop-color="#00ffa2"/><stop offset="0.276" stop-color="#00ff8a"/><stop offset="0.469" stop-color="#00ff6c"/><stop offset="0.538" stop-color="#00ff5b"/><stop offset="0.593" stop-color="#00ff47"/><stop offset="0.621" stop-color="#00ff38"/><stop offset="0.634" stop-color="#00ff2d"/><stop offset="0.648" stop-color="#00ff1d"/><stop offset="0.662" stop-color="#1dff00"/><stop offset="0.69" stop-color="#39ff00"/><stop offset="0.731" stop-color="#4fff00"/><stop offset="0.841" stop-color="#72ff00"/><stop offset="1" stop-color="#93ff00"/></linearGradient>
<linearGradient id="i30"><stop offset="0" stop-color="#00ffa3"/><stop offset="0.253" stop-color="#00ff8c"/><stop offset="0.44" stop-color="#00ff70"/><stop offset="0.56" stop-color="#00ff4e"/><stop offset="0.6" stop-color="#00ff39"/><stop offset="0.627" stop-color="#00ff1f"/><stop offset="0.64" stop-color="#1bff00"/><stop offset="0.653" stop-color="#2dff00"/><stop offset="0.667" stop-color="#38ff00"/><stop offset="0.72" stop-color="#54ff00"/><stop offset="0.84" stop-color="#7aff00"/><stop offset="1" stop-color="#9aff00"/></linearGradient>
<linearGradient id="i31"><stop offset="0" stop-color="#00ffa4"/><stop offset="0.258" stop-color="#00ff8c"/><stop offset="0.452" stop-color="#00ff6c"/><stop offset="0.516" stop-color="#00ff5a"/><stop offset="0.568" stop-color="#00ff45"/><stop offset="0.606" stop-color="#00ff29"/><stop offset="0.619" stop-color="#00ff12"/><stop offset="0.632" stop-color="#24ff00"/><stop offset="0.645" stop-color="#32ff00"/><stop offset="0.671" stop-color="#44ff00"/><stop offset="0.71" stop-color="#57ff00"/><stop offset="0.826" stop-color="#7cff00"/><stop offset="1" stop-color="#9fff00"/></linearGradient>
<linearGradient id="i32"><stop offset="0" stop-color="#00ffa5"/><stop offset="0.252" stop-color="#00ff8d"/><stop offset="0.44" stop-color="#00ff6d"/><stop offset="0.503" stop-color="#00ff5b"/><stop offset="0.553" stop-color="#00ff46"/><stop offset="0.591" stop-color="#00ff2b"/><stop offset="0.604" stop-color="#00ff16"/><stop offset="0.616" stop-color="#23ff00"/><stop offset="0.629" stop-color="#32ff00"/><stop offset="0.654" stop-color="#44ff00"/><stop offset="0.692" stop-color="#57ff00"/><stop offset="0.818" stop-color="#7fff00"/><stop offset="1" stop-color="#a4ff00"/></linearGradient>
<linearGradient id="i33"><stop offset="0" stop-color="#00ffa6"/><stop offset="0.242" stop-color="#00ff8e"/><stop offset="0.412" stop-color="#00ff72"/><stop offset="0.521" stop-color="#00ff50"/><stop offset="0.558" stop-color="#00ff3c"/><stop offset="0.582" stop-color="#00ff25"/><stop offset="0.594" stop-color="#1bff15"/><stop offset="0.606" stop-color="#2aff07"/><stop offset="0.618" stop-color="#37ff00"/><stop offset="0.655" stop-color="#4eff00"/><stop offset="0.691" stop-color="#5fff00"/><stop offset="0.824" stop-color="#87ff00"/><stop offset="1" stop-color="#abff00"/></linearGradient>
<linearGradient id="i34"><stop offset="0" stop-color="#00ffa7"/><stop offset="0.213" stop-color="#00ff92"/><stop offset="0.379" stop-color="#00ff78"/><stop offset="0.485" stop-color="#00ff5b"/><stop offset="0.533" stop-color="#00ff45"/><stop offset="0.556" stop-color="#00ff34"/><stop offset="0.568" stop-color="#05ff26"/><stop offset="0.58" stop-color="#24ff23"/><stop offset="0.592" stop-color="#30ff1e"/><stop offset="0.615" stop-color="#40ff0f"/><stop offset="0.627" stop-color="#47ff00"/><stop offset="0.686" stop-color="#64ff00"/><stop offset="0.817" stop-color="#8bff00"/><stop offset="1" stop-color="#b0ff00"/></linearGradient>
<linearGradient id="i35"><stop offset="0" stop-color="#00ffa8"/><stop offset="0.208" stop-color="#00ff93"/><stop offset="0.37" stop-color="#00ff79"/><stop offset="0.474" stop-color="#00ff5c"/><stop offset="0.52" stop-color="#00ff46"/><stop offset="0.543" stop-color="#00ff35"/><stop offset="0.555" stop-color="#1cff2e"/><stop offset="0.578" stop-color="#35ff28"/><stop offset="0.624" stop-color="#4fff13"/><stop offset="0.636" stop-color="#54ff00"/><stop offset="0.671" stop-color="#64ff00"/><stop offset="0.809" stop-color="#8eff00"/><stop offset="1" stop-color="#b5ff00"/></linearGradient>
<linearGradient id="i36"><stop offset="0" stop-color="#00ffa9"/><stop offset="0.202" stop-color="#00ff94"/><stop offset="0.348" stop-color="#00ff7d"/><stop offset="0.461" stop-color="#00ff5f"/><stop offset="0.494" stop-color="#00ff50"/><stop offset="0.528" stop-color="#00ff3b"/><stop offset="0.539" stop-color="#1cff36"/><stop offset="0.562" stop-color="#35ff31"/><stop offset="0.618" stop-color="#54ff1f"/><stop offset="0.64" stop-color="#5dff11"/><stop offset="0.652" stop-color="#62ff00"/><stop offset="0.663" stop-color="#66ff00"/><stop offset="0.798" stop-color="#90ff00"/><stop offset="1" stop-color="#baff00"/></linearGradient>
<linearGradient id="i37"><stop offset="0" stop-color="#00ffa9"/><stop offset="0.186" stop-color="#00ff97"/><stop offset="0.328" stop-color="#00ff80"/><stop offset="0.437" stop-color="#00ff64"/><stop offset="0.503" stop-color="#00ff44"/><stop offset="0.514" stop-color="#0cff3d"/><stop offset="0.525" stop-color="#25ff3b"/><stop offset="0.536" stop-color="#31ff39"/><stop offset="0.568" stop-color="#48ff32"/><stop offset="0.612" stop-color="#5cff26"/><stop offset="0.645" stop-color="#67ff15"/><stop offset="0.656" stop-color="#6bff00"/><stop offset="0.798" stop-color="#96ff00"/><stop offset="1" stop-color="#bfff00"/></linearGradient>
<linearGradient id="i38"><stop offset="0" stop-color="#00ffab"/><stop offset="0.181" stop-color="#00ff98"/><stop offset="0.319" stop-color="#00ff82"/><stop offset="0.426" stop-color="#00ff66"/><stop offset="0.489" stop-color="#00ff49"/><stop offset="0.5" stop-color="#0dff42"/><stop offset="0.511" stop-color="#26ff41"/><stop offset="0.532" stop-color="#3aff3d"/><stop offset="0.564" stop-color="#4eff37"/><stop offset="0.606" stop-color="#60ff2c"/><stop offset="0.649" stop-color="#6fff1b"/><stop offset="0.66" stop-color="#72ff14"/><stop offset="0.67" stop-color="#76ff00"/><stop offset="0.809" stop-color="#9eff00"/><stop offset="1" stop-color="#c5ff00"/></linearGradient>
<linearGradient id="i39"><stop offset="0" stop-color="#00ffab"/><stop offset="0.177" stop-color="#00ff99"/><stop offset="0.312" stop-color="#00ff83"/><stop offset="0.417" stop-color="#00ff67"/><stop offset="0.479" stop-color="#00ff4a"/><stop offset="0.49" stop-color="#1eff46"/><stop offset="0.51" stop-color="#36ff43"/><stop offset="0.542" stop-color="#4bff3e"/><stop offset="0.594" stop-color="#62ff33"/><stop offset="0.656" stop-color="#77ff1e"/><stop offset="0.667" stop-color="#7bff17"/><stop offset="0.688" stop-color="#81ff00"/><stop offset="0.823" stop-color="#a6ff00"/><stop offset="1" stop-color="#caff00"/></linearGradient>
<linearGradient id="i40"><stop offset="0" stop-color="#00ffac"/><stop offset="0.162" stop-color="#00ff9b"/><stop offset="0.294" stop-color="#00ff86"/><stop offset="0.386" stop-color="#00ff6f"/><stop offset="0.457" stop-color="#00ff51"/><stop offset="0.467" stop-color="#0fff4c"/><stop offset="0.477" stop-color="#26ff4a"/><stop offset="0.497" stop-color="#3bff47"/><stop offset="0.528" stop-color="#4eff43"/><stop offset="0.579" stop-color="#65ff39"/><stop offset="0.66" stop-color="#7fff20"/><stop offset="0.68" stop-color="#85ff11"/><stop offset="0.69" stop-color="#88ff00"/><stop offset="0.832" stop-color="#aeff00"/><stop offset="1" stop-color="#cfff00"/></linearGradient>
<linearGradient id="i41"><stop offset="0" stop-color="#00ffad"/><stop offset="0.158" stop-color="#00ff9d"/><stop offset="0.277" stop-color="#00ff8a"/><stop offset="0.376" stop-color="#00ff71"/><stop offset="0.446" stop-color="#00ff55"/><stop offset="0.455" stop-color="#10ff50"/><stop offset="0.465" stop-color="#27ff4f"/><stop offset="0.485" stop-color="#3bff4c"/><stop offset="0.525" stop-color="#54ff46"/><stop offset="0.574" stop-color="#69ff3d"/><stop offset="0.663" stop-color="#86ff24"/><stop offset="0.683" stop-color="#8bff19"/><stop offset="0.703" stop-color="#91ff00"/><stop offset="0.832" stop-color="#b2ff00"/><stop offset="1" stop-color="#d4ff00"/></linearGradient>
<linearGradient id="i42"><stop offset="0" stop-color="#00ffae"/><stop offset="0.155" stop-color="#00ff9d"/><stop offset="0.272" stop-color="#00ff8b"/><stop offset="0.369" stop-color="#00ff72"/><stop offset="0.437" stop-color="#00ff56"/><stop offset="0.447" stop-color="#1fff54"/><stop offset="0.466" stop-color="#37ff51"/><stop offset="0.505" stop-color="#52ff4c"/><stop offset="0.553" stop-color="#68ff44"/><stop offset="0.621" stop-color="#7fff35"/><stop offset="0.67" stop-color="#8dff26"/><stop offset="0.699" stop-color="#95ff13"/><stop offset="0.709" stop-color="#97ff00"/><stop offset="0.835" stop-color="#b8ff00"/><stop offset="1" stop-color="#d9ff00"/></linearGradient>
<linearGradient id="i43"><stop offset="0" stop-color="#00ffaf"/><stop offset="0.152" stop-color="#00ff9f"/><stop offset="0.265" stop-color="#00ff8c"/><stop offset="0.36" stop-color="#00ff75"/><stop offset="0.427" stop-color="#00ff5a"/><stop offset="0.436" stop-color="#1fff57"/><stop offset="0.455" stop-color="#38ff55"/><stop offset="0.493" stop-color="#52ff50"/><stop offset="0.55" stop-color="#6cff47"/><stop offset="0.626" stop-color="#85ff38"/><stop offset="0.673" stop-color="#93ff29"/><stop offset="0.701" stop-color="#9aff1b"/><stop offset="0.711" stop-color="#9dff12"/><stop offset="0.72" stop-color="#9fff00"/><stop offset="0.853" stop-color="#c0ff00"/><stop offset="1" stop-color="#ddff00"/></linearGradient>
<linearGradient id="i44"><stop offset="0" stop-color="#00ffb0"/><stop offset="0.139" stop-color="#00ffa1"/><stop offset="0.25" stop-color="#00ff8f"/><stop offset="0.343" stop-color="#00ff79"/><stop offset="0.407" stop-color="#00ff60"/><stop offset="0.426" stop-color="#28ff5b"/><stop offset="0.444" stop-color="#3cff58"/><stop offset="0.481" stop-color="#55ff54"/><stop offset="0.537" stop-color="#6eff4b"/><stop offset="0.62" stop-color="#8aff3b"/><stop offset="0.676" stop-color="#99ff2b"/><stop offset="0.713" stop-color="#a3ff16"/><stop offset="0.722" stop-color="#a5ff00"/><stop offset="0.852" stop-color="#c6ff00"/><stop offset="1" stop-color="#e3ff00"/></linearGradient>
<linearGradient id="i45"><stop offset="0" stop-color="#00ffb1"/><stop offset="0.136" stop-color="#00ffa2"/><stop offset="0.245" stop-color="#00ff90"/><stop offset="0.336" stop-color="#00ff7a"/><stop offset="0.4" stop-color="#00ff61"/><stop offset="0.409" stop-color="#20ff5f"/><stop offset="0.427" stop-color="#38ff5d"/><stop offset="0.464" stop-color="#53ff58"/><stop offset="0.527" stop-color="#70ff4f"/><stop offset="0.618" stop-color="#8fff3f"/><stop offset="0.682" stop-color="#a0ff2d"/><stop offset="0.718" stop-color="#a9ff19"/><stop offset="0.736" stop-color="#aeff00"/><stop offset="1" stop-color="#e8ff00"/></linearGradient>
<linearGradient id="i46"><stop offset="0" stop-color="#00ffb2"/><stop offset="0.133" stop-color="#00ffa3"/><stop offset="0.24" stop-color="#00ff92"/><stop offset="0.329" stop-color="#00ff7c"/><stop offset="0.391" stop-color="#00ff64"/><stop offset="0.4" stop-color="#21ff62"/><stop offset="0.409" stop-color="#2fff61"/><stop offset="0.427" stop-color="#41ff5f"/><stop offset="0.471" stop-color="#5dff5a"/><stop offset="0.524" stop-color="#74ff52"/><stop offset="0.622" stop-color="#94ff41"/><stop offset="0.684" stop-color="#a5ff30"/><stop offset="0.72" stop-color="#aeff1f"/><stop offset="0.729" stop-color="#b0ff18"/><stop offset="0.747" stop-color="#b5ff00"/><stop offset="1" stop-color="#ecff00"/></linearGradient>
<linearGradient id="i47"><stop offset="0" stop-color="#00ffb3"/><stop offset="0.226" stop-color="#00ff95"/><stop offset="0.313" stop-color="#00ff80"/><stop offset="0.374" stop-color="#00ff69"/><stop offset="0.391" stop-color="#29ff65"/><stop offset="0.409" stop-color="#3dff63"/><stop offset="0.452" stop-color="#5bff5e"/><stop offset="0.513" stop-color="#76ff56"/><stop offset="0.617" stop-color="#99ff44"/><stop offset="0.687" stop-color="#acff31"/><stop offset="0.73" stop-color="#b7ff1b"/><stop offset="0.739" stop-color="#b9ff11"/><stop offset="0.748" stop-color="#bbff00"/><stop offset="1" stop-color="#f2ff00"/></linearGradient>
<linearGradient id="i48"><stop offset="0" stop-color="#00ffb4"/><stop offset="0.221" stop-color="#00ff96"/><stop offset="0.306" stop-color="#00ff82"/><stop offset="0.366" stop-color="#00ff6c"/><stop offset="0.383" stop-color="#2aff68"/><stop offset="0.409" stop-color="#45ff65"/><stop offset="0.451" stop-color="#60ff61"/><stop offset="0.511" stop-color="#7aff59"/><stop offset="0.621" stop-color="#9eff46"/><stop offset="0.698" stop-color="#b3ff31"/><stop offset="0.74" stop-color="#beff1a"/><stop offset="0.757" stop-color="#c2ff00"/><stop offset="1" stop-color="#f7ff00"/></linearGradient>
<linearGradient id="i49"><stop offset="0" stop-color="#00ffb5"/><stop offset="0.218" stop-color="#00ff97"/><stop offset="0.301" stop-color="#00ff83"/><stop offset="0.36" stop-color="#00ff6d"/><stop offset="0.368" stop-color="#22ff6c"/><stop offset="0.377" stop-color="#30ff6b"/><stop offset="0.393" stop-color="#42ff69"/><stop offset="0.435" stop-color="#5eff65"/><stop offset="0.494" stop-color="#79ff5d"/><stop offset="0.611" stop-color="#a0ff4a"/><stop offset="0.695" stop-color="#b7ff35"/><stop offset="0.745" stop-color="#c3ff1d"/><stop offset="0.753" stop-color="#c5ff14"/><stop offset="0.762" stop-color="#c7ff00"/><stop offset="1" stop-color="#fcff00"/></linearGradient>
<linearGradient id="i50"><stop offset="0" stop-color="#00ffb6"/><stop offset="0.206" stop-color="#00ff9a"/><stop offset="0.288" stop-color="#00ff86"/><stop offset="0.346" stop-color="#00ff72"/><stop offset="0.362" stop-color="#2aff6e"/><stop offset="0.387" stop-color="#46ff6c"/><stop offset="0.428" stop-color="#61ff67"/><stop offset="0.494" stop-color="#7eff5f"/><stop offset="0.617" stop-color="#a7ff4c"/><stop offset="0.7" stop-color="#bdff37"/><stop offset="0.749" stop-color="#c9ff1f"/><stop offset="0.757" stop-color="#cbff18"/><stop offset="0.765" stop-color="#cdff09"/><stop offset="0.774" stop-color="#cfff00"/><stop offset="0.914" stop-color="#f0ff00"/><stop offset="1" stop-color="#fffd00"/></linearGradient>
<linearGradient id="i51"><stop offset="0" stop-color="#00ffb7"/><stop offset="0.201" stop-color="#00ff9c"/><stop offset="0.281" stop-color="#00ff89"/><stop offset="0.337" stop-color="#00ff75"/><stop offset="0.353" stop-color="#2bff71"/><stop offset="0.378" stop-color="#46ff6f"/><stop offset="0.426" stop-color="#65ff6a"/><stop offset="0.49" stop-color="#82ff62"/><stop offset="0.618" stop-color="#acff4e"/><stop offset="0.707" stop-color="#c4ff37"/><stop offset="0.755" stop-color="#d0ff1f"/><stop offset="0.763" stop-color="#d2ff17"/><stop offset="0.771" stop-color="#d4ff00"/><stop offset="0.956" stop-color="#feff00"/><stop offset="1" stop-color="#fff800"/></linearGradient>
<linearGradient id="i52"><stop offset="0" stop-color="#00ffb8"/><stop offset="0.198" stop-color="#00ff9d"/><stop offset="0.277" stop-color="#00ff8a"/><stop offset="0.332" stop-color="#00ff76"/><stop offset="0.34" stop-color="#24ff75"/><stop offset="0.356" stop-color="#3bff73"/><stop offset="0.372" stop-color="#4aff72"/><stop offset="0.419" stop-color="#68ff6d"/><stop offset="0.49" stop-color="#87ff64"/><stop offset="0.625" stop-color="#b2ff4f"/><stop offset="0.711" stop-color="#caff38"/><stop offset="0.759" stop-color="#d6ff21"/><stop offset="0.767" stop-color="#d8ff1a"/><stop offset="0.783" stop-color="#dcff00"/><stop offset="0.933" stop-color="#feff00"/><stop offset="1" stop-color="#fff300"/></linearGradient>
<linearGradient id="i53"><stop offset="0" stop-color="#00ffb9"/><stop offset="0.194" stop-color="#00ff9e"/><stop offset="0.264" stop-color="#00ff8e"/><stop offset="0.326" stop-color="#00ff79"/><stop offset="0.333" stop-color="#24ff78"/><stop offset="0.349" stop-color="#3bff76"/><stop offset="0.364" stop-color="#4aff75"/><stop offset="0.411" stop-color="#68ff70"/><stop offset="0.488" stop-color="#8aff67"/><stop offset="0.62" stop-color="#b5ff52"/><stop offset="0.713" stop-color="#cfff3b"/><stop offset="0.767" stop-color="#dcff21"/><stop offset="0.775" stop-color="#deff19"/><stop offset="0.791" stop-color="#e2ff00"/><stop offset="0.915" stop-color="#ffff00"/><stop offset="1" stop-color="#ffee00"/></linearGradient>
<linearGradient id="i54"><stop offset="0" stop-color="#00ffba"/><stop offset="0.183" stop-color="#00ffa1"/><stop offset="0.251" stop-color="#00ff91"/><stop offset="0.312" stop-color="#00ff7d"/><stop offset="0.319" stop-color="#1aff7b"/><stop offset="0.327" stop-color="#2cff7a"/><stop offset="0.342" stop-color="#40ff79"/><stop offset="0.357" stop-color="#4eff77"/><stop offset="0.411" stop-color="#6fff72"/><stop offset="0.494" stop-color="#92ff68"/><stop offset="0.631" stop-color="#beff52"/><stop offset="0.722" stop-color="#d7ff3a"/><stop offset="0.768" stop-color="#e2ff23"/><stop offset="0.783" stop-color="#e6ff12"/><stop offset="0.791" stop-color="#e8ff00"/><stop offset="0.89" stop-color="#fffe00"/><stop offset="1" stop-color="#ffe900"/></linearGradient>
<linearGradient id="i55"><stop offset="0" stop-color="#00ffbb"/><stop offset="0.18" stop-color="#00ffa2"/><stop offset="0.247" stop-color="#00ff92"/><stop offset="0.307" stop-color="#00ff7e"/><stop offset="0.315" stop-color="#25ff7d"/><stop offset="0.33" stop-color="#3cff7c"/><stop offset="0.345" stop-color="#4bff7a"/><stop offset="0.404" stop-color="#71ff75"/><stop offset="0.487" stop-color="#94ff6b"/><stop offset="0.629" stop-color="#c2ff55"/><stop offset="0.727" stop-color="#dcff3b"/><stop offset="0.757" stop-color="#e4ff2e"/><stop offset="0.779" stop-color="#eaff1f"/><stop offset="0.787" stop-color="#ecff17"/><stop offset="0.794" stop-color="#eeff00"/><stop offset="0.869" stop-color="#fffe00"/><stop offset="1" stop-color="#ffe500"/></linearGradient>
<linearGradient id="i56"><stop offset="0" stop-color="#00ffbc"/><stop offset="0.176" stop-color="#00ffa4"/><stop offset="0.243" stop-color="#00ff94"/><stop offset="0.301" stop-color="#00ff81"/><stop offset="0.309" stop-color="#25ff80"/><stop offset="0.324" stop-color="#3cff7f"/><stop offset="0.346" stop-color="#51ff7d"/><stop offset="0.404" stop-color="#75ff77"/><stop offset="0.493" stop-color="#9aff6d"/><stop offset="0.632" stop-color="#c7ff56"/><stop offset="0.728" stop-color="#e1ff3e"/><stop offset="0.779" stop-color="#efff25"/><stop offset="0.794" stop-color="#f2ff15"/><stop offset="0.801" stop-color="#f4ff00"/><stop offset="0.846" stop-color="#ffff00"/><stop offset="1" stop-color="#ffe100"/></linearGradient>
<linearGradient id="i57"><stop offset="0" stop-color="#00ffbd"/><stop offset="0.174" stop-color="#00ffa5"/><stop offset="0.29" stop-color="#00ff85"/><stop offset="0.297" stop-color="#1cff83"/><stop offset="0.304" stop-color="#2dff82"/><stop offset="0.319" stop-color="#41ff81"/><stop offset="0.341" stop-color="#55ff7f"/><stop offset="0.399" stop-color="#78ff79"/><stop offset="0.493" stop-color="#9fff6f"/><stop offset="0.63" stop-color="#cbff59"/><stop offset="0.732" stop-color="#e7ff3f"/><stop offset="0.783" stop-color="#f4ff27"/><stop offset="0.797" stop-color="#f8ff19"/><stop offset="0.804" stop-color="#faff08"/><stop offset="0.812" stop-color="#fcff00"/><stop offset="1" stop-color="#ffdc00"/></linearGradient>
<linearGradient id="i58"><stop offset="0" stop-color="#00ffbe"/><stop offset="0.17" stop-color="#00ffa6"/><stop offset="0.284" stop-color="#00ff87"/><stop offset="0.291" stop-color="#1cff86"/><stop offset="0.298" stop-color="#2eff85"/><stop offset="0.312" stop-color="#41ff84"/><stop offset="0.333" stop-color="#55ff82"/><stop offset="0.404" stop-color="#7fff7b"/><stop offset="0.504" stop-color="#a7ff6f"/><stop offset="0.638" stop-color="#d2ff5a"/><stop offset="0.738" stop-color="#eeff3f"/><stop offset="0.773" stop-color="#f7ff30"/><stop offset="0.794" stop-color="#fdff20"/><stop offset="0.801" stop-color="#ffff18"/><stop offset="0.809" stop-color="#fffd00"/><stop offset="1" stop-color="#ffd800"/></linearGradient>
<linearGradient id="i59"><stop offset="0" stop-color="#00ffbf"/><stop offset="0.168" stop-color="#00ffa7"/><stop offset="0.28" stop-color="#00ff89"/><stop offset="0.287" stop-color="#27ff88"/><stop offset="0.294" stop-color="#34ff87"/><stop offset="0.308" stop-color="#46ff86"/><stop offset="0.329" stop-color="#58ff84"/><stop offset="0.399" stop-color="#81ff7e"/><stop offset="0.503" stop-color="#acff71"/><stop offset="0.643" stop-color="#d8ff5b"/><stop offset="0.741" stop-color="#f4ff41"/><stop offset="0.776" stop-color="#fdff32"/><stop offset="0.797" stop-color="#fffb23"/><stop offset="0.804" stop-color="#fff91b"/><stop offset="0.818" stop-color="#fff600"/><stop offset="1" stop-color="#ffd400"/></linearGradient>
<linearGradient id="i60"><stop offset="0" stop-color="#00ffc0"/><stop offset="0.159" stop-color="#00ffaa"/><stop offset="0.269" stop-color="#00ff8c"/><stop offset="0.276" stop-color="#1eff8b"/><stop offset="0.283" stop-color="#2eff8a"/><stop offset="0.297" stop-color="#42ff89"/><stop offset="0.324" stop-color="#5bff87"/><stop offset="0.4" stop-color="#87ff80"/><stop offset="0.51" stop-color="#b2ff73"/><stop offset="0.648" stop-color="#deff5c"/><stop offset="0.745" stop-color="#faff42"/><stop offset="0.766" stop-color="#ffff3a"/><stop offset="0.8" stop-color="#fff624"/><stop offset="0.814" stop-color="#fff214"/><stop offset="0.821" stop-color="#fff100"/><stop offset="1" stop-color="#ffd000"/></linearGradient>
<linearGradient id="i61"><stop offset="0" stop-color="#00ffc1"/><stop offset="0.155" stop-color="#00ffac"/><stop offset="0.264" stop-color="#00ff8f"/><stop offset="0.27" stop-color="#1eff8d"/><stop offset="0.284" stop-color="#3aff8c"/><stop offset="0.304" stop-color="#50ff8b"/><stop offset="0.324" stop-color="#61ff89"/><stop offset="0.405" stop-color="#8eff81"/><stop offset="0.52" stop-color="#baff74"/><stop offset="0.649" stop-color="#e3ff5e"/><stop offset="0.743" stop-color="#ffff45"/><stop offset="0.804" stop-color="#ffef23"/><stop offset="0.818" stop-color="#ffec12"/><stop offset="0.824" stop-color="#ffeb00"/><stop offset="1" stop-color="#ffcc00"/></linearGradient>
<linearGradient id="i62"><stop offset="0" stop-color="#00ffc2"/><stop offset="0.147" stop-color="#00ffae"/><stop offset="0.253" stop-color="#00ff93"/><stop offset="0.26" stop-color="#0bff90"/><stop offset="0.267" stop-color="#28ff90"/><stop offset="0.287" stop-color="#47ff8e"/><stop offset="0.32" stop-color="#63ff8b"/><stop offset="0.36" stop-color="#7cff88"/><stop offset="0.42" stop-color="#99ff82"/><stop offset="0.5" stop-color="#b8ff78"/><stop offset="0.633" stop-color="#e3ff63"/><stop offset="0.727" stop-color="#ffff4d"/><stop offset="0.773" stop-color="#fff239"/><stop offset="0.807" stop-color="#ffea24"/><stop offset="0.82" stop-color="#ffe716"/><stop offset="0.827" stop-color="#ffe600"/><stop offset="1" stop-color="#ffc800"/></linearGradient>
<linearGradient id="i63"><stop offset="0" stop-color="#00ffc4"/><stop offset="0.144" stop-color="#00ffb0"/><stop offset="0.249" stop-color="#00ff95"/><stop offset="0.256" stop-color="#0dff93"/><stop offset="0.262" stop-color="#29ff92"/><stop offset="0.282" stop-color="#47ff91"/><stop offset="0.315" stop-color="#64ff8e"/><stop offset="0.354" stop-color="#7dff8b"/><stop offset="0.413" stop-color="#99ff85"/><stop offset="0.492" stop-color="#b8ff7c"/><stop offset="0.616" stop-color="#e2ff69"/><stop offset="0.708" stop-color="#feff55"/><stop offset="0.767" stop-color="#fff03e"/><stop offset="0.807" stop-color="#ffe628"/><stop offset="0.826" stop-color="#ffe114"/><stop offset="0.833" stop-color="#ffe000"/><stop offset="1" stop-color="#ffc500"/></linearGradient>
<linearGradient id="i64"><stop offset="0" stop-color="#00ffc5"/><stop offset="0.142" stop-color="#00ffb1"/><stop offset="0.246" stop-color="#00ff96"/><stop offset="0.252" stop-color="#20ff95"/><stop offset="0.259" stop-color="#30ff95"/><stop offset="0.272" stop-color="#44ff94"/><stop offset="0.304" stop-color="#62ff91"/><stop offset="0.343" stop-color="#7bff8e"/><stop offset="0.401" stop-color="#98ff88"/><stop offset="0.479" stop-color="#b8ff7f"/><stop offset="0.595" stop-color="#e0ff6f"/><stop offset="0.693" stop-color="#feff5c"/><stop offset="0.757" stop-color="#ffee43"/><stop offset="0.803" stop-color="#ffe22d"/><stop offset="0.822" stop-color="#ffde1f"/><stop offset="0.828" stop-color="#ffdd17"/><stop offset="0.835" stop-color="#ffdb07"/><stop offset="0.841" stop-color="#ffda00"/><stop offset="1" stop-color="#ffc100"/></linearGradient>
<linearGradient id="i65"><stop offset="0" stop-color="#00ffc6"/><stop offset="0.134" stop-color="#00ffb3"/><stop offset="0.236" stop-color="#00ff9a"/><stop offset="0.242" stop-color="#10ff98"/><stop offset="0.248" stop-color="#2aff97"/><stop offset="0.268" stop-color="#48ff96"/><stop offset="0.299" stop-color="#65ff93"/><stop offset="0.338" stop-color="#7eff90"/><stop offset="0.465" stop-color="#b8ff83"/><stop offset="0.675" stop-color="#ffff62"/><stop offset="0.758" stop-color="#ffe843"/><stop offset="0.803" stop-color="#ffde2e"/><stop offset="0.828" stop-color="#ffd81a"/><stop offset="0.841" stop-color="#ffd500"/><stop offset="1" stop-color="#ffbd00"/></linearGradient>
<linearGradient id="i66"><stop offset="0" stop-color="#00ffc7"/><stop offset="0.132" stop-color="#00ffb5"/><stop offset="0.232" stop-color="#00ff9c"/><stop offset="0.238" stop-color="#11ff9a"/><stop offset="0.245" stop-color="#2aff9a"/><stop offset="0.257" stop-color="#40ff99"/><stop offset="0.282" stop-color="#5bff97"/><stop offset="0.326" stop-color="#7aff93"/><stop offset="0.382" stop-color="#98ff8e"/><stop offset="0.451" stop-color="#b6ff87"/><stop offset="0.658" stop-color="#feff68"/><stop offset="0.746" stop-color="#ffe749"/><stop offset="0.803" stop-color="#ffda30"/><stop offset="0.834" stop-color="#ffd318"/><stop offset="0.846" stop-color="#ffd000"/><stop offset="1" stop-color="#ffba00"/></linearGradient>
<linearGradient id="i67"><stop offset="0" stop-color="#00ffc8"/><stop offset="0.13" stop-color="#00ffb6"/><stop offset="0.229" stop-color="#00ff9e"/><stop offset="0.235" stop-color="#21ff9d"/><stop offset="0.241" stop-color="#31ff9c"/><stop offset="0.254" stop-color="#45ff9b"/><stop offset="0.285" stop-color="#63ff99"/><stop offset="0.322" stop-color="#7dff96"/><stop offset="0.446" stop-color="#b8ff8a"/><stop offset="0.644" stop-color="#feff6d"/><stop offset="0.749" stop-color="#ffe249"/><stop offset="0.805" stop-color="#ffd531"/><stop offset="0.836" stop-color="#ffce1b"/><stop offset="0.842" stop-color="#ffcd12"/><stop offset="0.848" stop-color="#ffcc00"/><stop offset="1" stop-color="#ffb600"/></linearGradient>
<linearGradient id="i68"><stop offset="0" stop-color="#00ffc9"/><stop offset="0.128" stop-color="#00ffb8"/><stop offset="0.225" stop-color="#00ffa0"/><stop offset="0.231" stop-color="#22ff9f"/><stop offset="0.237" stop-color="#32ff9f"/><stop offset="0.249" stop-color="#45ff9e"/><stop offset="0.28" stop-color="#64ff9b"/><stop offset="0.316" stop-color="#7dff98"/><stop offset="0.438" stop-color="#b9ff8d"/><stop offset="0.632" stop-color="#ffff71"/><stop offset="0.748" stop-color="#ffde4a"/><stop offset="0.802" stop-color="#ffd133"/><stop offset="0.839" stop-color="#ffc919"/><stop offset="0.845" stop-color="#ffc810"/><stop offset="0.851" stop-color="#ffc700"/><stop offset="1" stop-color="#ffb300"/></linearGradient>
<linearGradient id="i69"><stop offset="0" stop-color="#00ffca"/><stop offset="0.126" stop-color="#00ffb9"/><stop offset="0.216" stop-color="#00ffa4"/><stop offset="0.228" stop-color="#2bffa1"/><stop offset="0.24" stop-color="#42ffa1"/><stop offset="0.264" stop-color="#5dff9f"/><stop offset="0.306" stop-color="#7cff9b"/><stop offset="0.36" stop-color="#9aff97"/><stop offset="0.426" stop-color="#b8ff90"/><stop offset="0.613" stop-color="#feff77"/><stop offset="0.739" stop-color="#ffdc4e"/><stop offset="0.805" stop-color="#ffcd34"/><stop offset="0.841" stop-color="#ffc51b"/><stop offset="0.847" stop-color="#ffc414"/><stop offset="0.853" stop-color="#ffc300"/><stop offset="1" stop-color="#ffaf00"/></linearGradient>
<linearGradient id="i70"><stop offset="0" stop-color="#00ffcc"/><stop offset="0.124" stop-color="#00ffbb"/><stop offset="0.213" stop-color="#00ffa6"/><stop offset="0.225" stop-color="#2cffa4"/><stop offset="0.237" stop-color="#42ffa3"/><stop offset="0.26" stop-color="#5dffa1"/><stop offset="0.302" stop-color="#7dff9e"/><stop offset="0.355" stop-color="#9bff9a"/><stop offset="0.42" stop-color="#b9ff93"/><stop offset="0.604" stop-color="#ffff7b"/><stop offset="0.698" stop-color="#ffe25d"/><stop offset="0.811" stop-color="#ffc832"/><stop offset="0.846" stop-color="#ffc11a"/><stop offset="0.852" stop-color="#ffbf12"/><stop offset="0.858" stop-color="#ffbe00"/><stop offset="1" stop-color="#ffac00"/></linearGradient>
<linearGradient id="i71"><stop offset="0" stop-color="#00ffcd"/><stop offset="0.123" stop-color="#00ffbc"/><stop offset="0.211" stop-color="#00ffa7"/><stop offset="0.216" stop-color="#24ffa7"/><stop offset="0.228" stop-color="#3effa6"/><stop offset="0.251" stop-color="#5bffa4"/><stop offset="0.292" stop-color="#7bffa1"/><stop offset="0.345" stop-color="#9aff9d"/><stop offset="0.409" stop-color="#b9ff97"/><stop offset="0.591" stop-color="#ffff80"/><stop offset="0.69" stop-color="#ffe060"/><stop offset="0.807" stop-color="#ffc536"/><stop offset="0.848" stop-color="#ffbd1c"/><stop offset="0.854" stop-color="#ffbb15"/><stop offset="0.86" stop-color="#ffba05"/><stop offset="0.865" stop-color="#ffb900"/><stop offset="1" stop-color="#ffa800"/></linearGradient>
<linearGradient id="i72"><stop offset="0" stop-color="#00ffce"/><stop offset="0.115" stop-color="#00ffbf"/><stop offset="0.202" stop-color="#00ffab"/><stop offset="0.213" stop-color="#2dffa9"/><stop offset="0.225" stop-color="#43ffa8"/><stop offset="0.248" stop-color="#5effa6"/><stop offset="0.288" stop-color="#7effa3"/><stop offset="0.34" stop-color="#9dff9f"/><stop offset="0.403" stop-color="#bbff99"/><stop offset="0.576" stop-color="#fffe84"/><stop offset="0.68" stop-color="#ffde63"/><stop offset="0.807" stop-color="#ffc136"/><stop offset="0.847" stop-color="#ffb91e"/><stop offset="0.859" stop-color="#ffb60e"/><stop offset="0.865" stop-color="#ffb600"/><stop offset="1" stop-color="#ffa500"/></linearGradient>
<linearGradient id="i73"><stop offset="0" stop-color="#00ffcf"/><stop offset="0.114" stop-color="#00ffc0"/><stop offset="0.199" stop-color="#00ffad"/><stop offset="0.21" stop-color="#2dffab"/><stop offset="0.222" stop-color="#43ffab"/><stop offset="0.244" stop-color="#5fffa9"/><stop offset="0.278" stop-color="#7bffa6"/><stop offset="0.324" stop-color="#97ffa3"/><stop offset="0.386" stop-color="#b7ff9d"/><stop offset="0.562" stop-color="#ffff89"/><stop offset="0.676" stop-color="#ffdb64"/><stop offset="0.807" stop-color="#ffbd38"/><stop offset="0.852" stop-color="#ffb41d"/><stop offset="0.858" stop-color="#ffb316"/><stop offset="0.869" stop-color="#ffb100"/><stop offset="1" stop-color="#ffa100"/></linearGradient>
<linearGradient id="i74"><stop offset="0" stop-color="#00ffd0"/><stop offset="0.112" stop-color="#00ffc2"/><stop offset="0.197" stop-color="#00ffaf"/><stop offset="0.202" stop-color="#25ffae"/><stop offset="0.213" stop-color="#3fffad"/><stop offset="0.236" stop-color="#5cffac"/><stop offset="0.27" stop-color="#79ffa9"/><stop offset="0.315" stop-color="#96ffa6"/><stop offset="0.376" stop-color="#b6ffa1"/><stop offset="0.551" stop-color="#ffff8d"/><stop offset="0.669" stop-color="#ffd967"/><stop offset="0.815" stop-color="#ffb835"/><stop offset="0.854" stop-color="#ffb01e"/><stop offset="0.865" stop-color="#ffae10"/><stop offset="0.871" stop-color="#ffad00"/><stop offset="1" stop-color="#ff9e00"/></linearGradient>
<linearGradient id="i75"><stop offset="0" stop-color="#00ffd2"/><stop offset="0.11" stop-color="#00ffc4"/><stop offset="0.193" stop-color="#00ffb1"/><stop offset="0.199" stop-color="#26ffb0"/><stop offset="0.21" stop-color="#40ffb0"/><stop offset="0.232" stop-color="#5dffae"/><stop offset="0.265" stop-color="#7affac"/><stop offset="0.309" stop-color="#97ffa9"/><stop offset="0.37" stop-color="#b7ffa3"/><stop offset="0.536" stop-color="#feff91"/><stop offset="0.663" stop-color="#ffd769"/><stop offset="0.812" stop-color="#ffb437"/><stop offset="0.856" stop-color="#ffac1d"/><stop offset="0.867" stop-color="#ffaa0e"/><stop offset="0.873" stop-color="#ffa900"/><stop offset="1" stop-color="#ff9b00"/></linearGradient>
<linearGradient id="i76"><stop offset="0" stop-color="#00ffd3"/><stop offset="0.104" stop-color="#00ffc6"/><stop offset="0.186" stop-color="#00ffb4"/><stop offset="0.197" stop-color="#2fffb3"/><stop offset="0.208" stop-color="#45ffb2"/><stop offset="0.23" stop-color="#60ffb1"/><stop offset="0.262" stop-color="#7cffae"/><stop offset="0.361" stop-color="#b7ffa7"/><stop offset="0.525" stop-color="#feff95"/><stop offset="0.656" stop-color="#ffd56b"/><stop offset="0.814" stop-color="#ffb137"/><stop offset="0.858" stop-color="#ffa81f"/><stop offset="0.869" stop-color="#ffa612"/><stop offset="0.874" stop-color="#ffa500"/><stop offset="1" stop-color="#ff9800"/></linearGradient>
<linearGradient id="i77"><stop offset="0" stop-color="#00ffd4"/><stop offset="0.103" stop-color="#00ffc7"/><stop offset="0.184" stop-color="#00ffb6"/><stop offset="0.189" stop-color="#27ffb5"/><stop offset="0.2" stop-color="#41ffb5"/><stop offset="0.222" stop-color="#5effb3"/><stop offset="0.254" stop-color="#7bffb1"/><stop offset="0.297" stop-color="#98ffae"/><stop offset="0.351" stop-color="#b6ffaa"/><stop offset="0.514" stop-color="#ffff99"/><stop offset="0.643" stop-color="#ffd46f"/><stop offset="0.816" stop-color="#ffad37"/><stop offset="0.859" stop-color="#ffa520"/><stop offset="0.87" stop-color="#ffa315"/><stop offset="0.881" stop-color="#ffa100"/><stop offset="1" stop-color="#ff9400"/></linearGradient>
<linearGradient id="i78"><stop offset="0" stop-color="#00ffd5"/><stop offset="0.101" stop-color="#00ffc9"/><stop offset="0.181" stop-color="#00ffb8"/><stop offset="0.187" stop-color="#27ffb8"/><stop offset="0.197" stop-color="#41ffb7"/><stop offset="0.219" stop-color="#5effb6"/><stop offset="0.251" stop-color="#7cffb4"/><stop offset="0.293" stop-color="#99ffb1"/><stop offset="0.347" stop-color="#b7ffad"/><stop offset="0.501" stop-color="#feff9d"/><stop offset="0.64" stop-color="#ffd171"/><stop offset="0.816" stop-color="#ffa939"/><stop offset="0.864" stop-color="#ffa11f"/><stop offset="0.875" stop-color="#ff9f14"/><stop offset="0.88" stop-color="#ff9e03"/><stop offset="0.885" stop-color="#ff9d00"/><stop offset="1" stop-color="#ff9100"/></linearGradient>
<linearGradient id="i79"><stop offset="0" stop-color="#00ffd7"/><stop offset="0.1" stop-color="#00ffcb"/><stop offset="0.174" stop-color="#00ffbb"/><stop offset="0.179" stop-color="#1cffba"/><stop offset="0.184" stop-color="#30ffba"/><stop offset="0.195" stop-color="#46ffb9"/><stop offset="0.216" stop-color="#62ffb8"/><stop offset="0.242" stop-color="#7affb7"/><stop offset="0.284" stop-color="#98ffb4"/><stop offset="0.337" stop-color="#b7ffb0"/><stop offset="0.489" stop-color="#feffa1"/><stop offset="0.632" stop-color="#ffcf73"/><stop offset="0.816" stop-color="#ffa639"/><stop offset="0.863" stop-color="#ff9d20"/><stop offset="0.874" stop-color="#ff9b16"/><stop offset="0.884" stop-color="#ff9900"/><stop offset="1" stop-color="#ff8e00"/></linearGradient>
<linearGradient id="i80"><stop offset="0" stop-color="#00ffd8"/><stop offset="0.099" stop-color="#00ffcc"/><stop offset="0.171" stop-color="#00ffbe"/><stop offset="0.177" stop-color="#1dffbd"/><stop offset="0.182" stop-color="#31ffbd"/><stop offset="0.192" stop-color="#47ffbc"/><stop offset="0.213" stop-color="#62ffbb"/><stop offset="0.239" stop-color="#7bffb9"/><stop offset="0.281" stop-color="#99ffb6"/><stop offset="0.332" stop-color="#b8ffb3"/><stop offset="0.483" stop-color="#fffea4"/><stop offset="0.629" stop-color="#ffcd74"/><stop offset="0.821" stop-color="#ffa138"/><stop offset="0.868" stop-color="#ff991f"/><stop offset="0.878" stop-color="#ff9715"/><stop offset="0.888" stop-color="#ff9500"/><stop offset="1" stop-color="#ff8b00"/></linearGradient>
<linearGradient id="i81"><stop offset="0" stop-color="#00ffd9"/><stop offset="0.098" stop-color="#00ffce"/><stop offset="0.17" stop-color="#00ffc0"/><stop offset="0.175" stop-color="#29ffbf"/><stop offset="0.185" stop-color="#42ffbf"/><stop offset="0.206" stop-color="#60ffbd"/><stop offset="0.237" stop-color="#7dffbc"/><stop offset="0.278" stop-color="#9bffb9"/><stop offset="0.329" stop-color="#baffb5"/><stop offset="0.473" stop-color="#fffea8"/><stop offset="0.54" stop-color="#ffe48f"/><stop offset="0.622" stop-color="#ffca76"/><stop offset="0.823" stop-color="#ff9e38"/><stop offset="0.874" stop-color="#ff941c"/><stop offset="0.884" stop-color="#ff930f"/><stop offset="0.889" stop-color="#ff9200"/><stop offset="1" stop-color="#ff8700"/></linearGradient>
<linearGradient id="i82"><stop offset="0" stop-color="#00ffdb"/><stop offset="0.091" stop-color="#00ffd0"/><stop offset="0.162" stop-color="#00ffc3"/><stop offset="0.168" stop-color="#1effc2"/><stop offset="0.173" stop-color="#32ffc2"/><stop offset="0.183" stop-color="#48ffc1"/><stop offset="0.203" stop-color="#63ffc0"/><stop offset="0.228" stop-color="#7cffbe"/><stop offset="0.315" stop-color="#b7ffb9"/><stop offset="0.457" stop-color="#feffad"/><stop offset="0.533" stop-color="#ffe291"/><stop offset="0.614" stop-color="#ffc878"/><stop offset="0.822" stop-color="#ff9a38"/><stop offset="0.873" stop-color="#ff911d"/><stop offset="0.883" stop-color="#ff8f12"/><stop offset="0.888" stop-color="#ff8e00"/><stop offset="1" stop-color="#ff8400"/></linearGradient>
<linearGradient id="i83"><stop offset="0" stop-color="#00ffdc"/><stop offset="0.16" stop-color="#00ffc5"/><stop offset="0.165" stop-color="#1fffc4"/><stop offset="0.17" stop-color="#32ffc4"/><stop offset="0.18" stop-color="#48ffc4"/><stop offset="0.201" stop-color="#64ffc2"/><stop offset="0.226" stop-color="#7dffc1"/><stop offset="0.311" stop-color="#b8ffbc"/><stop offset="0.451" stop-color="#ffffb0"/><stop offset="0.521" stop-color="#ffe295"/><stop offset="0.607" stop-color="#ffc77a"/><stop offset="0.827" stop-color="#ff9638"/><stop offset="0.877" stop-color="#ff8d1d"/><stop offset="0.887" stop-color="#ff8b11"/><stop offset="0.892" stop-color="#ff8a00"/><stop offset="1" stop-color="#ff8100"/></linearGradient>
<linearGradient id="i84"><stop offset="0" stop-color="#00ffdd"/><stop offset="0.159" stop-color="#00ffc7"/><stop offset="0.164" stop-color="#2bffc7"/><stop offset="0.174" stop-color="#44ffc6"/><stop offset="0.194" stop-color="#61ffc5"/><stop offset="0.218" stop-color="#7bffc4"/><stop offset="0.258" stop-color="#9affc1"/><stop offset="0.308" stop-color="#baffbe"/><stop offset="0.442" stop-color="#fffeb3"/><stop offset="0.516" stop-color="#ffe097"/><stop offset="0.6" stop-color="#ffc57c"/><stop offset="0.829" stop-color="#ff9238"/><stop offset="0.878" stop-color="#ff891e"/><stop offset="0.888" stop-color="#ff8813"/><stop offset="0.898" stop-color="#ff8600"/><stop offset="1" stop-color="#ff7e00"/></linearGradient>
<linearGradient id="i85"><stop offset="0" stop-color="#00ffdf"/><stop offset="0.157" stop-color="#00ffc9"/><stop offset="0.162" stop-color="#2bffc9"/><stop offset="0.172" stop-color="#44ffc9"/><stop offset="0.191" stop-color="#62ffc8"/><stop offset="0.216" stop-color="#7cffc6"/><stop offset="0.25" stop-color="#98ffc4"/><stop offset="0.299" stop-color="#b8ffc1"/><stop offset="0.431" stop-color="#ffffb7"/><stop offset="0.505" stop-color="#ffe09b"/><stop offset="0.593" stop-color="#ffc47f"/><stop offset="0.833" stop-color="#ff8e37"/><stop offset="0.882" stop-color="#ff851d"/><stop offset="0.892" stop-color="#ff8412"/><stop offset="0.897" stop-color="#ff8300"/><stop offset="1" stop-color="#ff7a00"/></linearGradient>
<linearGradient id="i86"><stop offset="0" stop-color="#00ffe0"/><stop offset="0.15" stop-color="#00ffcc"/><stop offset="0.155" stop-color="#21ffcc"/><stop offset="0.16" stop-color="#34ffcc"/><stop offset="0.165" stop-color="#40ffcb"/><stop offset="0.184" stop-color="#60ffca"/><stop offset="0.208" stop-color="#7affc9"/><stop offset="0.242" stop-color="#97ffc7"/><stop offset="0.291" stop-color="#b8ffc5"/><stop offset="0.421" stop-color="#ffffbb"/><stop offset="0.494" stop-color="#ffdf9e"/><stop offset="0.586" stop-color="#ffc280"/><stop offset="0.833" stop-color="#ff8a37"/><stop offset="0.881" stop-color="#ff821e"/><stop offset="0.891" stop-color="#ff8015"/><stop offset="0.901" stop-color="#ff7f00"/><stop offset="1" stop-color="#ff7700"/></linearGradient>
<linearGradient id="i87"><stop offset="0" stop-color="#00ffe2"/><stop offset="0.144" stop-color="#00ffcf"/><stop offset="0.149" stop-color="#0affce"/><stop offset="0.153" stop-color="#2cffce"/><stop offset="0.163" stop-color="#45ffce"/><stop offset="0.182" stop-color="#63ffcd"/><stop offset="0.206" stop-color="#7dffcc"/><stop offset="0.24" stop-color="#99ffca"/><stop offset="0.288" stop-color="#baffc7"/><stop offset="0.412" stop-color="#ffffbe"/><stop offset="0.489" stop-color="#ffdd9f"/><stop offset="0.58" stop-color="#ffc082"/><stop offset="0.695" stop-color="#ffa362"/><stop offset="0.835" stop-color="#ff8737"/><stop offset="0.887" stop-color="#ff7d1b"/><stop offset="0.897" stop-color="#ff7c10"/><stop offset="0.902" stop-color="#ff7b00"/><stop offset="1" stop-color="#ff7300"/></linearGradient>
<linearGradient id="i88"><stop offset="0" stop-color="#00ffe3"/><stop offset="0.142" stop-color="#00ffd2"/><stop offset="0.147" stop-color="#0dffd1"/><stop offset="0.152" stop-color="#2dffd1"/><stop offset="0.161" stop-color="#46ffd0"/><stop offset="0.18" stop-color="#64ffd0"/><stop offset="0.204" stop-color="#7effce"/><stop offset="0.28" stop-color="#b8ffca"/><stop offset="0.403" stop-color="#ffffc2"/><stop offset="0.483" stop-color="#ffdca1"/><stop offset="0.578" stop-color="#ffbd83"/><stop offset="0.692" stop-color="#ffa063"/><stop offset="0.839" stop-color="#ff8337"/><stop offset="0.886" stop-color="#ff7a1e"/><stop offset="0.9" stop-color="#ff780e"/><stop offset="0.905" stop-color="#ff7700"/><stop offset="1" stop-color="#ff7000"/></linearGradient>
<linearGradient id="i89"><stop offset="0" stop-color="#00ffe5"/><stop offset="0.141" stop-color="#00ffd4"/><stop offset="0.146" stop-color="#23ffd3"/><stop offset="0.15" stop-color="#35ffd3"/><stop offset="0.155" stop-color="#41ffd3"/><stop offset="0.174" stop-color="#61ffd2"/><stop offset="0.197" stop-color="#7cffd1"/><stop offset="0.272" stop-color="#b8ffcd"/><stop offset="0.394" stop-color="#ffffc6"/><stop offset="0.474" stop-color="#ffdba4"/><stop offset="0.568" stop-color="#ffbc86"/><stop offset="0.685" stop-color="#ff9e65"/><stop offset="0.84" stop-color="#ff7f37"/><stop offset="0.892" stop-color="#ff761c"/><stop offset="0.901" stop-color="#ff7411"/><stop offset="0.906" stop-color="#ff7300"/><stop offset="1" stop-color="#ff6c00"/></linearGradient>
<linearGradient id="i90"><stop offset="0" stop-color="#00ffe6"/><stop offset="0.139" stop-color="#00ffd6"/><stop offset="0.144" stop-color="#23ffd6"/><stop offset="0.148" stop-color="#36ffd6"/><stop offset="0.153" stop-color="#42ffd6"/><stop offset="0.171" stop-color="#62ffd5"/><stop offset="0.194" stop-color="#7dffd4"/><stop offset="0.269" stop-color="#b9ffd0"/><stop offset="0.384" stop-color="#feffca"/><stop offset="0.468" stop-color="#ffdaa6"/><stop offset="0.565" stop-color="#ffb987"/><stop offset="0.685" stop-color="#ff9b65"/><stop offset="0.843" stop-color="#ff7b36"/><stop offset="0.894" stop-color="#ff721b"/><stop offset="0.903" stop-color="#ff7010"/><stop offset="0.907" stop-color="#ff6f00"/><stop offset="1" stop-color="#ff6900"/></linearGradient>
<linearGradient id="i91"><stop offset="0" stop-color="#00ffe8"/><stop offset="0.133" stop-color="#00ffd9"/><stop offset="0.138" stop-color="#12ffd9"/><stop offset="0.142" stop-color="#2effd9"/><stop offset="0.151" stop-color="#48ffd8"/><stop offset="0.165" stop-color="#5fffd8"/><stop offset="0.188" stop-color="#7bffd7"/><stop offset="0.22" stop-color="#99ffd5"/><stop offset="0.261" stop-color="#b8ffd3"/><stop offset="0.376" stop-color="#feffcd"/><stop offset="0.459" stop-color="#ffd9a9"/><stop offset="0.56" stop-color="#ffb788"/><stop offset="0.683" stop-color="#ff9866"/><stop offset="0.844" stop-color="#ff7736"/><stop offset="0.894" stop-color="#ff6e1c"/><stop offset="0.904" stop-color="#ff6c12"/><stop offset="0.913" stop-color="#ff6b00"/><stop offset="1" stop-color="#ff6500"/></linearGradient>
<linearGradient id="i92"><stop offset="0" stop-color="#00ffe9"/><stop offset="0.132" stop-color="#00ffdc"/><stop offset="0.136" stop-color="#25ffdb"/><stop offset="0.145" stop-color="#43ffdb"/><stop offset="0.159" stop-color="#5cffda"/><stop offset="0.182" stop-color="#7affda"/><stop offset="0.214" stop-color="#98ffd8"/><stop offset="0.255" stop-color="#b8ffd7"/><stop offset="0.368" stop-color="#ffffd1"/><stop offset="0.477" stop-color="#ffcea2"/><stop offset="0.623" stop-color="#ffa376"/><stop offset="0.782" stop-color="#ff804b"/><stop offset="0.855" stop-color="#ff7233"/><stop offset="0.9" stop-color="#ff6919"/><stop offset="0.909" stop-color="#ff680d"/><stop offset="0.914" stop-color="#ff6700"/><stop offset="1" stop-color="#ff6100"/></linearGradient>
<linearGradient id="i93"><stop offset="0" stop-color="#00ffeb"/><stop offset="0.13" stop-color="#00ffde"/><stop offset="0.135" stop-color="#25ffde"/><stop offset="0.143" stop-color="#44ffde"/><stop offset="0.157" stop-color="#5dffdd"/><stop offset="0.179" stop-color="#7affdc"/><stop offset="0.211" stop-color="#99ffdb"/><stop offset="0.251" stop-color="#b9ffd9"/><stop offset="0.363" stop-color="#fffed3"/><stop offset="0.471" stop-color="#ffcda4"/><stop offset="0.614" stop-color="#ffa178"/><stop offset="0.852" stop-color="#ff6e34"/><stop offset="0.897" stop-color="#ff661d"/><stop offset="0.906" stop-color="#ff6413"/><stop offset="0.915" stop-color="#ff6300"/><stop offset="1" stop-color="#ff5e00"/></linearGradient>
<linearGradient id="i94"><stop offset="0" stop-color="#00ffec"/><stop offset="0.124" stop-color="#00ffe1"/><stop offset="0.133" stop-color="#30ffe0"/><stop offset="0.142" stop-color="#49ffe0"/><stop offset="0.156" stop-color="#61ffe0"/><stop offset="0.178" stop-color="#7effdf"/><stop offset="0.244" stop-color="#b8ffdd"/><stop offset="0.351" stop-color="#feffd8"/><stop offset="0.462" stop-color="#ffcca7"/><stop offset="0.604" stop-color="#ffa07b"/><stop offset="0.853" stop-color="#ff6b34"/><stop offset="0.902" stop-color="#ff611a"/><stop offset="0.911" stop-color="#ff5f0f"/><stop offset="0.916" stop-color="#ff5f00"/><stop offset="1" stop-color="#ff5a00"/></linearGradient>
<linearGradient id="i95"><stop offset="0" stop-color="#00ffee"/><stop offset="0.123" stop-color="#00ffe4"/><stop offset="0.132" stop-color="#31ffe3"/><stop offset="0.141" stop-color="#4affe3"/><stop offset="0.154" stop-color="#62ffe2"/><stop offset="0.176" stop-color="#7effe2"/><stop offset="0.242" stop-color="#b9ffe0"/><stop offset="0.347" stop-color="#fffedb"/><stop offset="0.453" stop-color="#ffccab"/><stop offset="0.598" stop-color="#ff9f7d"/><stop offset="0.778" stop-color="#ff764d"/><stop offset="0.857" stop-color="#ff6634"/><stop offset="0.901" stop-color="#ff5d1d"/><stop offset="0.91" stop-color="#ff5c14"/><stop offset="0.919" stop-color="#ff5a00"/><stop offset="1" stop-color="#ff5600"/></linearGradient>
<linearGradient id="i96"><stop offset="0" stop-color="#00ffef"/><stop offset="0.122" stop-color="#00ffe6"/><stop offset="0.126" stop-color="#27ffe6"/><stop offset="0.135" stop-color="#45ffe6"/><stop offset="0.148" stop-color="#5fffe5"/><stop offset="0.17" stop-color="#7dffe5"/><stop offset="0.2" stop-color="#9cffe4"/><stop offset="0.235" stop-color="#b9ffe3"/><stop offset="0.34" stop-color="#fffede"/><stop offset="0.388" stop-color="#ffe4c5"/><stop offset="0.444" stop-color="#ffcbad"/><stop offset="0.588" stop-color="#ff9e80"/><stop offset="0.78" stop-color="#ff724d"/><stop offset="0.858" stop-color="#ff6234"/><stop offset="0.906" stop-color="#ff581a"/><stop offset="0.915" stop-color="#ff5610"/><stop offset="0.919" stop-color="#ff5600"/><stop offset="1" stop-color="#ff5100"/></linearGradient>
<linearGradient id="i97"><stop offset="0" stop-color="#00fff1"/><stop offset="0.116" stop-color="#00ffe9"/><stop offset="0.125" stop-color="#32ffe9"/><stop offset="0.134" stop-color="#4bffe8"/><stop offset="0.147" stop-color="#63ffe8"/><stop offset="0.168" stop-color="#80ffe7"/><stop offset="0.233" stop-color="#bcffe6"/><stop offset="0.332" stop-color="#fffee1"/><stop offset="0.379" stop-color="#ffe3c8"/><stop offset="0.435" stop-color="#ffcab0"/><stop offset="0.582" stop-color="#ff9c81"/><stop offset="0.78" stop-color="#ff6e4d"/><stop offset="0.858" stop-color="#ff5e34"/><stop offset="0.905" stop-color="#ff541b"/><stop offset="0.914" stop-color="#ff5212"/><stop offset="0.922" stop-color="#ff5100"/><stop offset="1" stop-color="#ff4d00"/></linearGradient>
<linearGradient id="i98"><stop offset="0" stop-color="#00fff3"/><stop offset="0.115" stop-color="#00ffec"/><stop offset="0.124" stop-color="#32ffeb"/><stop offset="0.128" stop-color="#41ffeb"/><stop offset="0.141" stop-color="#5dffeb"/><stop offset="0.162" stop-color="#7cffea"/><stop offset="0.192" stop-color="#9cffea"/><stop offset="0.226" stop-color="#b9ffe9"/><stop offset="0.324" stop-color="#ffffe6"/><stop offset="0.371" stop-color="#ffe4cc"/><stop offset="0.426" stop-color="#ffcbb3"/><stop offset="0.571" stop-color="#ff9b84"/><stop offset="0.857" stop-color="#ff5a35"/><stop offset="0.904" stop-color="#ff501e"/><stop offset="0.917" stop-color="#ff4d11"/><stop offset="0.925" stop-color="#ff4c00"/><stop offset="1" stop-color="#ff4800"/></linearGradient>
<linearGradient id="i99"><stop offset="0" stop-color="#00fff4"/><stop offset="0.114" stop-color="#00ffee"/><stop offset="0.118" stop-color="#29ffee"/><stop offset="0.127" stop-color="#47ffee"/><stop offset="0.14" stop-color="#61ffee"/><stop offset="0.156" stop-color="#7affed"/><stop offset="0.186" stop-color="#9affed"/><stop offset="0.22" stop-color="#b9ffec"/><stop offset="0.317" stop-color="#fffee9"/><stop offset="0.364" stop-color="#ffe3cf"/><stop offset="0.419" stop-color="#ffcab6"/><stop offset="0.562" stop-color="#ff9a87"/><stop offset="0.858" stop-color="#ff5635"/><stop offset="0.909" stop-color="#ff4a1c"/><stop offset="0.918" stop-color="#ff4813"/><stop offset="0.926" stop-color="#ff4600"/><stop offset="1" stop-color="#ff4300"/></linearGradient>
<linearGradient id="i100"><stop offset="0" stop-color="#00fff6"/><stop offset="0.113" stop-color="#00fff1"/><stop offset="0.117" stop-color="#2afff1"/><stop offset="0.121" stop-color="#3bfff1"/><stop offset="0.134" stop-color="#5afff1"/><stop offset="0.154" stop-color="#7afff0"/><stop offset="0.18" stop-color="#97fff0"/><stop offset="0.213" stop-color="#b6ffef"/><stop offset="0.309" stop-color="#ffffed"/><stop offset="0.355" stop-color="#ffe3d3"/><stop offset="0.409" stop-color="#ffcaba"/><stop offset="0.551" stop-color="#ff9a8a"/><stop offset="0.856" stop-color="#ff5236"/><stop offset="0.906" stop-color="#ff451e"/><stop offset="0.919" stop-color="#ff4212"/><stop offset="0.927" stop-color="#ff4000"/><stop offset="1" stop-color="#ff3d00"/></linearGradient>
<linearGradient id="i101"><stop offset="0" stop-color="#00fff8"/><stop offset="0.108" stop-color="#00fff4"/><stop offset="0.116" stop-color="#34fff4"/><stop offset="0.12" stop-color="#42fff4"/><stop offset="0.133" stop-color="#5ffff3"/><stop offset="0.153" stop-color="#7efff3"/><stop offset="0.211" stop-color="#b9fff2"/><stop offset="0.302" stop-color="#fffff1"/><stop offset="0.348" stop-color="#ffe3d5"/><stop offset="0.402" stop-color="#ffc9bc"/><stop offset="0.538" stop-color="#ff9a8d"/><stop offset="0.857" stop-color="#ff4d37"/><stop offset="0.911" stop-color="#ff3e1c"/><stop offset="0.923" stop-color="#ff3b0e"/><stop offset="0.928" stop-color="#ff3a00"/><stop offset="1" stop-color="#ff3700"/></linearGradient>
<linearGradient id="i102"><stop offset="0" stop-color="#00fffa"/><stop offset="0.107" stop-color="#00fff7"/><stop offset="0.111" stop-color="#2bfff7"/><stop offset="0.115" stop-color="#3cfff7"/><stop offset="0.127" stop-color="#5bfff6"/><stop offset="0.148" stop-color="#7cfff6"/><stop offset="0.172" stop-color="#99fff6"/><stop offset="0.205" stop-color="#b9fff6"/><stop offset="0.296" stop-color="#fffff4"/><stop offset="0.341" stop-color="#ffe2d8"/><stop offset="0.39" stop-color="#ffcac1"/><stop offset="0.526" stop-color="#ff9a91"/><stop offset="0.858" stop-color="#ff4737"/><stop offset="0.912" stop-color="#ff381d"/><stop offset="0.924" stop-color="#ff3410"/><stop offset="0.928" stop-color="#ff3203"/><stop offset="0.932" stop-color="#ff3200"/><stop offset="1" stop-color="#ff3000"/></linearGradient>
<linearGradient id="i103"><stop offset="0" stop-color="#00fffb"/><stop offset="0.106" stop-color="#00fff9"/><stop offset="0.11" stop-color="#2cfff9"/><stop offset="0.114" stop-color="#3dfff9"/><stop offset="0.126" stop-color="#5cfff9"/><stop offset="0.146" stop-color="#7dfff9"/><stop offset="0.199" stop-color="#b6fff9"/><stop offset="0.289" stop-color="#fefff8"/><stop offset="0.333" stop-color="#ffe3dc"/><stop offset="0.382" stop-color="#ffcac4"/><stop offset="0.508" stop-color="#ff9c96"/><stop offset="0.862" stop-color="#ff4136"/><stop offset="0.915" stop-color="#ff2f1d"/><stop offset="0.927" stop-color="#ff2a0f"/><stop offset="0.931" stop-color="#ff2900"/><stop offset="1" stop-color="#ff2700"/></linearGradient>
<linearGradient id="i104"><stop offset="0" stop-color="#00fffd"/><stop offset="0.102" stop-color="#00fffc"/><stop offset="0.106" stop-color="#1ffffc"/><stop offset="0.11" stop-color="#36fffc"/><stop offset="0.114" stop-color="#44fffc"/><stop offset="0.126" stop-color="#61fffc"/><stop offset="0.142" stop-color="#7bfffc"/><stop offset="0.195" stop-color="#b6fffc"/><stop offset="0.285" stop-color="#fffffc"/><stop offset="0.37" stop-color="#ffcdca"/><stop offset="0.484" stop-color="#ffa29f"/><stop offset="0.866" stop-color="#ff3c38"/><stop offset="0.923" stop-color="#ff261d"/><stop offset="0.935" stop-color="#ff1e11"/><stop offset="0.943" stop-color="#ff1a00"/><stop offset="1" stop-color="#ff1900"/></linearGradient>
<linearGradient id="i105"><stop offset="0" stop-color="#00ffff"/><stop offset="0.103" stop-color="#00ffff"/><stop offset="0.107" stop-color="#20ffff"/><stop offset="0.111" stop-color="#37ffff"/><stop offset="0.115" stop-color="#45ffff"/><stop offset="0.127" stop-color="#61ffff"/><stop offset="0.144" stop-color="#7cffff"/><stop offset="0.168" stop-color="#9affff"/><stop offset="0.201" stop-color="#baffff"/><stop offset="0.287" stop-color="#fffdfe"/><stop offset="0.37" stop-color="#ffcdce"/><stop offset="0.48" stop-color="#ffa2a3"/><stop offset="0.858" stop-color="#ff3e40"/><stop offset="0.932" stop-color="#ff1f24"/><stop offset="0.945" stop-color="#ff141d"/><stop offset="0.949" stop-color="#ff0e1a"/><stop offset="0.953" stop-color="#ff0017"/><stop offset="1" stop-color="#ff0017"/></linearGradient>
<linearGradient id="i106"><stop offset="0" stop-color="#00fdff"/><stop offset="0.104" stop-color="#00fcff"/><stop offset="0.108" stop-color="#2dfcff"/><stop offset="0.113" stop-color="#3efcff"/><stop offset="0.125" stop-color="#5dfcff"/><stop offset="0.146" stop-color="#7efcff"/><stop offset="0.171" stop-color="#9bfbff"/><stop offset="0.204" stop-color="#bbfbff"/><stop offset="0.292" stop-color="#fffafe"/><stop offset="0.379" stop-color="#ffc9cd"/><stop offset="0.5" stop-color="#ff9ca0"/><stop offset="0.858" stop-color="#ff3e46"/><stop offset="0.929" stop-color="#ff2130"/><stop offset="0.946" stop-color="#ff1229"/><stop offset="0.954" stop-color="#ff0027"/><stop offset="1" stop-color="#ff0026"/></linearGradient>
<linearGradient id="i107"><stop offset="0" stop-color="#00fbff"/><stop offset="0.101" stop-color="#00f9ff"/><stop offset="0.105" stop-color="#21f9ff"/><stop offset="0.11" stop-color="#37f9ff"/><stop offset="0.114" stop-color="#44f9ff"/><stop offset="0.127" stop-color="#60f9ff"/><stop offset="0.143" stop-color="#7af9ff"/><stop offset="0.169" stop-color="#98f8ff"/><stop offset="0.203" stop-color="#b8f8ff"/><stop offset="0.295" stop-color="#fff6fe"/><stop offset="0.338" stop-color="#ffdde4"/><stop offset="0.388" stop-color="#ffc4cc"/><stop offset="0.515" stop-color="#ff979f"/><stop offset="0.857" stop-color="#ff3e4b"/><stop offset="0.928" stop-color="#ff2038"/><stop offset="0.945" stop-color="#ff0f32"/><stop offset="0.949" stop-color="#ff0030"/><stop offset="1" stop-color="#ff002f"/></linearGradient>
<linearGradient id="i108"><stop offset="0" stop-color="#00f9ff"/><stop offset="0.103" stop-color="#00f6ff"/><stop offset="0.107" stop-color="#21f6ff"/><stop offset="0.111" stop-color="#37f6ff"/><stop offset="0.115" stop-color="#44f6ff"/><stop offset="0.128" stop-color="#60f6ff"/><stop offset="0.15" stop-color="#7ff6ff"/><stop offset="0.179" stop-color="#a0f5ff"/><stop offset="0.214" stop-color="#bef5ff"/><stop offset="0.303" stop-color="#fff2fd"/><stop offset="0.397" stop-color="#ffc0cb"/><stop offset="0.53" stop-color="#ff939e"/><stop offset="0.855" stop-color="#ff3e51"/><stop offset="0.927" stop-color="#ff203f"/><stop offset="0.944" stop-color="#ff103a"/><stop offset="0.949" stop-color="#ff0038"/><stop offset="1" stop-color="#ff0037"/></linearGradient>
<linearGradient id="i109"><stop offset="0" stop-color="#00f7ff"/><stop offset="0.104" stop-color="#00f3ff"/><stop offset="0.108" stop-color="#2ef3ff"/><stop offset="0.113" stop-color="#3ef3ff"/><stop offset="0.126" stop-color="#5cf3ff"/><stop offset="0.147" stop-color="#7cf3ff"/><stop offset="0.177" stop-color="#9df2ff"/><stop offset="0.212" stop-color="#bbf2ff"/><stop offset="0.307" stop-color="#ffeefe"/><stop offset="0.355" stop-color="#ffd3e2"/><stop offset="0.407" stop-color="#ffbcca"/><stop offset="0.541" stop-color="#ff8f9e"/><stop offset="0.874" stop-color="#ff3751"/><stop offset="0.931" stop-color="#ff1c43"/><stop offset="0.944" stop-color="#ff0d40"/><stop offset="0.948" stop-color="#ff003f"/><stop offset="1" stop-color="#ff003d"/></linearGradient>
<linearGradient id="i110"><stop offset="0" stop-color="#00f6ff"/><stop offset="0.105" stop-color="#00f0ff"/><stop offset="0.11" stop-color="#2ef0ff"/><stop offset="0.114" stop-color="#3ef0ff"/><stop offset="0.127" stop-color="#5bf0ff"/><stop offset="0.149" stop-color="#7bf0ff"/><stop offset="0.175" stop-color="#98efff"/><stop offset="0.211" stop-color="#b7eeff"/><stop offset="0.311" stop-color="#ffecff"/><stop offset="0.412" stop-color="#ffbacc"/><stop offset="0.548" stop-color="#ff8d9f"/><stop offset="0.877" stop-color="#ff3655"/><stop offset="0.93" stop-color="#ff1d49"/><stop offset="0.943" stop-color="#ff0e46"/><stop offset="0.947" stop-color="#ff0045"/><stop offset="1" stop-color="#ff0043"/></linearGradient>
<linearGradient id="i111"><stop offset="0" stop-color="#00f4ff"/><stop offset="0.102" stop-color="#00eeff"/><stop offset="0.107" stop-color="#22eeff"/><stop offset="0.111" stop-color="#37edff"/><stop offset="0.116" stop-color="#44edff"/><stop offset="0.129" stop-color="#5fedff"/><stop offset="0.151" stop-color="#7dedff"/><stop offset="0.213" stop-color="#b8ebff"/><stop offset="0.316" stop-color="#ffe8ff"/><stop offset="0.418" stop-color="#ffb7cd"/><stop offset="0.56" stop-color="#ff8a9f"/><stop offset="0.876" stop-color="#ff3659"/><stop offset="0.929" stop-color="#ff1c4e"/><stop offset="0.938" stop-color="#ff134c"/><stop offset="0.947" stop-color="#ff004a"/><stop offset="1" stop-color="#ff0048"/></linearGradient>
<linearGradient id="i112"><stop offset="0" stop-color="#00f2ff"/><stop offset="0.099" stop-color="#00ebff"/><stop offset="0.104" stop-color="#07ebff"/><stop offset="0.108" stop-color="#2eebff"/><stop offset="0.117" stop-color="#49ebff"/><stop offset="0.131" stop-color="#62eaff"/><stop offset="0.149" stop-color="#7aeaff"/><stop offset="0.181" stop-color="#9ae9ff"/><stop offset="0.217" stop-color="#b8e8ff"/><stop offset="0.321" stop-color="#fee5ff"/><stop offset="0.429" stop-color="#ffb3cc"/><stop offset="0.569" stop-color="#ff87a0"/><stop offset="0.876" stop-color="#ff355e"/><stop offset="0.93" stop-color="#ff1a53"/><stop offset="0.939" stop-color="#ff1051"/><stop offset="0.944" stop-color="#ff0050"/><stop offset="1" stop-color="#ff004d"/></linearGradient>
<linearGradient id="i113"><stop offset="0" stop-color="#00f0ff"/><stop offset="0.1" stop-color="#00e9ff"/><stop offset="0.105" stop-color="#0be8ff"/><stop offset="0.11" stop-color="#2ee8ff"/><stop offset="0.119" stop-color="#49e8ff"/><stop offset="0.132" stop-color="#62e7ff"/><stop offset="0.155" stop-color="#7fe7ff"/><stop offset="0.224" stop-color="#bbe5ff"/><stop offset="0.329" stop-color="#ffe1ff"/><stop offset="0.434" stop-color="#ffb1cd"/><stop offset="0.575" stop-color="#ff85a1"/><stop offset="0.872" stop-color="#ff3662"/><stop offset="0.922" stop-color="#ff1e58"/><stop offset="0.936" stop-color="#ff1156"/><stop offset="0.941" stop-color="#ff0455"/><stop offset="0.945" stop-color="#ff0054"/><stop offset="1" stop-color="#ff0052"/></linearGradient>
<linearGradient id="i114"><stop offset="0" stop-color="#00eeff"/><stop offset="0.102" stop-color="#00e6ff"/><stop offset="0.107" stop-color="#24e5ff"/><stop offset="0.111" stop-color="#37e5ff"/><stop offset="0.116" stop-color="#43e5ff"/><stop offset="0.13" stop-color="#5ee5ff"/><stop offset="0.153" stop-color="#7ce4ff"/><stop offset="0.186" stop-color="#9be3ff"/><stop offset="0.223" stop-color="#b8e2ff"/><stop offset="0.334" stop-color="#ffddff"/><stop offset="0.441" stop-color="#ffaece"/><stop offset="0.585" stop-color="#ff82a2"/><stop offset="0.872" stop-color="#ff3666"/><stop offset="0.923" stop-color="#ff1d5c"/><stop offset="0.937" stop-color="#ff0e5a"/><stop offset="0.942" stop-color="#ff0059"/><stop offset="1" stop-color="#ff0056"/></linearGradient>
<linearGradient id="i115"><stop offset="0" stop-color="#00ecff"/><stop offset="0.103" stop-color="#00e3ff"/><stop offset="0.108" stop-color="#24e3ff"/><stop offset="0.113" stop-color="#37e3ff"/><stop offset="0.117" stop-color="#43e2ff"/><stop offset="0.131" stop-color="#5de2ff"/><stop offset="0.155" stop-color="#7be1ff"/><stop offset="0.188" stop-color="#9ae0ff"/><stop offset="0.23" stop-color="#badfff"/><stop offset="0.343" stop-color="#ffd9fe"/><stop offset="0.451" stop-color="#ffabcd"/><stop offset="0.592" stop-color="#ff80a4"/><stop offset="0.793" stop-color="#ff4d79"/><stop offset="0.873" stop-color="#ff356a"/><stop offset="0.925" stop-color="#ff1a60"/><stop offset="0.934" stop-color="#ff0f5e"/><stop offset="0.939" stop-color="#ff005e"/><stop offset="1" stop-color="#ff005a"/></linearGradient>
<linearGradient id="i116"><stop offset="0" stop-color="#00eaff"/><stop offset="0.1" stop-color="#00e1ff"/><stop offset="0.105" stop-color="#10e0ff"/><stop offset="0.11" stop-color="#2fe0ff"/><stop offset="0.119" stop-color="#48e0ff"/><stop offset="0.134" stop-color="#61dfff"/><stop offset="0.158" stop-color="#7ddeff"/><stop offset="0.191" stop-color="#9bddff"/><stop offset="0.234" stop-color="#bbdcff"/><stop offset="0.348" stop-color="#ffd5fe"/><stop offset="0.458" stop-color="#ffa8ce"/><stop offset="0.601" stop-color="#ff7ea5"/><stop offset="0.792" stop-color="#ff4d7c"/><stop offset="0.874" stop-color="#ff346d"/><stop offset="0.921" stop-color="#ff1d65"/><stop offset="0.931" stop-color="#ff1463"/><stop offset="0.94" stop-color="#ff0062"/><stop offset="1" stop-color="#ff005e"/></linearGradient>
<linearGradient id="i117"><stop offset="0" stop-color="#00e8ff"/><stop offset="0.101" stop-color="#00deff"/><stop offset="0.106" stop-color="#12ddff"/><stop offset="0.111" stop-color="#2fddff"/><stop offset="0.121" stop-color="#48ddff"/><stop offset="0.135" stop-color="#60dcff"/><stop offset="0.159" stop-color="#7ddcff"/><stop offset="0.232" stop-color="#b7d9ff"/><stop offset="0.353" stop-color="#fed3ff"/><stop offset="0.464" stop-color="#ffa6d0"/><stop offset="0.604" stop-color="#ff7da7"/><stop offset="0.87" stop-color="#ff3572"/><stop offset="0.918" stop-color="#ff1d69"/><stop offset="0.928" stop-color="#ff1467"/><stop offset="0.937" stop-color="#ff0066"/><stop offset="1" stop-color="#ff0062"/></linearGradient>
<linearGradient id="i118"><stop offset="0" stop-color="#00e6ff"/><stop offset="0.103" stop-color="#00dbff"/><stop offset="0.108" stop-color="#25dbff"/><stop offset="0.118" stop-color="#43daff"/><stop offset="0.133" stop-color="#5cdaff"/><stop offset="0.157" stop-color="#7ad9ff"/><stop offset="0.192" stop-color="#98d8ff"/><stop offset="0.236" stop-color="#b7d6ff"/><stop offset="0.359" stop-color="#fecfff"/><stop offset="0.472" stop-color="#ffa3d0"/><stop offset="0.614" stop-color="#ff7aa8"/><stop offset="0.87" stop-color="#ff3575"/><stop offset="0.919" stop-color="#ff1c6d"/><stop offset="0.929" stop-color="#ff126b"/><stop offset="0.934" stop-color="#ff056a"/><stop offset="0.939" stop-color="#ff006a"/><stop offset="1" stop-color="#ff0066"/></linearGradient>
<linearGradient id="i119"><stop offset="0" stop-color="#00e4ff"/><stop offset="0.1" stop-color="#00d9ff"/><stop offset="0.105" stop-color="#14d8ff"/><stop offset="0.11" stop-color="#2fd8ff"/><stop offset="0.12" stop-color="#48d8ff"/><stop offset="0.135" stop-color="#5fd7ff"/><stop offset="0.16" stop-color="#7bd6ff"/><stop offset="0.195" stop-color="#99d5ff"/><stop offset="0.239" stop-color="#b8d3ff"/><stop offset="0.364" stop-color="#feccff"/><stop offset="0.479" stop-color="#ffa0d1"/><stop offset="0.618" stop-color="#ff78aa"/><stop offset="0.793" stop-color="#ff4c86"/><stop offset="0.873" stop-color="#ff3278"/><stop offset="0.918" stop-color="#ff1b71"/><stop offset="0.928" stop-color="#ff0f6f"/><stop offset="0.933" stop-color="#ff006e"/><stop offset="1" stop-color="#ff006a"/></linearGradient>
<linearGradient id="i120"><stop offset="0" stop-color="#00e2ff"/><stop offset="0.101" stop-color="#00d6ff"/><stop offset="0.111" stop-color="#2fd5ff"/><stop offset="0.122" stop-color="#48d5ff"/><stop offset="0.137" stop-color="#5fd4ff"/><stop offset="0.162" stop-color="#7bd3ff"/><stop offset="0.197" stop-color="#98d2ff"/><stop offset="0.243" stop-color="#b7d0ff"/><stop offset="0.375" stop-color="#ffc8ff"/><stop offset="0.486" stop-color="#ff9ed2"/><stop offset="0.628" stop-color="#ff76ab"/><stop offset="0.79" stop-color="#ff4c8a"/><stop offset="0.871" stop-color="#ff337c"/><stop offset="0.916" stop-color="#ff1b75"/><stop offset="0.927" stop-color="#ff1073"/><stop offset="0.932" stop-color="#ff0072"/><stop offset="1" stop-color="#ff006e"/></linearGradient>
<linearGradient id="i121"><stop offset="0" stop-color="#00e0ff"/><stop offset="0.103" stop-color="#00d3ff"/><stop offset="0.108" stop-color="#26d3ff"/><stop offset="0.118" stop-color="#43d2ff"/><stop offset="0.139" stop-color="#62d2ff"/><stop offset="0.165" stop-color="#7dd0ff"/><stop offset="0.247" stop-color="#b8cdff"/><stop offset="0.38" stop-color="#ffc4ff"/><stop offset="0.488" stop-color="#ff9cd4"/><stop offset="0.632" stop-color="#ff74ad"/><stop offset="0.792" stop-color="#ff4b8d"/><stop offset="0.869" stop-color="#ff3380"/><stop offset="0.915" stop-color="#ff1a78"/><stop offset="0.92" stop-color="#ff1477"/><stop offset="0.931" stop-color="#ff0076"/><stop offset="1" stop-color="#ff0071"/></linearGradient>
<linearGradient id="i122"><stop offset="0" stop-color="#00dfff"/><stop offset="0.104" stop-color="#00d1ff"/><stop offset="0.11" stop-color="#26d0ff"/><stop offset="0.12" stop-color="#42d0ff"/><stop offset="0.141" stop-color="#62cfff"/><stop offset="0.167" stop-color="#7cceff"/><stop offset="0.204" stop-color="#99ccff"/><stop offset="0.256" stop-color="#bac9ff"/><stop offset="0.392" stop-color="#ffc0fe"/><stop offset="0.501" stop-color="#ff98d4"/><stop offset="0.642" stop-color="#ff71af"/><stop offset="0.794" stop-color="#ff4b90"/><stop offset="0.872" stop-color="#ff3183"/><stop offset="0.914" stop-color="#ff1a7c"/><stop offset="0.924" stop-color="#ff0d7a"/><stop offset="0.93" stop-color="#ff007a"/><stop offset="1" stop-color="#ff0075"/></linearGradient>
<linearGradient id="i123"><stop offset="0" stop-color="#00dcff"/><stop offset="0.101" stop-color="#00cfff"/><stop offset="0.111" stop-color="#2fceff"/><stop offset="0.122" stop-color="#47cdff"/><stop offset="0.143" stop-color="#64ccff"/><stop offset="0.17" stop-color="#7ecbff"/><stop offset="0.207" stop-color="#9ac9ff"/><stop offset="0.26" stop-color="#bbc6ff"/><stop offset="0.398" stop-color="#ffbdfe"/><stop offset="0.483" stop-color="#ff9edd"/><stop offset="0.584" stop-color="#ff80c0"/><stop offset="0.854" stop-color="#ff3789"/><stop offset="0.907" stop-color="#ff1d80"/><stop offset="0.918" stop-color="#ff137f"/><stop offset="0.928" stop-color="#ff007d"/><stop offset="1" stop-color="#ff0078"/></linearGradient>
<linearGradient id="i124"><stop offset="0" stop-color="#00daff"/><stop offset="0.103" stop-color="#00ccff"/><stop offset="0.108" stop-color="#26cbff"/><stop offset="0.119" stop-color="#42cbff"/><stop offset="0.141" stop-color="#61caff"/><stop offset="0.168" stop-color="#7bc8ff"/><stop offset="0.205" stop-color="#97c6ff"/><stop offset="0.259" stop-color="#b8c3ff"/><stop offset="0.405" stop-color="#ffb9ff"/><stop offset="0.486" stop-color="#ff9cdf"/><stop offset="0.589" stop-color="#ff7ec2"/><stop offset="0.854" stop-color="#ff378d"/><stop offset="0.908" stop-color="#ff1c84"/><stop offset="0.919" stop-color="#ff1082"/><stop offset="0.924" stop-color="#ff0082"/><stop offset="1" stop-color="#ff007c"/></linearGradient>
<linearGradient id="i125"><stop offset="0" stop-color="#00d9ff"/><stop offset="0.104" stop-color="#00c9ff"/><stop offset="0.11" stop-color="#27c9ff"/><stop offset="0.121" stop-color="#42c8ff"/><stop offset="0.142" stop-color="#61c7ff"/><stop offset="0.17" stop-color="#7bc6ff"/><stop offset="0.208" stop-color="#97c4ff"/><stop offset="0.263" stop-color="#b7c1ff"/><stop offset="0.411" stop-color="#feb6ff"/><stop offset="0.499" stop-color="#ff98df"/><stop offset="0.592" stop-color="#ff7dc4"/><stop offset="0.849" stop-color="#ff3791"/><stop offset="0.904" stop-color="#ff1c88"/><stop offset="0.915" stop-color="#ff1186"/><stop offset="0.921" stop-color="#ff0085"/><stop offset="1" stop-color="#ff007f"/></linearGradient>
<linearGradient id="i126"><stop offset="0" stop-color="#00d6ff"/><stop offset="0.101" stop-color="#00c7ff"/><stop offset="0.112" stop-color="#30c6ff"/><stop offset="0.123" stop-color="#47c5ff"/><stop offset="0.145" stop-color="#63c4ff"/><stop offset="0.173" stop-color="#7cc3ff"/><stop offset="0.268" stop-color="#b8bdff"/><stop offset="0.419" stop-color="#feb2ff"/><stop offset="0.508" stop-color="#ff95df"/><stop offset="0.598" stop-color="#ff7cc6"/><stop offset="0.844" stop-color="#ff3995"/><stop offset="0.899" stop-color="#ff1f8c"/><stop offset="0.911" stop-color="#ff158a"/><stop offset="0.922" stop-color="#ff0089"/><stop offset="1" stop-color="#ff0083"/></linearGradient>
<linearGradient id="i127"><stop offset="0" stop-color="#00d5ff"/><stop offset="0.102" stop-color="#00c5ff"/><stop offset="0.113" stop-color="#30c3ff"/><stop offset="0.125" stop-color="#47c3ff"/><stop offset="0.147" stop-color="#63c2ff"/><stop offset="0.176" stop-color="#7cc0ff"/><stop offset="0.272" stop-color="#b7bbff"/><stop offset="0.431" stop-color="#ffafff"/><stop offset="0.51" stop-color="#ff94e2"/><stop offset="0.601" stop-color="#ff7ac9"/><stop offset="0.844" stop-color="#ff3898"/><stop offset="0.901" stop-color="#ff1c8f"/><stop offset="0.912" stop-color="#ff0e8e"/><stop offset="0.918" stop-color="#ff008d"/><stop offset="1" stop-color="#ff0086"/></linearGradient>
<linearGradient id="i128"><stop offset="0" stop-color="#00d2ff"/><stop offset="0.104" stop-color="#00c2ff"/><stop offset="0.11" stop-color="#27c1ff"/><stop offset="0.121" stop-color="#42c0ff"/><stop offset="0.145" stop-color="#60bfff"/><stop offset="0.173" stop-color="#79beff"/><stop offset="0.22" stop-color="#98bbff"/><stop offset="0.277" stop-color="#b8b8ff"/><stop offset="0.439" stop-color="#ffabff"/><stop offset="0.52" stop-color="#ff91e3"/><stop offset="0.613" stop-color="#ff77ca"/><stop offset="0.844" stop-color="#ff379c"/><stop offset="0.896" stop-color="#ff1f94"/><stop offset="0.908" stop-color="#ff1492"/><stop offset="0.919" stop-color="#ff0090"/><stop offset="1" stop-color="#ff008a"/></linearGradient>
<linearGradient id="i129"><stop offset="0" stop-color="#00d0ff"/><stop offset="0.1" stop-color="#00c0ff"/><stop offset="0.106" stop-color="#1bbfff"/><stop offset="0.112" stop-color="#30beff"/><stop offset="0.124" stop-color="#46beff"/><stop offset="0.147" stop-color="#62bdff"/><stop offset="0.176" stop-color="#7bbbff"/><stop offset="0.224" stop-color="#99b8ff"/><stop offset="0.282" stop-color="#b8b4ff"/><stop offset="0.447" stop-color="#fea7ff"/><stop offset="0.618" stop-color="#ff75cc"/><stop offset="0.841" stop-color="#ff37a0"/><stop offset="0.894" stop-color="#ff1d97"/><stop offset="0.906" stop-color="#ff1195"/><stop offset="0.912" stop-color="#ff0095"/><stop offset="1" stop-color="#ff008d"/></linearGradient>
<linearGradient id="i130"><stop offset="0" stop-color="#00ceff"/><stop offset="0.102" stop-color="#00bdff"/><stop offset="0.108" stop-color="#1cbcff"/><stop offset="0.114" stop-color="#30bcff"/><stop offset="0.126" stop-color="#46bbff"/><stop offset="0.15" stop-color="#62baff"/><stop offset="0.18" stop-color="#7bb8ff"/><stop offset="0.228" stop-color="#99b5ff"/><stop offset="0.287" stop-color="#b7b2ff"/><stop offset="0.461" stop-color="#ffa3ff"/><stop offset="0.623" stop-color="#ff74ce"/><stop offset="0.838" stop-color="#ff38a4"/><stop offset="0.892" stop-color="#ff1e9b"/><stop offset="0.904" stop-color="#ff1299"/><stop offset="0.91" stop-color="#ff0098"/><stop offset="1" stop-color="#ff0090"/></linearGradient>
<linearGradient id="i131"><stop offset="0" stop-color="#00ccff"/><stop offset="0.104" stop-color="#00baff"/><stop offset="0.11" stop-color="#28baff"/><stop offset="0.122" stop-color="#42b9ff"/><stop offset="0.146" stop-color="#5fb8ff"/><stop offset="0.183" stop-color="#7cb5ff"/><stop offset="0.232" stop-color="#9ab3ff"/><stop offset="0.293" stop-color="#b8aeff"/><stop offset="0.47" stop-color="#ff9fff"/><stop offset="0.628" stop-color="#ff71d0"/><stop offset="0.835" stop-color="#ff38a7"/><stop offset="0.89" stop-color="#ff1c9f"/><stop offset="0.902" stop-color="#ff0e9d"/><stop offset="0.909" stop-color="#ff009c"/><stop offset="1" stop-color="#ff0094"/></linearGradient>
<linearGradient id="i132"><stop offset="0" stop-color="#00caff"/><stop offset="0.106" stop-color="#00b8ff"/><stop offset="0.112" stop-color="#28b7ff"/><stop offset="0.124" stop-color="#41b6ff"/><stop offset="0.149" stop-color="#5eb5ff"/><stop offset="0.186" stop-color="#7cb3ff"/><stop offset="0.236" stop-color="#99b0ff"/><stop offset="0.298" stop-color="#b7abff"/><stop offset="0.478" stop-color="#fe9cff"/><stop offset="0.64" stop-color="#ff6ed1"/><stop offset="0.832" stop-color="#ff38ac"/><stop offset="0.888" stop-color="#ff1da3"/><stop offset="0.901" stop-color="#ff0fa1"/><stop offset="0.907" stop-color="#ff00a0"/><stop offset="1" stop-color="#ff0097"/></linearGradient>
<linearGradient id="i133"><stop offset="0" stop-color="#00c8ff"/><stop offset="0.101" stop-color="#00b6ff"/><stop offset="0.108" stop-color="#1db5ff"/><stop offset="0.114" stop-color="#30b4ff"/><stop offset="0.127" stop-color="#46b4ff"/><stop offset="0.152" stop-color="#61b2ff"/><stop offset="0.19" stop-color="#7db0ff"/><stop offset="0.304" stop-color="#b8a8ff"/><stop offset="0.487" stop-color="#fe98ff"/><stop offset="0.646" stop-color="#ff6cd3"/><stop offset="0.829" stop-color="#ff38b0"/><stop offset="0.88" stop-color="#ff20a7"/><stop offset="0.892" stop-color="#ff15a5"/><stop offset="0.905" stop-color="#ff00a4"/><stop offset="1" stop-color="#ff009b"/></linearGradient>
<linearGradient id="i134"><stop offset="0" stop-color="#00c6ff"/><stop offset="0.104" stop-color="#00b3ff"/><stop offset="0.11" stop-color="#28b2ff"/><stop offset="0.123" stop-color="#41b1ff"/><stop offset="0.149" stop-color="#5eb0ff"/><stop offset="0.188" stop-color="#7baeff"/><stop offset="0.304" stop-color="#b6a6ff"/><stop offset="0.498" stop-color="#fd94ff"/><stop offset="0.654" stop-color="#ff69d5"/><stop offset="0.828" stop-color="#ff38b3"/><stop offset="0.88" stop-color="#ff1fab"/><stop offset="0.893" stop-color="#ff12a9"/><stop offset="0.9" stop-color="#ff00a8"/><stop offset="1" stop-color="#ff009e"/></linearGradient>
<linearGradient id="i135"><stop offset="0" stop-color="#00c4ff"/><stop offset="0.105" stop-color="#00b0ff"/><stop offset="0.112" stop-color="#29b0ff"/><stop offset="0.125" stop-color="#41afff"/><stop offset="0.151" stop-color="#5eadff"/><stop offset="0.191" stop-color="#7aabff"/><stop offset="0.243" stop-color="#97a7ff"/><stop offset="0.316" stop-color="#b8a2ff"/><stop offset="0.513" stop-color="#fe8fff"/><stop offset="0.658" stop-color="#ff68d8"/><stop offset="0.829" stop-color="#ff36b7"/><stop offset="0.882" stop-color="#ff1aae"/><stop offset="0.888" stop-color="#ff13ad"/><stop offset="0.895" stop-color="#ff00ac"/><stop offset="1" stop-color="#ff00a1"/></linearGradient>
<linearGradient id="i136"><stop offset="0" stop-color="#00c2ff"/><stop offset="0.101" stop-color="#00aeff"/><stop offset="0.108" stop-color="#1eadff"/><stop offset="0.114" stop-color="#30adff"/><stop offset="0.128" stop-color="#45acff"/><stop offset="0.155" stop-color="#60abff"/><stop offset="0.195" stop-color="#7ca8ff"/><stop offset="0.249" stop-color="#98a4ff"/><stop offset="0.323" stop-color="#b89fff"/><stop offset="0.525" stop-color="#fe8bff"/><stop offset="0.667" stop-color="#ff65da"/><stop offset="0.828" stop-color="#ff36bb"/><stop offset="0.875" stop-color="#ff1eb3"/><stop offset="0.889" stop-color="#ff0fb1"/><stop offset="0.896" stop-color="#ff00b0"/><stop offset="1" stop-color="#ff00a5"/></linearGradient>
<linearGradient id="i137"><stop offset="0" stop-color="#00c0ff"/><stop offset="0.103" stop-color="#00acff"/><stop offset="0.11" stop-color="#1fabff"/><stop offset="0.116" stop-color="#31aaff"/><stop offset="0.13" stop-color="#45aaff"/><stop offset="0.158" stop-color="#60a8ff"/><stop offset="0.199" stop-color="#7ca5ff"/><stop offset="0.253" stop-color="#98a2ff"/><stop offset="0.329" stop-color="#b79cff"/><stop offset="0.541" stop-color="#ff86ff"/><stop offset="0.664" stop-color="#ff65de"/><stop offset="0.822" stop-color="#ff37bf"/><stop offset="0.87" stop-color="#ff1fb7"/><stop offset="0.884" stop-color="#ff10b5"/><stop offset="0.89" stop-color="#ff00b4"/><stop offset="1" stop-color="#ff00a9"/></linearGradient>
<linearGradient id="i138"><stop offset="0" stop-color="#00bdff"/><stop offset="0.098" stop-color="#00aaff"/><stop offset="0.105" stop-color="#07a8ff"/><stop offset="0.112" stop-color="#29a8ff"/><stop offset="0.126" stop-color="#41a7ff"/><stop offset="0.154" stop-color="#5da6ff"/><stop offset="0.204" stop-color="#7da2ff"/><stop offset="0.337" stop-color="#b899ff"/><stop offset="0.554" stop-color="#ff82ff"/><stop offset="0.674" stop-color="#ff62e0"/><stop offset="0.821" stop-color="#ff36c3"/><stop offset="0.87" stop-color="#ff1dbb"/><stop offset="0.877" stop-color="#ff16ba"/><stop offset="0.891" stop-color="#ff00b8"/><stop offset="1" stop-color="#ff00ac"/></linearGradient>
<linearGradient id="i139"><stop offset="0" stop-color="#00bbff"/><stop offset="0.1" stop-color="#00a7ff"/><stop offset="0.108" stop-color="#1fa6ff"/><stop offset="0.115" stop-color="#31a5ff"/><stop offset="0.129" stop-color="#45a5ff"/><stop offset="0.158" stop-color="#5fa3ff"/><stop offset="0.201" stop-color="#7ba0ff"/><stop offset="0.258" stop-color="#979cff"/><stop offset="0.337" stop-color="#b696ff"/><stop offset="0.566" stop-color="#ff7eff"/><stop offset="0.688" stop-color="#ff5de1"/><stop offset="0.824" stop-color="#ff33c6"/><stop offset="0.867" stop-color="#ff1bbf"/><stop offset="0.875" stop-color="#ff13be"/><stop offset="0.882" stop-color="#ff00bd"/><stop offset="1" stop-color="#ff00b0"/></linearGradient>
<linearGradient id="i140"><stop offset="0" stop-color="#00b9ff"/><stop offset="0.103" stop-color="#00a4ff"/><stop offset="0.11" stop-color="#20a3ff"/><stop offset="0.117" stop-color="#31a3ff"/><stop offset="0.132" stop-color="#45a2ff"/><stop offset="0.161" stop-color="#5fa0ff"/><stop offset="0.205" stop-color="#7a9dff"/><stop offset="0.271" stop-color="#9999ff"/><stop offset="0.352" stop-color="#b892ff"/><stop offset="0.579" stop-color="#fe7aff"/><stop offset="0.74" stop-color="#ff4eda"/><stop offset="0.821" stop-color="#ff34cb"/><stop offset="0.864" stop-color="#ff1cc4"/><stop offset="0.872" stop-color="#ff14c3"/><stop offset="0.879" stop-color="#ff00c2"/><stop offset="1" stop-color="#ff00b4"/></linearGradient>
<linearGradient id="i141"><stop offset="0" stop-color="#00b7ff"/><stop offset="0.097" stop-color="#00a3ff"/><stop offset="0.105" stop-color="#0da1ff"/><stop offset="0.112" stop-color="#2aa1ff"/><stop offset="0.127" stop-color="#41a0ff"/><stop offset="0.157" stop-color="#5c9eff"/><stop offset="0.21" stop-color="#7c9aff"/><stop offset="0.277" stop-color="#9a96ff"/><stop offset="0.36" stop-color="#b88fff"/><stop offset="0.592" stop-color="#fd75ff"/><stop offset="0.742" stop-color="#ff4cde"/><stop offset="0.816" stop-color="#ff33d0"/><stop offset="0.861" stop-color="#ff1ac8"/><stop offset="0.869" stop-color="#ff10c7"/><stop offset="0.876" stop-color="#ff00c6"/><stop offset="1" stop-color="#ff00b7"/></linearGradient>
<linearGradient id="i142"><stop offset="0" stop-color="#00b5ff"/><stop offset="0.1" stop-color="#00a0ff"/><stop offset="0.107" stop-color="#0f9eff"/><stop offset="0.115" stop-color="#2a9eff"/><stop offset="0.13" stop-color="#419dff"/><stop offset="0.161" stop-color="#5c9bff"/><stop offset="0.215" stop-color="#7b98ff"/><stop offset="0.284" stop-color="#9993ff"/><stop offset="0.368" stop-color="#b78cff"/><stop offset="0.613" stop-color="#fe6fff"/><stop offset="0.751" stop-color="#ff49e0"/><stop offset="0.82" stop-color="#ff31d3"/><stop offset="0.858" stop-color="#ff1bcd"/><stop offset="0.866" stop-color="#ff12cc"/><stop offset="0.874" stop-color="#ff00ca"/><stop offset="1" stop-color="#ff00bb"/></linearGradient>
<linearGradient id="i143"><stop offset="0" stop-color="#00b2ff"/><stop offset="0.102" stop-color="#009dff"/><stop offset="0.11" stop-color="#219cff"/><stop offset="0.118" stop-color="#319bff"/><stop offset="0.133" stop-color="#459aff"/><stop offset="0.173" stop-color="#6398ff"/><stop offset="0.22" stop-color="#7d95ff"/><stop offset="0.376" stop-color="#b888ff"/><stop offset="0.627" stop-color="#fe6aff"/><stop offset="0.745" stop-color="#ff49e5"/><stop offset="0.816" stop-color="#ff30d8"/><stop offset="0.847" stop-color="#ff1fd3"/><stop offset="0.855" stop-color="#ff18d1"/><stop offset="0.871" stop-color="#ff00cf"/><stop offset="1" stop-color="#ff00bf"/></linearGradient>
<linearGradient id="i144"><stop offset="0" stop-color="#00b0ff"/><stop offset="0.097" stop-color="#009bff"/><stop offset="0.105" stop-color="#1199ff"/><stop offset="0.113" stop-color="#2a99ff"/><stop offset="0.129" stop-color="#4098ff"/><stop offset="0.161" stop-color="#5b96ff"/><stop offset="0.21" stop-color="#7793ff"/><stop offset="0.355" stop-color="#ae87ff"/><stop offset="0.581" stop-color="#ee6fff"/><stop offset="0.653" stop-color="#ff63fe"/><stop offset="0.798" stop-color="#ff36df"/><stop offset="0.847" stop-color="#ff1dd7"/><stop offset="0.855" stop-color="#ff15d6"/><stop offset="0.863" stop-color="#ff00d4"/><stop offset="1" stop-color="#ff00c3"/></linearGradient>
<linearGradient id="i145"><stop offset="0" stop-color="#00aeff"/><stop offset="0.099" stop-color="#0099ff"/><stop offset="0.107" stop-color="#1297ff"/><stop offset="0.115" stop-color="#2a96ff"/><stop offset="0.132" stop-color="#4095ff"/><stop offset="0.165" stop-color="#5b93ff"/><stop offset="0.206" stop-color="#7291ff"/><stop offset="0.337" stop-color="#a686ff"/><stop offset="0.543" stop-color="#e071ff"/><stop offset="0.667" stop-color="#ff5eff"/><stop offset="0.782" stop-color="#ff3be7"/><stop offset="0.84" stop-color="#ff1edc"/><stop offset="0.848" stop-color="#ff16db"/><stop offset="0.856" stop-color="#ff00d9"/><stop offset="1" stop-color="#ff00c7"/></linearGradient>
<linearGradient id="i146"><stop offset="0" stop-color="#00abff"/><stop offset="0.102" stop-color="#0095ff"/><stop offset="0.11" stop-color="#2194ff"/><stop offset="0.127" stop-color="#3c93ff"/><stop offset="0.153" stop-color="#5291ff"/><stop offset="0.195" stop-color="#6c8fff"/><stop offset="0.322" stop-color="#9e85ff"/><stop offset="0.508" stop-color="#d473ff"/><stop offset="0.686" stop-color="#ff57ff"/><stop offset="0.754" stop-color="#ff43f1"/><stop offset="0.831" stop-color="#ff22e2"/><stop offset="0.847" stop-color="#ff12df"/><stop offset="0.856" stop-color="#ff00de"/><stop offset="1" stop-color="#ff00cb"/></linearGradient>
<linearGradient id="i147"><stop offset="0" stop-color="#00a9ff"/><stop offset="0.104" stop-color="#0093ff"/><stop offset="0.113" stop-color="#2291ff"/><stop offset="0.13" stop-color="#3c90ff"/><stop offset="0.156" stop-color="#528fff"/><stop offset="0.19" stop-color="#678cff"/><stop offset="0.312" stop-color="#9883ff"/><stop offset="0.494" stop-color="#cc72ff"/><stop offset="0.701" stop-color="#fd51ff"/><stop offset="0.736" stop-color="#ff47f9"/><stop offset="0.788" stop-color="#ff35ef"/><stop offset="0.823" stop-color="#ff23e8"/><stop offset="0.84" stop-color="#ff13e5"/><stop offset="0.848" stop-color="#ff00e4"/><stop offset="1" stop-color="#ff00cf"/></linearGradient>
<linearGradient id="i148"><stop offset="0" stop-color="#00a6ff"/><stop offset="0.098" stop-color="#0091ff"/><stop offset="0.116" stop-color="#2b8fff"/><stop offset="0.125" stop-color="#378eff"/><stop offset="0.152" stop-color="#4f8cff"/><stop offset="0.188" stop-color="#648aff"/><stop offset="0.295" stop-color="#9082ff"/><stop offset="0.464" stop-color="#c172ff"/><stop offset="0.616" stop-color="#e65fff"/><stop offset="0.732" stop-color="#ff47ff"/><stop offset="0.812" stop-color="#ff27ef"/><stop offset="0.83" stop-color="#ff1aec"/><stop offset="0.848" stop-color="#ff00e8"/><stop offset="1" stop-color="#ff00d3"/></linearGradient>
<linearGradient id="i149"><stop offset="0" stop-color="#00a4ff"/><stop offset="0.101" stop-color="#008dff"/><stop offset="0.11" stop-color="#228cff"/><stop offset="0.119" stop-color="#318cff"/><stop offset="0.138" stop-color="#448bff"/><stop offset="0.174" stop-color="#5d88ff"/><stop offset="0.275" stop-color="#8881ff"/><stop offset="0.44" stop-color="#b972ff"/><stop offset="0.615" stop-color="#e25cff"/><stop offset="0.743" stop-color="#fd41ff"/><stop offset="0.789" stop-color="#ff2ff8"/><stop offset="0.817" stop-color="#ff1ff2"/><stop offset="0.826" stop-color="#ff16f1"/><stop offset="0.835" stop-color="#ff00ef"/><stop offset="1" stop-color="#ff00d7"/></linearGradient>
<linearGradient id="i150"><stop offset="0" stop-color="#00a2ff"/><stop offset="0.104" stop-color="#008bff"/><stop offset="0.113" stop-color="#238aff"/><stop offset="0.123" stop-color="#3189ff"/><stop offset="0.142" stop-color="#4488ff"/><stop offset="0.179" stop-color="#5c85ff"/><stop offset="0.283" stop-color="#887eff"/><stop offset="0.434" stop-color="#b370ff"/><stop offset="0.613" stop-color="#dd5aff"/><stop offset="0.736" stop-color="#f641ff"/><stop offset="0.783" stop-color="#ff31fe"/><stop offset="0.811" stop-color="#ff20f9"/><stop offset="0.821" stop-color="#ff18f7"/><stop offset="0.83" stop-color="#ff00f5"/><stop offset="1" stop-color="#ff00dc"/></linearGradient>
<linearGradient id="i151"><stop offset="0" stop-color="#009fff"/><stop offset="0.097" stop-color="#0089ff"/><stop offset="0.117" stop-color="#2b87ff"/><stop offset="0.126" stop-color="#3786ff"/><stop offset="0.175" stop-color="#5a83ff"/><stop offset="0.272" stop-color="#827cff"/><stop offset="0.417" stop-color="#ac6fff"/><stop offset="0.602" stop-color="#d758ff"/><stop offset="0.728" stop-color="#f03fff"/><stop offset="0.796" stop-color="#fe25ff"/><stop offset="0.816" stop-color="#ff13fd"/><stop offset="0.825" stop-color="#ff00fb"/><stop offset="1" stop-color="#ff00e0"/></linearGradient>
<linearGradient id="i152"><stop offset="0" stop-color="#009dff"/><stop offset="0.1" stop-color="#0087ff"/><stop offset="0.12" stop-color="#2b84ff"/><stop offset="0.14" stop-color="#4083ff"/><stop offset="0.17" stop-color="#5481ff"/><stop offset="0.26" stop-color="#7b7aff"/><stop offset="0.4" stop-color="#a46eff"/><stop offset="0.59" stop-color="#d058ff"/><stop offset="0.72" stop-color="#ea3fff"/><stop offset="0.79" stop-color="#f725ff"/><stop offset="0.81" stop-color="#fb15ff"/><stop offset="0.82" stop-color="#fd00ff"/><stop offset="1" stop-color="#ff00e5"/></linearGradient>
<linearGradient id="i153"><stop offset="0" stop-color="#009aff"/><stop offset="0.103" stop-color="#0083ff"/><stop offset="0.113" stop-color="#2381ff"/><stop offset="0.124" stop-color="#3181ff"/><stop offset="0.165" stop-color="#517eff"/><stop offset="0.247" stop-color="#7578ff"/><stop offset="0.381" stop-color="#9d6dff"/><stop offset="0.577" stop-color="#ca57ff"/><stop offset="0.711" stop-color="#e43dff"/><stop offset="0.784" stop-color="#f122ff"/><stop offset="0.794" stop-color="#f31bff"/><stop offset="0.814" stop-color="#f700ff"/><stop offset="0.866" stop-color="#ff00fe"/><stop offset="1" stop-color="#ff00ea"/></linearGradient>
<linearGradient id="i154"><stop offset="0" stop-color="#0097ff"/><stop offset="0.096" stop-color="#0081ff"/><stop offset="0.118" stop-color="#2b7eff"/><stop offset="0.139" stop-color="#407dff"/><stop offset="0.171" stop-color="#547bff"/><stop offset="0.257" stop-color="#7775ff"/><stop offset="0.374" stop-color="#996bff"/><stop offset="0.567" stop-color="#c455ff"/><stop offset="0.706" stop-color="#de3cff"/><stop offset="0.749" stop-color="#e62fff"/><stop offset="0.781" stop-color="#ec20ff"/><stop offset="0.791" stop-color="#ee17ff"/><stop offset="0.802" stop-color="#ef00ff"/><stop offset="0.888" stop-color="#fe00ff"/><stop offset="1" stop-color="#ff00ef"/></linearGradient>
<linearGradient id="i155"><stop offset="0" stop-color="#0095ff"/><stop offset="0.099" stop-color="#007eff"/><stop offset="0.122" stop-color="#2b7bff"/><stop offset="0.144" stop-color="#407aff"/><stop offset="0.166" stop-color="#4e79ff"/><stop offset="0.243" stop-color="#6f73ff"/><stop offset="0.365" stop-color="#9369ff"/><stop offset="0.564" stop-color="#bf53ff"/><stop offset="0.696" stop-color="#d73bff"/><stop offset="0.74" stop-color="#df2fff"/><stop offset="0.773" stop-color="#e520ff"/><stop offset="0.785" stop-color="#e718ff"/><stop offset="0.796" stop-color="#e900ff"/><stop offset="0.928" stop-color="#ff00ff"/><stop offset="1" stop-color="#ff00f5"/></linearGradient>
<linearGradient id="i156"><stop offset="0" stop-color="#0091ff"/><stop offset="0.103" stop-color="#007aff"/><stop offset="0.114" stop-color="#2479ff"/><stop offset="0.137" stop-color="#3b77ff"/><stop offset="0.16" stop-color="#4a76ff"/><stop offset="0.24" stop-color="#6d70ff"/><stop offset="0.354" stop-color="#8e67ff"/><stop offset="0.549" stop-color="#b852ff"/><stop offset="0.686" stop-color="#d23aff"/><stop offset="0.754" stop-color="#dd23ff"/><stop offset="0.777" stop-color="#e113ff"/><stop offset="0.789" stop-color="#e300ff"/><stop offset="0.96" stop-color="#ff00ff"/><stop offset="1" stop-color="#ff00fa"/></linearGradient>
<linearGradient id="i157"><stop offset="0" stop-color="#008fff"/><stop offset="0.107" stop-color="#0077ff"/><stop offset="0.118" stop-color="#2476ff"/><stop offset="0.142" stop-color="#3b75ff"/><stop offset="0.166" stop-color="#4a73ff"/><stop offset="0.237" stop-color="#686eff"/><stop offset="0.343" stop-color="#8865ff"/><stop offset="0.533" stop-color="#b152ff"/><stop offset="0.675" stop-color="#cb3aff"/><stop offset="0.722" stop-color="#d32dff"/><stop offset="0.757" stop-color="#d91eff"/><stop offset="0.769" stop-color="#db14ff"/><stop offset="0.781" stop-color="#dd00ff"/><stop offset="1" stop-color="#fe00ff"/></linearGradient>
<linearGradient id="i158"><stop offset="0" stop-color="#008cff"/><stop offset="0.098" stop-color="#0076ff"/><stop offset="0.11" stop-color="#1a73ff"/><stop offset="0.123" stop-color="#2c73ff"/><stop offset="0.16" stop-color="#4770ff"/><stop offset="0.233" stop-color="#666bff"/><stop offset="0.344" stop-color="#8662ff"/><stop offset="0.528" stop-color="#ad4fff"/><stop offset="0.663" stop-color="#c538ff"/><stop offset="0.736" stop-color="#d121ff"/><stop offset="0.748" stop-color="#d31aff"/><stop offset="0.773" stop-color="#d700ff"/><stop offset="1" stop-color="#f900ff"/></linearGradient>
<linearGradient id="i159"><stop offset="0" stop-color="#0088ff"/><stop offset="0.103" stop-color="#0071ff"/><stop offset="0.115" stop-color="#2570ff"/><stop offset="0.154" stop-color="#436eff"/><stop offset="0.231" stop-color="#6468ff"/><stop offset="0.333" stop-color="#8160ff"/><stop offset="0.526" stop-color="#a94cff"/><stop offset="0.654" stop-color="#bf37ff"/><stop offset="0.731" stop-color="#cb1fff"/><stop offset="0.744" stop-color="#cd16ff"/><stop offset="0.756" stop-color="#cf00ff"/><stop offset="1" stop-color="#f400ff"/></linearGradient>
<linearGradient id="i160"><stop offset="0" stop-color="#0086ff"/><stop offset="0.106" stop-color="#006eff"/><stop offset="0.119" stop-color="#256dff"/><stop offset="0.159" stop-color="#436aff"/><stop offset="0.238" stop-color="#6365ff"/><stop offset="0.344" stop-color="#805cff"/><stop offset="0.53" stop-color="#a648ff"/><stop offset="0.649" stop-color="#ba34ff"/><stop offset="0.715" stop-color="#c51fff"/><stop offset="0.728" stop-color="#c717ff"/><stop offset="0.742" stop-color="#c904ff"/><stop offset="0.755" stop-color="#cb00ff"/><stop offset="1" stop-color="#ee00ff"/></linearGradient>
<linearGradient id="i161"><stop offset="0" stop-color="#0083ff"/><stop offset="0.097" stop-color="#006dff"/><stop offset="0.111" stop-color="#1b6aff"/><stop offset="0.125" stop-color="#2c69ff"/><stop offset="0.153" stop-color="#3f67ff"/><stop offset="0.222" stop-color="#5c63ff"/><stop offset="0.333" stop-color="#7b5aff"/><stop offset="0.514" stop-color="#9f47ff"/><stop offset="0.639" stop-color="#b432ff"/><stop offset="0.708" stop-color="#bf1cff"/><stop offset="0.722" stop-color="#c113ff"/><stop offset="0.736" stop-color="#c300ff"/><stop offset="1" stop-color="#e900ff"/></linearGradient>
<linearGradient id="i162"><stop offset="0" stop-color="#0080ff"/><stop offset="0.101" stop-color="#006aff"/><stop offset="0.115" stop-color="#1c67ff"/><stop offset="0.129" stop-color="#2c66ff"/><stop offset="0.158" stop-color="#3f64ff"/><stop offset="0.23" stop-color="#5c5fff"/><stop offset="0.345" stop-color="#7b56ff"/><stop offset="0.518" stop-color="#9c43ff"/><stop offset="0.633" stop-color="#af2fff"/><stop offset="0.691" stop-color="#b81dff"/><stop offset="0.705" stop-color="#ba14ff"/><stop offset="0.719" stop-color="#bc00ff"/><stop offset="1" stop-color="#e300ff"/></linearGradient>
<linearGradient id="i163"><stop offset="0" stop-color="#007cff"/><stop offset="0.106" stop-color="#0064ff"/><stop offset="0.121" stop-color="#2563ff"/><stop offset="0.152" stop-color="#3b61ff"/><stop offset="0.227" stop-color="#5a5cff"/><stop offset="0.333" stop-color="#7553ff"/><stop offset="0.5" stop-color="#9642ff"/><stop offset="0.621" stop-color="#a92dff"/><stop offset="0.682" stop-color="#b21aff"/><stop offset="0.712" stop-color="#b600ff"/><stop offset="1" stop-color="#de00ff"/></linearGradient>
<linearGradient id="i164"><stop offset="0" stop-color="#007aff"/><stop offset="0.094" stop-color="#0065ff"/><stop offset="0.11" stop-color="#0661ff"/><stop offset="0.126" stop-color="#2660ff"/><stop offset="0.173" stop-color="#435cff"/><stop offset="0.252" stop-color="#5e57ff"/><stop offset="0.346" stop-color="#754fff"/><stop offset="0.488" stop-color="#903fff"/><stop offset="0.598" stop-color="#a12dff"/><stop offset="0.661" stop-color="#ab1aff"/><stop offset="0.693" stop-color="#af00ff"/><stop offset="1" stop-color="#d800ff"/></linearGradient>
<linearGradient id="i165"><stop offset="0" stop-color="#0076ff"/><stop offset="0.1" stop-color="#005fff"/><stop offset="0.117" stop-color="#1d5cff"/><stop offset="0.133" stop-color="#2c5bff"/><stop offset="0.167" stop-color="#3f59ff"/><stop offset="0.233" stop-color="#5754ff"/><stop offset="0.333" stop-color="#704cff"/><stop offset="0.483" stop-color="#8b3cff"/><stop offset="0.583" stop-color="#9b2cff"/><stop offset="0.633" stop-color="#a21eff"/><stop offset="0.65" stop-color="#a417ff"/><stop offset="0.667" stop-color="#a706ff"/><stop offset="0.683" stop-color="#a900ff"/><stop offset="1" stop-color="#d300ff"/></linearGradient>
<linearGradient id="i166"><stop offset="0" stop-color="#0072ff"/><stop offset="0.088" stop-color="#005eff"/><stop offset="0.105" stop-color="#0b59ff"/><stop offset="0.123" stop-color="#2658ff"/><stop offset="0.158" stop-color="#3b56ff"/><stop offset="0.228" stop-color="#5451ff"/><stop offset="0.333" stop-color="#6e48ff"/><stop offset="0.474" stop-color="#8738ff"/><stop offset="0.579" stop-color="#9726ff"/><stop offset="0.632" stop-color="#9e13ff"/><stop offset="0.649" stop-color="#a100ff"/><stop offset="1" stop-color="#ce00ff"/></linearGradient>
<linearGradient id="i167"><stop offset="0" stop-color="#006fff"/><stop offset="0.093" stop-color="#005aff"/><stop offset="0.111" stop-color="#0c55ff"/><stop offset="0.13" stop-color="#2654ff"/><stop offset="0.148" stop-color="#3253ff"/><stop offset="0.204" stop-color="#494fff"/><stop offset="0.278" stop-color="#5d49ff"/><stop offset="0.426" stop-color="#7b3bff"/><stop offset="0.537" stop-color="#8c2aff"/><stop offset="0.611" stop-color="#9614ff"/><stop offset="0.63" stop-color="#9900ff"/><stop offset="1" stop-color="#c800ff"/></linearGradient>
<linearGradient id="i168"><stop offset="0" stop-color="#006aff"/><stop offset="0.098" stop-color="#0054ff"/><stop offset="0.118" stop-color="#1e51ff"/><stop offset="0.137" stop-color="#2d4fff"/><stop offset="0.176" stop-color="#3f4dff"/><stop offset="0.255" stop-color="#5647ff"/><stop offset="0.412" stop-color="#7637ff"/><stop offset="0.51" stop-color="#8528ff"/><stop offset="0.569" stop-color="#8d19ff"/><stop offset="0.608" stop-color="#9200ff"/><stop offset="1" stop-color="#c300ff"/></linearGradient>
<linearGradient id="i169"><stop offset="0" stop-color="#0067ff"/><stop offset="0.104" stop-color="#0050ff"/><stop offset="0.125" stop-color="#1e4cff"/><stop offset="0.146" stop-color="#2d4bff"/><stop offset="0.229" stop-color="#4c45ff"/><stop offset="0.333" stop-color="#633bff"/><stop offset="0.5" stop-color="#7f24ff"/><stop offset="0.542" stop-color="#841aff"/><stop offset="0.562" stop-color="#8710ff"/><stop offset="0.583" stop-color="#8a00ff"/><stop offset="1" stop-color="#bd00ff"/></linearGradient>
<linearGradient id="i170"><stop offset="0" stop-color="#0062ff"/><stop offset="0.089" stop-color="#004eff"/><stop offset="0.111" stop-color="#1048ff"/><stop offset="0.133" stop-color="#2747ff"/><stop offset="0.178" stop-color="#3b44ff"/><stop offset="0.222" stop-color="#4940ff"/><stop offset="0.333" stop-color="#6136ff"/><stop offset="0.467" stop-color="#7622ff"/><stop offset="0.511" stop-color="#7d16ff"/><stop offset="0.533" stop-color="#8007ff"/><stop offset="0.556" stop-color="#8300ff"/><stop offset="0.756" stop-color="#9e00ff"/><stop offset="1" stop-color="#b800ff"/></linearGradient>
<linearGradient id="i171"><stop offset="0" stop-color="#005dff"/><stop offset="0.096" stop-color="#0046ff"/><stop offset="0.12" stop-color="#1e43ff"/><stop offset="0.145" stop-color="#2d41ff"/><stop offset="0.193" stop-color="#3f3dff"/><stop offset="0.289" stop-color="#5634ff"/><stop offset="0.434" stop-color="#6e20ff"/><stop offset="0.482" stop-color="#7512ff"/><stop offset="0.506" stop-color="#7800ff"/><stop offset="0.723" stop-color="#9500ff"/><stop offset="1" stop-color="#b100ff"/></linearGradient>
<linearGradient id="i172"><stop offset="0" stop-color="#0059ff"/><stop offset="0.103" stop-color="#0041ff"/><stop offset="0.128" stop-color="#1f3dff"/><stop offset="0.154" stop-color="#2d3bff"/><stop offset="0.205" stop-color="#3f37ff"/><stop offset="0.385" stop-color="#6321ff"/><stop offset="0.436" stop-color="#6a13ff"/><stop offset="0.462" stop-color="#6e00ff"/><stop offset="0.692" stop-color="#8d00ff"/><stop offset="1" stop-color="#ac00ff"/></linearGradient>
<linearGradient id="i173"><stop offset="0" stop-color="#0053ff"/><stop offset="0.085" stop-color="#0040ff"/><stop offset="0.141" stop-color="#2735ff"/><stop offset="0.197" stop-color="#3b30ff"/><stop offset="0.338" stop-color="#581eff"/><stop offset="0.394" stop-color="#600eff"/><stop offset="0.423" stop-color="#6500ff"/><stop offset="0.676" stop-color="#8700ff"/><stop offset="1" stop-color="#a500ff"/></linearGradient>
<linearGradient id="i174"><stop offset="0" stop-color="#004fff"/><stop offset="0.091" stop-color="#003aff"/><stop offset="0.121" stop-color="#1330ff"/><stop offset="0.152" stop-color="#272eff"/><stop offset="0.182" stop-color="#322bff"/><stop offset="0.303" stop-color="#4e19ff"/><stop offset="0.333" stop-color="#5310ff"/><stop offset="0.364" stop-color="#5800ff"/><stop offset="0.636" stop-color="#7e00ff"/><stop offset="1" stop-color="#a000ff"/></linearGradient>
<linearGradient id="i175"><stop offset="0" stop-color="#0048ff"/><stop offset="0.102" stop-color="#002cff"/><stop offset="0.136" stop-color="#2026ff"/><stop offset="0.169" stop-color="#2d22ff"/><stop offset="0.237" stop-color="#3f16ff"/><stop offset="0.305" stop-color="#4c00ff"/><stop offset="0.576" stop-color="#7300ff"/><stop offset="1" stop-color="#9900ff"/></linearGradient>
<linearGradient id="i176"><stop offset="0" stop-color="#003fff"/><stop offset="0.075" stop-color="#002aff"/><stop offset="0.113" stop-color="#141aff"/><stop offset="0.151" stop-color="#2712ff"/><stop offset="0.189" stop-color="#3300ff"/><stop offset="0.302" stop-color="#4d00ff"/><stop offset="0.491" stop-color="#6700ff"/><stop offset="0.717" stop-color="#7e00ff"/><stop offset="1" stop-color="#9300ff"/></linearGradient>
<linearGradient id="i177"><stop offset="0" stop-color="#003aff"/><stop offset="0.085" stop-color="#001fff"/><stop offset="0.128" stop-color="#1d00ff"/><stop offset="0.17" stop-color="#2e00ff"/><stop offset="0.213" stop-color="#3a00ff"/><stop offset="0.383" stop-color="#5600ff"/><stop offset="0.638" stop-color="#7100ff"/><stop offset="1" stop-color="#8c00ff"/></linearGradient>
<linearGradient id="i178"><stop offset="0" stop-color="#002dff"/><stop offset="0.049" stop-color="#001bff"/><stop offset="0.098" stop-color="#2000ff"/><stop offset="0.195" stop-color="#3a00ff"/><stop offset="0.39" stop-color="#5600ff"/><stop offset="0.683" stop-color="#7100ff"/><stop offset="1" stop-color="#8600ff"/></linearGradient>
<linearGradient id="i179"><stop offset="0" stop-color="#0023ff"/><stop offset="0.057" stop-color="#1500ff"/><stop offset="0.114" stop-color="#2a00ff"/><stop offset="0.286" stop-color="#4700ff"/><stop offset="0.571" stop-color="#6300ff"/><stop offset="1" stop-color="#7e00ff"/></linearGradient>
<linearGradient id="i180"><stop offset="0" stop-color="#1900ff"/><stop offset="0.069" stop-color="#2c00ff"/><stop offset="0.276" stop-color="#4800ff"/><stop offset="0.621" stop-color="#6300ff"/><stop offset="1" stop-color="#7700ff"/></linearGradient>
<linearGradient id="i181"><stop offset="0" stop-color="#2e00ff"/><stop offset="0.364" stop-color="#4f00ff"/><stop offset="1" stop-color="#6f00ff"/></linearGradient>
<linearGradient id="i182"><stop offset="0" stop-color="#3400ff"/><stop offset="0.471" stop-color="#5200ff"/><stop offset="1" stop-color="#6600ff"/></linearGradient>
<linearGradient id="i183"><stop offset="0" stop-color="#3e00ff"/><stop offset="1" stop-color="#5c00ff"/></linearGradient>
</defs>
<rect x="0" y="0" width="925" height="871" fill="url(#frameg)"/>
<rect x="0" y="0" width="1" height="871" fill="#3c4c5e"/>
<rect x="1" y="0" width="1" height="871" fill="#e6eef8"/>
<rect x="924" y="0" width="1" height="871" fill="#2c3a4a"/>
<rect x="923" y="0" width="1" height="871" fill="#3e5468"/>
<rect x="922" y="0" width="1" height="871" fill="#7fd8f0"/>
<rect x="924" y="387" width="1" height="3" fill="#ffffff"/>
<rect x="924" y="390" width="1" height="4" fill="#ff1010"/>
<rect x="924" y="394" width="1" height="13" fill="#ffffff"/>
<rect x="924" y="407" width="1" height="9" fill="#f010f0"/>
<rect x="924" y="416" width="1" height="13" fill="#3030f0"/>
<rect x="924" y="429" width="1" height="9" fill="#ffffff"/>
<rect x="924" y="445" width="1" height="18" fill="#ffffff"/>
<rect x="13" y="13" width="24" height="24" fill="#000"/>
<linearGradient id="icg" x1="0" y1="0" x2="0" y2="1"><stop offset="0" stop-color="#000"/><stop offset="0.3" stop-color="#606060"/><stop offset="0.75" stop-color="#fff"/><stop offset="1" stop-color="#fff"/></linearGradient>
<rect x="13" y="13" width="24" height="24" fill="url(#icg)"/>
<rect x="16" y="20" width="5" height="17" fill="#8a0000"/><rect x="16" y="20" width="5" height="5" fill="#ff2020"/><rect x="16" y="25" width="5" height="4" fill="#d00030"/>
<rect x="23" y="17" width="4" height="20" fill="#007000"/><rect x="23" y="17" width="4" height="12" fill="#20e020"/>
<rect x="29" y="22" width="5" height="15" fill="#000090"/><rect x="29" y="22" width="5" height="8" fill="#2030e0"/>
<text x="41" y="33" font-family="Liberation Sans" font-size="17" fill="#1c2838" textLength="131" lengthAdjust="spacingAndGlyphs">Color Measures3</text>
<rect x="757.5" y="11.5" width="49" height="27" rx="3" ry="3" fill="#a3b9d5" stroke="#56667e" stroke-width="1"/><rect x="758" y="12" width="48" height="11" fill="#c6d8ef"/><rect x="758.5" y="12.5" width="47" height="25" rx="2" ry="2" fill="none" stroke="#e4eef9" stroke-width="1" opacity="0.6"/>
<rect x="809.5" y="11.5" width="49" height="27" rx="3" ry="3" fill="#a3b9d5" stroke="#56667e" stroke-width="1"/><rect x="810" y="12" width="48" height="11" fill="#c6d8ef"/><rect x="810.5" y="12.5" width="47" height="25" rx="2" ry="2" fill="none" stroke="#e4eef9" stroke-width="1" opacity="0.6"/>
<rect x="861.5" y="11.5" width="49" height="27" rx="3" ry="3" fill="#c1472b" stroke="#4a1410" stroke-width="1"/><rect x="862" y="12" width="48" height="11" fill="#e39888"/><rect x="862.5" y="12.5" width="47" height="25" rx="2" ry="2" fill="none" stroke="#f6c4b4" stroke-width="1" opacity="0.6"/>
<rect x="773.5" y="24.5" width="16" height="5" rx="1" fill="#f4f4f4" stroke="#353c48" stroke-width="1"/>
<rect x="825.5" y="18.5" width="16" height="14" rx="1" fill="#f4f4f4" stroke="#353c48" stroke-width="1"/>
<rect x="829.5" y="22.5" width="8" height="6" fill="#a4b8d2" stroke="#353c48" stroke-width="1"/>
<path d="M877.5,21 L880.5,18 L885.5,22.5 L890.5,18 L893.5,21 L889,25.2 L893.5,29.5 L890.5,32.5 L885.5,28 L880.5,32.5 L877.5,29.5 L882,25.2 Z" fill="#efefef" stroke="#2e3440" stroke-width="1.2" stroke-linejoin="round"/>
<rect x="11" y="43" width="902" height="807" fill="#ffffff"/>
<rect x="11" y="43" width="900" height="2" fill="#8c8c8c"/>
<rect x="11" y="43" width="2" height="804" fill="#8c8c8c"/>
<rect x="13" y="45" width="898" height="802" fill="#03090c"/>
<g clip-path="url(#chartclip)">
<g clip-path="url(#locclip)">
<rect x="157" y="131" width="40" height="3" fill="url(#o0)"/>
<rect x="149" y="134" width="61" height="3" fill="url(#o1)"/>
<rect x="142" y="137" width="78" height="3" fill="url(#o2)"/>
<rect x="137" y="140" width="91" height="3" fill="url(#o3)"/>
<rect x="132" y="143" width="103" height="3" fill="url(#o4)"/>
<rect x="127" y="146" width="114" height="3" fill="url(#o5)"/>
<rect x="122" y="149" width="125" height="3" fill="url(#o6)"/>
<rect x="118" y="152" width="136" height="3" fill="url(#o7)"/>
<rect x="115" y="155" width="145" height="3" fill="url(#o8)"/>
<rect x="113" y="158" width="153" height="3" fill="url(#o9)"/>
<rect x="110" y="161" width="161" height="3" fill="url(#o10)"/>
<rect x="108" y="164" width="168" height="3" fill="url(#o11)"/>
<rect x="107" y="167" width="173" height="3" fill="url(#o12)"/>
<rect x="106" y="170" width="179" height="3" fill="url(#o13)"/>
<rect x="105" y="173" width="185" height="3" fill="url(#o14)"/>
<rect x="103" y="176" width="192" height="3" fill="url(#o15)"/>
<rect x="102" y="179" width="197" height="3" fill="url(#o16)"/>
<rect x="100" y="182" width="204" height="3" fill="url(#o17)"/>
<rect x="99" y="185" width="209" height="3" fill="url(#o18)"/>
<rect x="98" y="188" width="215" height="3" fill="url(#o19)"/>
<rect x="97" y="191" width="220" height="3" fill="url(#o20)"/>
<rect x="96" y="194" width="226" height="3" fill="url(#o21)"/>
<rect x="96" y="197" width="230" height="3" fill="url(#o22)"/>
<rect x="95" y="200" width="236" height="3" fill="url(#o23)"/>
<rect x="95" y="203" width="240" height="3" fill="url(#o24)"/>
<rect x="94" y="206" width="245" height="3" fill="url(#o25)"/>
<rect x="94" y="209" width="250" height="3" fill="url(#o26)"/>
<rect x="93" y="212" width="255" height="3" fill="url(#o27)"/>
<rect x="93" y="215" width="259" height="3" fill="url(#o28)"/>
<rect x="92" y="218" width="264" height="3" fill="url(#o29)"/>
<rect x="92" y="221" width="269" height="3" fill="url(#o30)"/>
<rect x="91" y="224" width="274" height="3" fill="url(#o31)"/>
<rect x="91" y="227" width="278" height="3" fill="url(#o32)"/>
<rect x="91" y="230" width="282" height="3" fill="url(#o33)"/>
<rect x="90" y="233" width="287" height="3" fill="url(#o34)"/>
<rect x="90" y="236" width="291" height="3" fill="url(#o35)"/>
<rect x="90" y="239" width="295" height="3" fill="url(#o36)"/>
<rect x="90" y="242" width="299" height="3" fill="url(#o37)"/>
<rect x="89" y="245" width="304" height="3" fill="url(#o38)"/>
<rect x="89" y="248" width="308" height="3" fill="url(#o39)"/>
<rect x="89" y="251" width="312" height="3" fill="url(#o40)"/>
<rect x="89" y="254" width="315" height="3" fill="url(#o41)"/>
<rect x="89" y="257" width="319" height="3" fill="url(#o42)"/>
<rect x="89" y="260" width="323" height="3" fill="url(#o43)"/>
<rect x="88" y="263" width="328" height="3" fill="url(#o44)"/>
<rect x="88" y="266" width="331" height="3" fill="url(#o45)"/>
<rect x="88" y="269" width="335" height="3" fill="url(#o46)"/>
<rect x="88" y="272" width="339" height="3" fill="url(#o47)"/>
<rect x="88" y="275" width="343" height="3" fill="url(#o48)"/>
<rect x="88" y="278" width="346" height="3" fill="url(#o49)"/>
<rect x="88" y="281" width="350" height="3" fill="url(#o50)"/>
<rect x="88" y="284" width="354" height="3" fill="url(#o51)"/>
<rect x="88" y="287" width="358" height="3" fill="url(#o52)"/>
<rect x="88" y="290" width="362" height="3" fill="url(#o53)"/>
<rect x="88" y="293" width="366" height="3" fill="url(#o54)"/>
<rect x="88" y="296" width="370" height="3" fill="url(#o55)"/>
<rect x="88" y="299" width="374" height="3" fill="url(#o56)"/>
<rect x="88" y="302" width="377" height="3" fill="url(#o57)"/>
<rect x="88" y="305" width="381" height="3" fill="url(#o58)"/>
<rect x="88" y="308" width="385" height="3" fill="url(#o59)"/>
<rect x="88" y="311" width="389" height="3" fill="url(#o60)"/>
<rect x="88" y="314" width="393" height="3" fill="url(#o61)"/>
<rect x="88" y="317" width="396" height="3" fill="url(#o62)"/>
<rect x="88" y="320" width="400" height="3" fill="url(#o63)"/>
<rect x="88" y="323" width="403" height="3" fill="url(#o64)"/>
<rect x="88" y="326" width="407" height="3" fill="url(#o65)"/>
<rect x="88" y="329" width="411" height="3" fill="url(#o66)"/>
<rect x="88" y="332" width="414" height="3" fill="url(#o67)"/>
<rect x="88" y="335" width="418" height="3" fill="url(#o68)"/>
<rect x="88" y="338" width="421" height="3" fill="url(#o69)"/>
<rect x="88" y="341" width="425" height="3" fill="url(#o70)"/>
<rect x="88" y="344" width="428" height="3" fill="url(#o71)"/>
<rect x="89" y="347" width="431" height="3" fill="url(#o72)"/>
<rect x="89" y="350" width="435" height="3" fill="url(#o73)"/>
<rect x="89" y="353" width="438" height="3" fill="url(#o74)"/>
<rect x="89" y="356" width="442" height="3" fill="url(#o75)"/>
<rect x="89" y="359" width="446" height="3" fill="url(#o76)"/>
<rect x="89" y="362" width="449" height="3" fill="url(#o77)"/>
<rect x="90" y="365" width="452" height="3" fill="url(#o78)"/>
<rect x="90" y="368" width="456" height="3" fill="url(#o79)"/>
<rect x="90" y="371" width="460" height="3" fill="url(#o80)"/>
<rect x="90" y="374" width="464" height="3" fill="url(#o81)"/>
<rect x="90" y="377" width="468" height="3" fill="url(#o82)"/>
<rect x="91" y="380" width="471" height="3" fill="url(#o83)"/>
<rect x="91" y="383" width="475" height="3" fill="url(#o84)"/>
<rect x="91" y="386" width="478" height="3" fill="url(#o85)"/>
<rect x="91" y="389" width="482" height="3" fill="url(#o86)"/>
<rect x="92" y="392" width="485" height="3" fill="url(#o87)"/>
<rect x="92" y="395" width="489" height="3" fill="url(#o88)"/>
<rect x="92" y="398" width="492" height="3" fill="url(#o89)"/>
<rect x="93" y="401" width="495" height="3" fill="url(#o90)"/>
<rect x="93" y="404" width="499" height="3" fill="url(#o91)"/>
<rect x="93" y="407" width="503" height="3" fill="url(#o92)"/>
<rect x="94" y="410" width="505" height="3" fill="url(#o93)"/>
<rect x="94" y="413" width="509" height="3" fill="url(#o94)"/>
<rect x="94" y="416" width="513" height="3" fill="url(#o95)"/>
<rect x="95" y="419" width="516" height="3" fill="url(#o96)"/>
<rect x="95" y="422" width="519" height="3" fill="url(#o97)"/>
<rect x="96" y="425" width="522" height="3" fill="url(#o98)"/>
<rect x="96" y="428" width="526" height="3" fill="url(#o99)"/>
<rect x="97" y="431" width="529" height="3" fill="url(#o100)"/>
<rect x="97" y="434" width="532" height="3" fill="url(#o101)"/>
<rect x="98" y="437" width="535" height="3" fill="url(#o102)"/>
<rect x="98" y="440" width="539" height="3" fill="url(#o103)"/>
<rect x="99" y="443" width="542" height="3" fill="url(#o104)"/>
<rect x="99" y="446" width="545" height="3" fill="url(#o105)"/>
<rect x="100" y="449" width="548" height="3" fill="url(#o106)"/>
<rect x="100" y="452" width="552" height="3" fill="url(#o107)"/>
<rect x="101" y="455" width="554" height="3" fill="url(#o108)"/>
<rect x="101" y="458" width="558" height="3" fill="url(#o109)"/>
<rect x="102" y="461" width="561" height="3" fill="url(#o110)"/>
<rect x="103" y="464" width="563" height="3" fill="url(#o111)"/>
<rect x="103" y="467" width="567" height="3" fill="url(#o112)"/>
<rect x="104" y="470" width="570" height="3" fill="url(#o113)"/>
<rect x="105" y="473" width="573" height="3" fill="url(#o114)"/>
<rect x="105" y="476" width="576" height="3" fill="url(#o115)"/>
<rect x="106" y="479" width="579" height="3" fill="url(#o116)"/>
<rect x="107" y="482" width="582" height="3" fill="url(#o117)"/>
<rect x="107" y="485" width="585" height="3" fill="url(#o118)"/>
<rect x="108" y="488" width="588" height="3" fill="url(#o119)"/>
<rect x="109" y="491" width="591" height="3" fill="url(#o120)"/>
<rect x="109" y="494" width="595" height="3" fill="url(#o121)"/>
<rect x="110" y="497" width="597" height="3" fill="url(#o122)"/>
<rect x="111" y="500" width="600" height="3" fill="url(#o123)"/>
<rect x="111" y="503" width="604" height="3" fill="url(#o124)"/>
<rect x="112" y="506" width="607" height="3" fill="url(#o125)"/>
<rect x="112" y="509" width="610" height="3" fill="url(#o126)"/>
<rect x="113" y="512" width="613" height="3" fill="url(#o127)"/>
<rect x="114" y="515" width="616" height="3" fill="url(#o128)"/>
<rect x="114" y="518" width="620" height="3" fill="url(#o129)"/>
<rect x="115" y="521" width="622" height="3" fill="url(#o130)"/>
<rect x="116" y="524" width="625" height="3" fill="url(#o131)"/>
<rect x="116" y="527" width="629" height="3" fill="url(#o132)"/>
<rect x="117" y="530" width="632" height="3" fill="url(#o133)"/>
<rect x="118" y="533" width="634" height="3" fill="url(#o134)"/>
<rect x="119" y="536" width="637" height="3" fill="url(#o135)"/>
<rect x="119" y="539" width="641" height="3" fill="url(#o136)"/>
<rect x="120" y="542" width="644" height="3" fill="url(#o137)"/>
<rect x="121" y="545" width="647" height="3" fill="url(#o138)"/>
<rect x="122" y="548" width="649" height="3" fill="url(#o139)"/>
<rect x="123" y="551" width="652" height="3" fill="url(#o140)"/>
<rect x="124" y="554" width="655" height="3" fill="url(#o141)"/>
<rect x="125" y="557" width="657" height="3" fill="url(#o142)"/>
<rect x="126" y="560" width="660" height="3" fill="url(#o143)"/>
<rect x="127" y="563" width="663" height="3" fill="url(#o144)"/>
<rect x="128" y="566" width="665" height="3" fill="url(#o145)"/>
<rect x="129" y="569" width="668" height="3" fill="url(#o146)"/>
<rect x="130" y="572" width="671" height="3" fill="url(#o147)"/>
<rect x="131" y="575" width="674" height="3" fill="url(#o148)"/>
<rect x="132" y="578" width="677" height="3" fill="url(#o149)"/>
<rect x="133" y="581" width="679" height="3" fill="url(#o150)"/>
<rect x="135" y="584" width="677" height="3" fill="url(#o151)"/>
<rect x="136" y="587" width="670" height="3" fill="url(#o152)"/>
<rect x="137" y="590" width="661" height="3" fill="url(#o153)"/>
<rect x="138" y="593" width="652" height="3" fill="url(#o154)"/>
<rect x="139" y="596" width="643" height="3" fill="url(#o155)"/>
<rect x="140" y="599" width="634" height="3" fill="url(#o156)"/>
<rect x="141" y="602" width="625" height="3" fill="url(#o157)"/>
<rect x="142" y="605" width="616" height="3" fill="url(#o158)"/>
<rect x="143" y="608" width="607" height="3" fill="url(#o159)"/>
<rect x="144" y="611" width="598" height="3" fill="url(#o160)"/>
<rect x="145" y="614" width="589" height="3" fill="url(#o161)"/>
<rect x="147" y="617" width="579" height="3" fill="url(#o162)"/>
<rect x="148" y="620" width="570" height="3" fill="url(#o163)"/>
<rect x="149" y="623" width="561" height="3" fill="url(#o164)"/>
<rect x="150" y="626" width="552" height="3" fill="url(#o165)"/>
<rect x="151" y="629" width="543" height="3" fill="url(#o166)"/>
<rect x="152" y="632" width="534" height="3" fill="url(#o167)"/>
<rect x="153" y="635" width="524" height="3" fill="url(#o168)"/>
<rect x="154" y="638" width="515" height="3" fill="url(#o169)"/>
<rect x="155" y="641" width="506" height="3" fill="url(#o170)"/>
<rect x="156" y="644" width="497" height="3" fill="url(#o171)"/>
<rect x="157" y="647" width="488" height="3" fill="url(#o172)"/>
<rect x="158" y="650" width="479" height="3" fill="url(#o173)"/>
<rect x="159" y="653" width="470" height="3" fill="url(#o174)"/>
<rect x="161" y="656" width="460" height="3" fill="url(#o175)"/>
<rect x="162" y="659" width="451" height="3" fill="url(#o176)"/>
<rect x="163" y="662" width="442" height="3" fill="url(#o177)"/>
<rect x="164" y="665" width="433" height="3" fill="url(#o178)"/>
<rect x="165" y="668" width="424" height="3" fill="url(#o179)"/>
<rect x="166" y="671" width="415" height="3" fill="url(#o180)"/>
<rect x="167" y="674" width="406" height="3" fill="url(#o181)"/>
<rect x="169" y="677" width="396" height="3" fill="url(#o182)"/>
<rect x="170" y="680" width="387" height="3" fill="url(#o183)"/>
<rect x="171" y="683" width="378" height="3" fill="url(#o184)"/>
<rect x="172" y="686" width="369" height="3" fill="url(#o185)"/>
<rect x="173" y="689" width="360" height="3" fill="url(#o186)"/>
<rect x="175" y="692" width="350" height="3" fill="url(#o187)"/>
<rect x="176" y="695" width="340" height="3" fill="url(#o188)"/>
<rect x="177" y="698" width="331" height="3" fill="url(#o189)"/>
<rect x="178" y="701" width="322" height="3" fill="url(#o190)"/>
<rect x="180" y="704" width="312" height="3" fill="url(#o191)"/>
<rect x="181" y="707" width="303" height="3" fill="url(#o192)"/>
<rect x="183" y="710" width="293" height="3" fill="url(#o193)"/>
<rect x="184" y="713" width="284" height="3" fill="url(#o194)"/>
<rect x="185" y="716" width="275" height="3" fill="url(#o195)"/>
<rect x="187" y="719" width="265" height="3" fill="url(#o196)"/>
<rect x="188" y="722" width="256" height="3" fill="url(#o197)"/>
<rect x="190" y="725" width="246" height="3" fill="url(#o198)"/>
<rect x="192" y="728" width="236" height="3" fill="url(#o199)"/>
<rect x="193" y="731" width="227" height="3" fill="url(#o200)"/>
<rect x="195" y="734" width="217" height="3" fill="url(#o201)"/>
<rect x="197" y="737" width="207" height="3" fill="url(#o202)"/>
<rect x="198" y="740" width="198" height="3" fill="url(#o203)"/>
<rect x="200" y="743" width="188" height="3" fill="url(#o204)"/>
<rect x="202" y="746" width="178" height="3" fill="url(#o205)"/>
<rect x="204" y="749" width="168" height="3" fill="url(#o206)"/>
<rect x="206" y="752" width="157" height="3" fill="url(#o207)"/>
<rect x="208" y="755" width="147" height="3" fill="url(#o208)"/>
<rect x="210" y="758" width="137" height="3" fill="url(#o209)"/>
<rect x="213" y="761" width="126" height="3" fill="url(#o210)"/>
<rect x="215" y="764" width="116" height="3" fill="url(#o211)"/>
<rect x="218" y="767" width="105" height="3" fill="url(#o212)"/>
<rect x="220" y="770" width="95" height="3" fill="url(#o213)"/>
<rect x="223" y="773" width="84" height="3" fill="url(#o214)"/>
<rect x="225" y="776" width="74" height="3" fill="url(#o215)"/>
<rect x="227" y="779" width="64" height="3" fill="url(#o216)"/>
<rect x="229" y="782" width="54" height="3" fill="url(#o217)"/>
<rect x="231" y="785" width="44" height="3" fill="url(#o218)"/>
<rect x="233" y="788" width="34" height="3" fill="url(#o219)"/>
<rect x="236" y="791" width="23" height="3" fill="url(#o220)"/>
</g>
<rect x="87" y="45" width="1" height="802" fill="#464646"/>
<rect x="187" y="45" width="1" height="802" fill="#464646"/>
<rect x="287" y="45" width="1" height="802" fill="#464646"/>
<rect x="387" y="45" width="1" height="802" fill="#464646"/>
<rect x="486" y="45" width="1" height="802" fill="#464646"/>
<rect x="586" y="45" width="1" height="802" fill="#464646"/>
<rect x="686" y="45" width="1" height="802" fill="#464646"/>
<rect x="786" y="45" width="1" height="802" fill="#464646"/>
<rect x="13" y="726" width="898" height="1" fill="#464646"/>
<rect x="13" y="646" width="898" height="1" fill="#464646"/>
<rect x="13" y="566" width="898" height="1" fill="#464646"/>
<rect x="13" y="486" width="898" height="1" fill="#464646"/>
<rect x="13" y="405" width="898" height="1" fill="#464646"/>
<rect x="13" y="325" width="898" height="1" fill="#464646"/>
<rect x="13" y="245" width="898" height="1" fill="#464646"/>
<rect x="13" y="165" width="898" height="1" fill="#464646"/>
<rect x="13" y="85" width="898" height="1" fill="#464646"/>
<g clip-path="url(#triclip)">
<rect x="303" y="227" width="9" height="3" fill="url(#i0)"/>
<rect x="302" y="230" width="14" height="3" fill="url(#i1)"/>
<rect x="302" y="233" width="19" height="3" fill="url(#i2)"/>
<rect x="302" y="236" width="23" height="3" fill="url(#i3)"/>
<rect x="301" y="239" width="28" height="3" fill="url(#i4)"/>
<rect x="301" y="242" width="33" height="3" fill="url(#i5)"/>
<rect x="300" y="245" width="38" height="3" fill="url(#i6)"/>
<rect x="300" y="248" width="42" height="3" fill="url(#i7)"/>
<rect x="300" y="251" width="46" height="3" fill="url(#i8)"/>
<rect x="299" y="254" width="52" height="3" fill="url(#i9)"/>
<rect x="299" y="257" width="56" height="3" fill="url(#i10)"/>
<rect x="298" y="260" width="61" height="3" fill="url(#i11)"/>
<rect x="298" y="263" width="66" height="3" fill="url(#i12)"/>
<rect x="298" y="266" width="70" height="3" fill="url(#i13)"/>
<rect x="297" y="269" width="75" height="3" fill="url(#i14)"/>
<rect x="297" y="272" width="79" height="3" fill="url(#i15)"/>
<rect x="296" y="275" width="85" height="3" fill="url(#i16)"/>
<rect x="296" y="278" width="89" height="3" fill="url(#i17)"/>
<rect x="296" y="281" width="93" height="3" fill="url(#i18)"/>
<rect x="295" y="284" width="99" height="3" fill="url(#i19)"/>
<rect x="295" y="287" width="103" height="3" fill="url(#i20)"/>
<rect x="294" y="290" width="108" height="3" fill="url(#i21)"/>
<rect x="294" y="293" width="112" height="3" fill="url(#i22)"/>
<rect x="293" y="296" width="118" height="3" fill="url(#i23)"/>
<rect x="293" y="299" width="122" height="3" fill="url(#i24)"/>
<rect x="293" y="302" width="126" height="3" fill="url(#i25)"/>
<rect x="292" y="305" width="132" height="3" fill="url(#i26)"/>
<rect x="292" y="308" width="136" height="3" fill="url(#i27)"/>
<rect x="291" y="311" width="141" height="3" fill="url(#i28)"/>
<rect x="291" y="314" width="145" height="3" fill="url(#i29)"/>
<rect x="291" y="317" width="150" height="3" fill="url(#i30)"/>
<rect x="290" y="320" width="155" height="3" fill="url(#i31)"/>
<rect x="290" y="323" width="159" height="3" fill="url(#i32)"/>
<rect x="289" y="326" width="165" height="3" fill="url(#i33)"/>
<rect x="289" y="329" width="169" height="3" fill="url(#i34)"/>
<rect x="289" y="332" width="173" height="3" fill="url(#i35)"/>
<rect x="288" y="335" width="178" height="3" fill="url(#i36)"/>
<rect x="288" y="338" width="183" height="3" fill="url(#i37)"/>
<rect x="287" y="341" width="188" height="3" fill="url(#i38)"/>
<rect x="287" y="344" width="192" height="3" fill="url(#i39)"/>
<rect x="287" y="347" width="197" height="3" fill="url(#i40)"/>
<rect x="286" y="350" width="202" height="3" fill="url(#i41)"/>
<rect x="286" y="353" width="206" height="3" fill="url(#i42)"/>
<rect x="285" y="356" width="211" height="3" fill="url(#i43)"/>
<rect x="285" y="359" width="216" height="3" fill="url(#i44)"/>
<rect x="285" y="362" width="220" height="3" fill="url(#i45)"/>
<rect x="284" y="365" width="225" height="3" fill="url(#i46)"/>
<rect x="284" y="368" width="230" height="3" fill="url(#i47)"/>
<rect x="283" y="371" width="235" height="3" fill="url(#i48)"/>
<rect x="283" y="374" width="239" height="3" fill="url(#i49)"/>
<rect x="283" y="377" width="243" height="3" fill="url(#i50)"/>
<rect x="282" y="380" width="249" height="3" fill="url(#i51)"/>
<rect x="282" y="383" width="253" height="3" fill="url(#i52)"/>
<rect x="281" y="386" width="258" height="3" fill="url(#i53)"/>
<rect x="281" y="389" width="263" height="3" fill="url(#i54)"/>
<rect x="281" y="392" width="267" height="3" fill="url(#i55)"/>
<rect x="280" y="395" width="272" height="3" fill="url(#i56)"/>
<rect x="280" y="398" width="276" height="3" fill="url(#i57)"/>
<rect x="279" y="401" width="282" height="3" fill="url(#i58)"/>
<rect x="279" y="404" width="286" height="3" fill="url(#i59)"/>
<rect x="279" y="407" width="290" height="3" fill="url(#i60)"/>
<rect x="278" y="410" width="296" height="3" fill="url(#i61)"/>
<rect x="278" y="413" width="300" height="3" fill="url(#i62)"/>
<rect x="277" y="416" width="305" height="3" fill="url(#i63)"/>
<rect x="277" y="419" width="309" height="3" fill="url(#i64)"/>
<rect x="277" y="422" width="314" height="3" fill="url(#i65)"/>
<rect x="276" y="425" width="319" height="3" fill="url(#i66)"/>
<rect x="276" y="428" width="323" height="3" fill="url(#i67)"/>
<rect x="275" y="431" width="329" height="3" fill="url(#i68)"/>
<rect x="275" y="434" width="333" height="3" fill="url(#i69)"/>
<rect x="274" y="437" width="338" height="3" fill="url(#i70)"/>
<rect x="274" y="440" width="342" height="3" fill="url(#i71)"/>
<rect x="274" y="443" width="347" height="3" fill="url(#i72)"/>
<rect x="273" y="446" width="352" height="3" fill="url(#i73)"/>
<rect x="273" y="449" width="356" height="3" fill="url(#i74)"/>
<rect x="272" y="452" width="362" height="3" fill="url(#i75)"/>
<rect x="272" y="455" width="366" height="3" fill="url(#i76)"/>
<rect x="272" y="458" width="370" height="3" fill="url(#i77)"/>
<rect x="271" y="461" width="375" height="3" fill="url(#i78)"/>
<rect x="271" y="464" width="380" height="3" fill="url(#i79)"/>
<rect x="270" y="467" width="385" height="3" fill="url(#i80)"/>
<rect x="270" y="470" width="389" height="3" fill="url(#i81)"/>
<rect x="270" y="473" width="394" height="3" fill="url(#i82)"/>
<rect x="269" y="476" width="399" height="3" fill="url(#i83)"/>
<rect x="269" y="479" width="403" height="3" fill="url(#i84)"/>
<rect x="268" y="482" width="408" height="3" fill="url(#i85)"/>
<rect x="268" y="485" width="413" height="3" fill="url(#i86)"/>
<rect x="268" y="488" width="417" height="3" fill="url(#i87)"/>
<rect x="267" y="491" width="422" height="3" fill="url(#i88)"/>
<rect x="267" y="494" width="426" height="3" fill="url(#i89)"/>
<rect x="266" y="497" width="432" height="3" fill="url(#i90)"/>
<rect x="266" y="500" width="436" height="3" fill="url(#i91)"/>
<rect x="266" y="503" width="440" height="3" fill="url(#i92)"/>
<rect x="265" y="506" width="446" height="3" fill="url(#i93)"/>
<rect x="265" y="509" width="450" height="3" fill="url(#i94)"/>
<rect x="264" y="512" width="455" height="3" fill="url(#i95)"/>
<rect x="264" y="515" width="459" height="3" fill="url(#i96)"/>
<rect x="264" y="518" width="464" height="3" fill="url(#i97)"/>
<rect x="263" y="521" width="469" height="3" fill="url(#i98)"/>
<rect x="263" y="524" width="473" height="3" fill="url(#i99)"/>
<rect x="262" y="527" width="479" height="3" fill="url(#i100)"/>
<rect x="262" y="530" width="483" height="3" fill="url(#i101)"/>
<rect x="262" y="533" width="487" height="3" fill="url(#i102)"/>
<rect x="261" y="536" width="492" height="3" fill="url(#i103)"/>
<rect x="261" y="539" width="492" height="3" fill="url(#i104)"/>
<rect x="260" y="542" width="487" height="3" fill="url(#i105)"/>
<rect x="260" y="545" width="480" height="3" fill="url(#i106)"/>
<rect x="260" y="548" width="474" height="3" fill="url(#i107)"/>
<rect x="259" y="551" width="468" height="3" fill="url(#i108)"/>
<rect x="259" y="554" width="462" height="3" fill="url(#i109)"/>
<rect x="258" y="557" width="456" height="3" fill="url(#i110)"/>
<rect x="258" y="560" width="450" height="3" fill="url(#i111)"/>
<rect x="258" y="563" width="443" height="3" fill="url(#i112)"/>
<rect x="257" y="566" width="438" height="3" fill="url(#i113)"/>
<rect x="257" y="569" width="431" height="3" fill="url(#i114)"/>
<rect x="256" y="572" width="426" height="3" fill="url(#i115)"/>
<rect x="256" y="575" width="419" height="3" fill="url(#i116)"/>
<rect x="255" y="578" width="414" height="3" fill="url(#i117)"/>
<rect x="255" y="581" width="407" height="3" fill="url(#i118)"/>
<rect x="255" y="584" width="401" height="3" fill="url(#i119)"/>
<rect x="254" y="587" width="395" height="3" fill="url(#i120)"/>
<rect x="254" y="590" width="389" height="3" fill="url(#i121)"/>
<rect x="253" y="593" width="383" height="3" fill="url(#i122)"/>
<rect x="253" y="596" width="377" height="3" fill="url(#i123)"/>
<rect x="253" y="599" width="370" height="3" fill="url(#i124)"/>
<rect x="252" y="602" width="365" height="3" fill="url(#i125)"/>
<rect x="252" y="605" width="358" height="3" fill="url(#i126)"/>
<rect x="251" y="608" width="353" height="3" fill="url(#i127)"/>
<rect x="251" y="611" width="346" height="3" fill="url(#i128)"/>
<rect x="251" y="614" width="340" height="3" fill="url(#i129)"/>
<rect x="250" y="617" width="334" height="3" fill="url(#i130)"/>
<rect x="250" y="620" width="328" height="3" fill="url(#i131)"/>
<rect x="249" y="623" width="322" height="3" fill="url(#i132)"/>
<rect x="249" y="626" width="316" height="3" fill="url(#i133)"/>
<rect x="249" y="629" width="309" height="3" fill="url(#i134)"/>
<rect x="248" y="632" width="304" height="3" fill="url(#i135)"/>
<rect x="248" y="635" width="297" height="3" fill="url(#i136)"/>
<rect x="247" y="638" width="292" height="3" fill="url(#i137)"/>
<rect x="247" y="641" width="285" height="3" fill="url(#i138)"/>
<rect x="247" y="644" width="279" height="3" fill="url(#i139)"/>
<rect x="246" y="647" width="273" height="3" fill="url(#i140)"/>
<rect x="246" y="650" width="267" height="3" fill="url(#i141)"/>
<rect x="245" y="653" width="261" height="3" fill="url(#i142)"/>
<rect x="245" y="656" width="255" height="3" fill="url(#i143)"/>
<rect x="245" y="659" width="248" height="3" fill="url(#i144)"/>
<rect x="244" y="662" width="243" height="3" fill="url(#i145)"/>
<rect x="244" y="665" width="236" height="3" fill="url(#i146)"/>
<rect x="243" y="668" width="231" height="3" fill="url(#i147)"/>
<rect x="243" y="671" width="224" height="3" fill="url(#i148)"/>
<rect x="243" y="674" width="218" height="3" fill="url(#i149)"/>
<rect x="242" y="677" width="212" height="3" fill="url(#i150)"/>
<rect x="242" y="680" width="206" height="3" fill="url(#i151)"/>
<rect x="241" y="683" width="200" height="3" fill="url(#i152)"/>
<rect x="241" y="686" width="194" height="3" fill="url(#i153)"/>
<rect x="241" y="689" width="187" height="3" fill="url(#i154)"/>
<rect x="240" y="692" width="181" height="3" fill="url(#i155)"/>
<rect x="240" y="695" width="175" height="3" fill="url(#i156)"/>
<rect x="239" y="698" width="169" height="3" fill="url(#i157)"/>
<rect x="239" y="701" width="163" height="3" fill="url(#i158)"/>
<rect x="239" y="704" width="156" height="3" fill="url(#i159)"/>
<rect x="238" y="707" width="151" height="3" fill="url(#i160)"/>
<rect x="238" y="710" width="144" height="3" fill="url(#i161)"/>
<rect x="237" y="713" width="139" height="3" fill="url(#i162)"/>
<rect x="237" y="716" width="132" height="3" fill="url(#i163)"/>
<rect x="236" y="719" width="127" height="3" fill="url(#i164)"/>
<rect x="236" y="722" width="120" height="3" fill="url(#i165)"/>
<rect x="236" y="725" width="114" height="3" fill="url(#i166)"/>
<rect x="235" y="728" width="108" height="3" fill="url(#i167)"/>
<rect x="235" y="731" width="102" height="3" fill="url(#i168)"/>
<rect x="234" y="734" width="96" height="3" fill="url(#i169)"/>
<rect x="234" y="737" width="90" height="3" fill="url(#i170)"/>
<rect x="234" y="740" width="83" height="3" fill="url(#i171)"/>
<rect x="233" y="743" width="78" height="3" fill="url(#i172)"/>
<rect x="233" y="746" width="71" height="3" fill="url(#i173)"/>
<rect x="232" y="749" width="66" height="3" fill="url(#i174)"/>
<rect x="232" y="752" width="59" height="3" fill="url(#i175)"/>
<rect x="232" y="755" width="53" height="3" fill="url(#i176)"/>
<rect x="231" y="758" width="47" height="3" fill="url(#i177)"/>
<rect x="231" y="761" width="41" height="3" fill="url(#i178)"/>
<rect x="230" y="764" width="35" height="3" fill="url(#i179)"/>
<rect x="230" y="767" width="29" height="3" fill="url(#i180)"/>
<rect x="230" y="770" width="22" height="3" fill="url(#i181)"/>
<rect x="229" y="773" width="17" height="3" fill="url(#i182)"/>
<rect x="229" y="776" width="10" height="3" fill="url(#i183)"/>
</g>
<polygon points="250.0,793.0 244.0,793.5 238.0,790.0 235.9,787.1 233.6,783.3 230.9,779.1 227.9,774.7 225.6,771.9 223.1,769.0 220.4,766.1 217.6,762.9 214.7,759.4 211.8,755.4 209.8,752.4 207.7,749.2 205.5,745.7 203.3,742.1 201.0,738.4 198.8,734.6 196.6,730.8 194.5,727.0 192.5,723.2 190.6,719.5 188.7,715.7 186.9,711.9 185.1,708.1 183.4,704.2 181.6,700.3 179.9,696.2 178.2,692.1 176.4,687.9 174.9,684.4 173.5,680.7 172.0,677.0 170.6,673.3 169.1,669.5 167.7,665.6 166.2,661.7 164.8,657.8 163.3,653.9 161.9,650.0 160.4,646.0 158.9,642.0 157.4,637.9 155.9,633.7 154.4,629.5 152.9,625.2 151.4,621.0 149.9,616.8 148.5,612.7 147.0,608.6 145.6,604.7 144.3,601.0 142.7,596.6 141.1,592.3 139.6,588.1 138.1,584.0 136.6,580.1 135.2,576.3 133.9,572.6 132.6,569.1 131.4,565.7 129.8,561.4 128.6,558.1 127.4,555.0 126.3,551.7 125.0,547.5 123.5,541.9 122.7,538.9 121.9,535.6 121.1,531.9 120.2,528.1 119.3,524.0 118.3,519.8 117.4,515.5 116.4,511.2 115.5,506.9 114.6,502.6 113.7,498.4 112.8,494.4 112.0,490.6 111.2,487.0 110.2,482.3 109.2,477.9 108.3,473.6 107.4,469.5 106.5,465.6 105.7,461.6 104.9,457.7 104.1,453.8 103.3,449.9 102.6,445.8 101.9,441.7 101.2,437.5 100.5,433.4 99.8,429.3 99.2,425.2 98.6,421.0 98.0,416.9 97.4,412.8 96.9,408.6 96.4,404.5 95.9,400.4 95.5,396.2 95.1,392.0 94.8,387.8 94.4,383.7 94.1,379.5 93.8,375.4 93.5,371.3 93.3,367.2 93.0,363.2 92.7,358.9 92.5,354.6 92.2,350.5 92.0,346.4 91.8,342.3 91.6,338.1 91.4,333.9 91.3,329.5 91.2,325.0 91.1,321.1 91.1,317.1 91.1,312.9 91.1,308.6 91.1,304.3 91.1,300.0 91.1,295.8 91.2,291.6 91.2,287.5 91.3,283.5 91.4,279.8 91.6,274.8 91.7,269.9 92.0,265.1 92.2,260.6 92.5,256.2 92.7,252.1 93.0,248.3 93.2,244.9 93.6,239.5 93.9,235.5 94.2,232.1 94.7,228.4 95.3,224.3 96.0,220.3 96.7,216.2 97.5,211.8 98.1,207.9 98.7,203.7 99.4,199.4 100.2,195.3 101.1,191.6 103.1,186.2 105.4,181.5 107.6,177.0 109.3,172.8 110.9,168.9 113.1,165.0 115.4,162.0 118.0,158.9 121.0,155.9 124.1,153.1 127.5,150.6 131.2,148.2 135.0,146.0 138.8,143.9 142.5,141.8 146.2,139.9 149.8,138.1 153.5,136.5 158.2,134.7 162.9,133.4 168.2,132.5 171.9,132.3 176.1,132.3 180.3,132.5 184.5,132.8 188.4,133.2 192.8,133.8 197.0,134.6 201.0,135.5 204.9,136.5 209.7,137.8 214.3,139.2 219.6,141.1 223.2,142.6 227.0,144.2 231.1,146.0 235.5,148.0 240.2,150.3 243.2,151.7 246.0,153.0 248.9,154.3 252.0,155.7 255.4,157.4 259.2,159.4 263.7,161.9 268.9,165.0 271.5,166.6 274.3,168.3 277.3,170.2 280.5,172.2 283.8,174.3 287.2,176.5 290.8,178.8 294.4,181.1 298.0,183.5 301.8,186.0 305.5,188.4 309.2,190.9 312.9,193.3 316.6,195.8 320.2,198.2 323.8,200.6 327.2,202.9 330.5,205.2 333.9,207.6 337.4,210.0 340.8,212.4 344.3,214.8 347.7,217.2 351.1,219.7 354.5,222.1 357.9,224.5 361.2,226.9 364.5,229.3 367.7,231.7 370.9,234.0 374.0,236.3 377.0,238.6 380.0,240.8 382.9,243.0 385.7,245.1 389.5,248.0 393.1,250.7 396.5,253.4 399.7,256.0 402.8,258.5 405.9,260.9 408.9,263.4 411.9,265.8 414.9,268.3 418.0,270.8 421.2,273.3 424.6,276.0 427.9,278.6 431.3,281.3 434.9,284.0 438.6,286.9 442.3,289.7 446.0,292.6 449.6,295.4 453.2,298.2 456.7,300.9 460.0,303.4 463.0,305.8 465.9,308.0 468.4,310.0 473.2,313.8 476.1,316.2 478.5,318.1 481.4,320.6 486.2,324.6 488.6,326.6 491.2,328.7 494.0,331.1 497.1,333.7 500.3,336.4 503.7,339.2 507.1,342.1 510.5,344.9 514.0,347.8 517.4,350.7 520.8,353.5 524.0,356.1 527.1,358.7 530.0,361.0 533.6,363.9 536.9,366.5 539.9,368.8 542.7,371.0 545.5,373.1 548.5,375.4 551.6,377.8 555.2,380.6 559.3,383.8 564.0,387.5 566.5,389.5 569.1,391.6 571.9,393.8 574.8,396.1 577.9,398.5 581.0,401.0 584.2,403.6 587.5,406.2 590.9,408.9 594.3,411.6 597.7,414.4 601.2,417.2 604.7,419.9 608.1,422.7 611.6,425.5 615.1,428.3 618.5,431.0 621.8,433.7 625.1,436.4 628.4,439.0 631.5,441.5 634.7,444.1 638.0,446.7 641.2,449.3 644.4,451.9 647.6,454.5 650.8,457.1 654.0,459.7 657.1,462.3 660.3,464.8 663.4,467.4 666.5,469.9 669.6,472.4 672.7,474.9 675.8,477.4 678.8,479.9 681.9,482.4 684.9,484.8 687.9,487.2 690.9,489.6 693.8,492.0 697.3,494.8 700.9,497.7 704.5,500.6 708.1,503.5 711.8,506.4 715.5,509.3 719.1,512.2 722.7,515.1 726.2,517.9 729.6,520.6 732.8,523.2 736.0,525.7 739.0,528.1 741.8,530.3 744.4,532.4 746.8,534.3 749.0,536.0 755.1,540.8 757.7,542.8 759.5,544.2 763.0,547.0 765.9,549.3 769.1,552.0 772.7,554.9 776.5,558.0 780.3,561.1 784.0,564.1 787.5,567.0 790.6,569.5 794.5,572.6 798.2,575.6 801.8,578.4 804.9,580.9 807.5,583.0 809.5,584.5" fill="none" stroke="#ffac00" stroke-width="1.7" stroke-linejoin="round"/>
<line x1="399.5" y1="44" x2="399.5" y2="847" stroke="#d0d0d0" stroke-width="1" stroke-dasharray="3,3"/>
<line x1="12" y1="543.5" x2="911" y2="543.5" stroke="#d0d0d0" stroke-width="1" stroke-dasharray="3,3"/>
<line x1="382.5" y1="561.5" x2="306.5" y2="228.5" stroke="#202020" stroke-width="1" stroke-dasharray="3,3"/>
<line x1="382.5" y1="561.5" x2="750.0" y2="539.0" stroke="#202020" stroke-width="1" stroke-dasharray="3,3"/>
<line x1="382.5" y1="561.5" x2="232.5" y2="777.5" stroke="#202020" stroke-width="1" stroke-dasharray="3,3"/>
<line x1="382.5" y1="561.5" x2="514.0" y2="375.0" stroke="#202020" stroke-width="1" stroke-dasharray="3,3"/>
<line x1="382.5" y1="561.5" x2="260.5" y2="571.0" stroke="#202020" stroke-width="1" stroke-dasharray="3,3"/>
<line x1="382.5" y1="561.5" x2="413.7" y2="694.0" stroke="#202020" stroke-width="1" stroke-dasharray="3,3"/>
<linearGradient id="lgr" gradientUnits="userSpaceOnUse" x1="387.3" y1="325.3" x2="725.6" y2="541.8"><stop offset="0.000" stop-color="#008000"/><stop offset="0.105" stop-color="#008000"/><stop offset="0.105" stop-color="#808000"/><stop offset="0.715" stop-color="#808000"/><stop offset="0.715" stop-color="#800000"/><stop offset="1.000" stop-color="#800000"/></linearGradient>
<line x1="387.3" y1="325.3" x2="725.6" y2="541.8" stroke="url(#lgr)" stroke-width="3"/>
<linearGradient id="lgb" gradientUnits="userSpaceOnUse" x1="387.3" y1="325.3" x2="237.5" y2="758.5"><stop offset="0.000" stop-color="#008000"/><stop offset="0.220" stop-color="#008000"/><stop offset="0.220" stop-color="#008080"/><stop offset="0.370" stop-color="#008080"/><stop offset="0.370" stop-color="#808080"/><stop offset="0.510" stop-color="#808080"/><stop offset="0.510" stop-color="#008080"/><stop offset="0.800" stop-color="#008080"/><stop offset="0.800" stop-color="#000080"/><stop offset="1.000" stop-color="#000080"/></linearGradient>
<line x1="387.3" y1="325.3" x2="237.5" y2="758.5" stroke="url(#lgb)" stroke-width="3"/>
<linearGradient id="lbr" gradientUnits="userSpaceOnUse" x1="237.5" y1="758.5" x2="725.6" y2="541.8"><stop offset="0.000" stop-color="#000080"/><stop offset="0.120" stop-color="#000080"/><stop offset="0.120" stop-color="#800080"/><stop offset="0.710" stop-color="#800080"/><stop offset="0.710" stop-color="#800000"/><stop offset="1.000" stop-color="#800000"/></linearGradient>
<line x1="237.5" y1="758.5" x2="725.6" y2="541.8" stroke="url(#lbr)" stroke-width="3"/>
<text x="189" y="843" font-family="Liberation Mono" font-size="13" fill="#e8e8e8">0.1</text>
<text x="289" y="843" font-family="Liberation Mono" font-size="13" fill="#e8e8e8">0.2</text>
<text x="389" y="843" font-family="Liberation Mono" font-size="13" fill="#e8e8e8">0.3</text>
<text x="488" y="843" font-family="Liberation Mono" font-size="13" fill="#e8e8e8">0.4</text>
<text x="588" y="843" font-family="Liberation Mono" font-size="13" fill="#e8e8e8">0.5</text>
<text x="688" y="843" font-family="Liberation Mono" font-size="13" fill="#e8e8e8">0.6</text>
<text x="788" y="843" font-family="Liberation Mono" font-size="13" fill="#e8e8e8">0.7</text>
<text x="16" y="722" font-family="Liberation Mono" font-size="13" fill="#e8e8e8">0.1</text>
<text x="16" y="642" font-family="Liberation Mono" font-size="13" fill="#e8e8e8">0.2</text>
<text x="16" y="562" font-family="Liberation Mono" font-size="13" fill="#e8e8e8">0.3</text>
<text x="16" y="482" font-family="Liberation Mono" font-size="13" fill="#e8e8e8">0.4</text>
<text x="16" y="401" font-family="Liberation Mono" font-size="13" fill="#e8e8e8">0.5</text>
<text x="16" y="321" font-family="Liberation Mono" font-size="13" fill="#e8e8e8">0.6</text>
<text x="16" y="241" font-family="Liberation Mono" font-size="13" fill="#e8e8e8">0.7</text>
<text x="16" y="161" font-family="Liberation Mono" font-size="13" fill="#e8e8e8">0.8</text>
<text x="746" y="786" font-family="Liberation Sans" font-weight="bold" font-size="16" fill="#4a4a4a" textLength="155" lengthAdjust="spacingAndGlyphs">hcfr.sourceforge.net</text>
<polygon points="306.5,228.5 750.0,539.0 232.5,777.5" fill="none" stroke="#ffffff" stroke-width="3" stroke-linejoin="miter"/>
<line x1="181.2" y1="132.5" x2="200.0" y2="100.5" stroke="#a8a8a8" stroke-width="1"/>
<text transform="translate(200.5,107.0) scale(1,1.25)" x="0.50 8.75 17.00 27.06 33.50 39.74" y="0" font-family="Liberation Serif" font-size="14.5" fill="#d0d0d0">520 nm</text>
<line x1="330.2" y1="205.1" x2="350.3" y2="172.7" stroke="#a8a8a8" stroke-width="1"/>
<text transform="translate(350.5,180.5) scale(1,1.25)" x="0.50 8.75 17.00 27.06 33.50 39.74" y="0" font-family="Liberation Serif" font-size="14.5" fill="#d0d0d0">540 nm</text>
<line x1="468.4" y1="310.0" x2="486.2" y2="279.2" stroke="#a8a8a8" stroke-width="1"/>
<text transform="translate(487.0,285.0) scale(1,1.25)" x="0.50 8.75 17.00 27.06 33.50 39.74" y="0" font-family="Liberation Serif" font-size="14.5" fill="#d0d0d0">560 nm</text>
<line x1="564.0" y1="387.0" x2="584.0" y2="356.0" stroke="#a8a8a8" stroke-width="1"/>
<text transform="translate(584.5,362.8) scale(1,1.25)" x="0.50 8.75 17.00 27.06 33.50 39.74" y="0" font-family="Liberation Serif" font-size="14.5" fill="#d0d0d0">580 nm</text>
<line x1="631.5" y1="440.7" x2="650.5" y2="409.6" stroke="#a8a8a8" stroke-width="1"/>
<text transform="translate(650.5,416.4) scale(1,1.25)" x="0.50 8.75 17.00 27.06 33.50 39.74" y="0" font-family="Liberation Serif" font-size="14.5" fill="#d0d0d0">600 nm</text>
<line x1="693.8" y1="491.0" x2="713.5" y2="459.8" stroke="#a8a8a8" stroke-width="1"/>
<text transform="translate(713.5,466.6) scale(1,1.25)" x="0.50 8.75 17.00 27.06 33.50 39.74" y="0" font-family="Liberation Serif" font-size="14.5" fill="#d0d0d0">620 nm</text>
<line x1="762.0" y1="544.7" x2="782.3" y2="513.3" stroke="#a8a8a8" stroke-width="1"/>
<text transform="translate(782.3,521.7) scale(1,1.25)" x="0.50 8.75 17.00 27.06 33.50 39.74" y="0" font-family="Liberation Serif" font-size="14.5" fill="#d0d0d0">640 nm</text>
<line x1="791.8" y1="568.0" x2="812.0" y2="535.9" stroke="#a8a8a8" stroke-width="1"/>
<text transform="translate(812.0,544.8) scale(1,1.25)" x="0.50 8.75 17.00 27.06 33.50 39.74" y="0" font-family="Liberation Serif" font-size="14.5" fill="#d0d0d0">660 nm</text>
<line x1="803.7" y1="578.7" x2="823.9" y2="547.8" stroke="#a8a8a8" stroke-width="1"/>
<text transform="translate(823.9,555.7) scale(1,1.25)" x="0.50 8.75 17.00 27.06 33.50 39.74" y="0" font-family="Liberation Serif" font-size="14.5" fill="#d0d0d0">680 nm</text>
<line x1="73.3" y1="339.8" x2="91.2" y2="333.0" stroke="#a8a8a8" stroke-width="1"/>
<text transform="translate(35.5,355.0) scale(1,1.25)" x="0.50 8.75 17.00 27.06 33.50 39.74" y="0" font-family="Liberation Serif" font-size="14.5" fill="#d0d0d0">500 nm</text>
<line x1="149.0" y1="672.4" x2="166.8" y2="666.0" stroke="#a8a8a8" stroke-width="1"/>
<text transform="translate(111.0,688.5) scale(1,1.25)" x="0.50 8.75 17.00 27.06 33.50 39.74" y="0" font-family="Liberation Serif" font-size="14.5" fill="#d0d0d0">480 nm</text>
<line x1="192.5" y1="762.8" x2="211.8" y2="755.4" stroke="#a8a8a8" stroke-width="1"/>
<text transform="translate(155.5,777.5) scale(1,1.25)" x="0.50 8.75 17.00 27.06 33.50 39.74" y="0" font-family="Liberation Serif" font-size="14.5" fill="#d0d0d0">460 nm</text>
<line x1="207.0" y1="785.0" x2="225.5" y2="776.8" stroke="#a8a8a8" stroke-width="1"/>
<text transform="translate(170.0,798.5) scale(1,1.25)" x="0.50 8.75 17.00 27.06 33.50 39.74" y="0" font-family="Liberation Serif" font-size="14.5" fill="#d0d0d0">440 nm</text>
<line x1="219.0" y1="794.4" x2="234.8" y2="787.5" stroke="#a8a8a8" stroke-width="1"/>
<text transform="translate(179.6,809.5) scale(1,1.25)" x="0.50 8.75 17.00 27.06 33.50 39.74" y="0" font-family="Liberation Serif" font-size="14.5" fill="#d0d0d0">420 nm</text>
<text x="340.4" y="564.5" font-family="Liberation Mono" font-size="12.7" fill="#1c1c1c">9300</text>
<text x="387.7" y="524.2" font-family="Liberation Mono" font-size="12.7" fill="#1c1c1c">5500</text>
<text x="436.0" y="494.5" font-family="Liberation Mono" font-size="12.7" fill="#1c1c1c">4000</text>
<text x="496.0" y="472.2" font-family="Liberation Mono" font-size="12.7" fill="#1c1c1c">3000</text>
<text x="546.0" y="467.8" font-family="Liberation Mono" font-size="12.7" fill="#1c1c1c">2700</text>
<text x="531.5" y="496.2" font-family="Liberation Mono" font-size="12.7" fill="#1c1c1c">A</text>
<text x="439.5" y="539.8" font-family="Liberation Mono" font-size="12.7" fill="#1c1c1c">B</text>
<text x="400.5" y="569.0" font-family="Liberation Mono" font-size="12.7" fill="#1c1c1c">C</text>
<text x="370.6" y="545.5" font-family="Liberation Mono" font-size="12.7" fill="#1c1c1c">D65</text>
<path d="M382,365.5 h14 M382.5,365 v7" stroke="#141a6e" stroke-width="1"/>
<path d="M382.5,372 v7.5 h6.5" stroke="#a01050" stroke-width="1" fill="none"/>
<path d="M396.5,366 v14 M389,379.5 h8" stroke="#ff1848" stroke-width="1"/>
<rect x="384" y="367" width="11" height="11" fill="none" stroke="#60ff00" stroke-width="2"/>
<path d="M386,419.5 h14 M386.5,419 v7" stroke="#141a6e" stroke-width="1"/>
<path d="M386.5,426 v7.5 h6.5" stroke="#a01050" stroke-width="1" fill="none"/>
<path d="M400.5,420 v14 M393,433.5 h8" stroke="#ff1848" stroke-width="1"/>
<rect x="388" y="421" width="11" height="11" fill="none" stroke="#60ff00" stroke-width="2"/>
<path d="M389,476.5 h14 M389.5,476 v7" stroke="#141a6e" stroke-width="1"/>
<path d="M389.5,483 v7.5 h6.5" stroke="#a01050" stroke-width="1" fill="none"/>
<path d="M403.5,477 v14 M396,490.5 h8" stroke="#ff1848" stroke-width="1"/>
<rect x="391" y="478" width="11" height="11" fill="none" stroke="#60ff00" stroke-width="2"/>
<path d="M476,425.5 h14 M476.5,425 v7" stroke="#141a6e" stroke-width="1"/>
<path d="M476.5,432 v7.5 h6.5" stroke="#a01050" stroke-width="1" fill="none"/>
<path d="M490.5,426 v14 M483,439.5 h8" stroke="#ff1848" stroke-width="1"/>
<rect x="478" y="427" width="11" height="11" fill="none" stroke="#ffe400" stroke-width="2"/>
<path d="M449,460.5 h14 M449.5,460 v7" stroke="#141a6e" stroke-width="1"/>
<path d="M449.5,467 v7.5 h6.5" stroke="#a01050" stroke-width="1" fill="none"/>
<path d="M463.5,461 v14 M456,474.5 h8" stroke="#ff1848" stroke-width="1"/>
<rect x="451" y="462" width="11" height="11" fill="none" stroke="#ffe400" stroke-width="2"/>
<path d="M421,498.5 h14 M421.5,498 v7" stroke="#141a6e" stroke-width="1"/>
<path d="M421.5,505 v7.5 h6.5" stroke="#a01050" stroke-width="1" fill="none"/>
<path d="M435.5,499 v14 M428,512.5 h8" stroke="#ff1848" stroke-width="1"/>
<rect x="423" y="500" width="11" height="11" fill="none" stroke="#ffe400" stroke-width="2"/>
<path d="M324,536.5 h14 M324.5,536 v7" stroke="#141a6e" stroke-width="1"/>
<path d="M324.5,543 v7.5 h6.5" stroke="#a01050" stroke-width="1" fill="none"/>
<path d="M338.5,537 v14 M331,550.5 h8" stroke="#ff1848" stroke-width="1"/>
<rect x="326" y="538" width="11" height="11" fill="none" stroke="#40f0ff" stroke-width="2"/>
<path d="M346,536.5 h14 M346.5,536 v7" stroke="#141a6e" stroke-width="1"/>
<path d="M346.5,543 v7.5 h6.5" stroke="#a01050" stroke-width="1" fill="none"/>
<path d="M360.5,537 v14 M353,550.5 h8" stroke="#ff1848" stroke-width="1"/>
<rect x="348" y="538" width="11" height="11" fill="none" stroke="#40f0ff" stroke-width="2"/>
<path d="M369,536.5 h14 M369.5,536 v7" stroke="#141a6e" stroke-width="1"/>
<path d="M369.5,543 v7.5 h6.5" stroke="#a01050" stroke-width="1" fill="none"/>
<path d="M383.5,537 v14 M376,550.5 h8" stroke="#ff1848" stroke-width="1"/>
<rect x="371" y="538" width="11" height="11" fill="none" stroke="#40f0ff" stroke-width="2"/>
<path d="M482,535.5 h14 M482.5,535 v7" stroke="#141a6e" stroke-width="1"/>
<path d="M482.5,542 v7.5 h6.5" stroke="#a01050" stroke-width="1" fill="none"/>
<path d="M496.5,536 v14 M489,549.5 h8" stroke="#ff1848" stroke-width="1"/>
<rect x="484" y="537" width="11" height="11" fill="none" stroke="#ff1020" stroke-width="2"/>
<path d="M569,535.5 h14 M569.5,535 v7" stroke="#141a6e" stroke-width="1"/>
<path d="M569.5,542 v7.5 h6.5" stroke="#a01050" stroke-width="1" fill="none"/>
<path d="M583.5,536 v14 M576,549.5 h8" stroke="#ff1848" stroke-width="1"/>
<rect x="571" y="537" width="11" height="11" fill="none" stroke="#ff1020" stroke-width="2"/>
<path d="M651,535.5 h14 M651.5,535 v7" stroke="#141a6e" stroke-width="1"/>
<path d="M651.5,542 v7.5 h6.5" stroke="#a01050" stroke-width="1" fill="none"/>
<path d="M665.5,536 v14 M658,549.5 h8" stroke="#ff1848" stroke-width="1"/>
<rect x="653" y="537" width="11" height="11" fill="none" stroke="#ff1020" stroke-width="2"/>
<path d="M349,595.5 h14 M349.5,595 v7" stroke="#141a6e" stroke-width="1"/>
<path d="M349.5,602 v7.5 h6.5" stroke="#a01050" stroke-width="1" fill="none"/>
<path d="M363.5,596 v14 M356,609.5 h8" stroke="#ff1848" stroke-width="1"/>
<rect x="351" y="597" width="11" height="11" fill="none" stroke="#5020ff" stroke-width="2"/>
<path d="M305,652.5 h14 M305.5,652 v7" stroke="#141a6e" stroke-width="1"/>
<path d="M305.5,659 v7.5 h6.5" stroke="#a01050" stroke-width="1" fill="none"/>
<path d="M319.5,653 v14 M312,666.5 h8" stroke="#ff1848" stroke-width="1"/>
<rect x="307" y="654" width="11" height="11" fill="none" stroke="#5020ff" stroke-width="2"/>
<path d="M264,703.5 h14 M264.5,703 v7" stroke="#141a6e" stroke-width="1"/>
<path d="M264.5,710 v7.5 h6.5" stroke="#a01050" stroke-width="1" fill="none"/>
<path d="M278.5,704 v14 M271,717.5 h8" stroke="#ff1848" stroke-width="1"/>
<rect x="266" y="705" width="11" height="11" fill="none" stroke="#5020ff" stroke-width="2"/>
<path d="M395,573.5 h14 M395.5,573 v7" stroke="#141a6e" stroke-width="1"/>
<path d="M395.5,580 v7.5 h6.5" stroke="#a01050" stroke-width="1" fill="none"/>
<path d="M409.5,574 v14 M402,587.5 h8" stroke="#ff1848" stroke-width="1"/>
<rect x="397" y="575" width="11" height="11" fill="none" stroke="#ff20f0" stroke-width="2"/>
<path d="M397,609.5 h14 M397.5,609 v7" stroke="#141a6e" stroke-width="1"/>
<path d="M397.5,616 v7.5 h6.5" stroke="#a01050" stroke-width="1" fill="none"/>
<path d="M411.5,610 v14 M404,623.5 h8" stroke="#ff1848" stroke-width="1"/>
<rect x="399" y="611" width="11" height="11" fill="none" stroke="#ff20f0" stroke-width="2"/>
<path d="M399,645.5 h14 M399.5,645 v7" stroke="#141a6e" stroke-width="1"/>
<path d="M399.5,652 v7.5 h6.5" stroke="#a01050" stroke-width="1" fill="none"/>
<path d="M413.5,646 v14 M406,659.5 h8" stroke="#ff1848" stroke-width="1"/>
<rect x="401" y="647" width="11" height="11" fill="none" stroke="#ff20f0" stroke-width="2"/>
<rect x="458.5" y="396.5" width="14" height="14" fill="none" stroke="#e49424" stroke-width="1"/>
<rect x="459.5" y="397.5" width="12" height="12" fill="none" stroke="#caa27c" stroke-width="1"/>
<rect x="460.5" y="398.5" width="10" height="10" fill="none" stroke="#4c4c3c" stroke-width="1"/>
<path d="M458,396 l3,3 M473,396 l-3,3 M458,411 l3,-3 M473,411 l-3,-3" stroke="#ffffff" stroke-width="1"/>
<rect x="531.5" y="419.5" width="14" height="14" fill="none" stroke="#e49424" stroke-width="1"/>
<rect x="532.5" y="420.5" width="12" height="12" fill="none" stroke="#caa27c" stroke-width="1"/>
<rect x="533.5" y="421.5" width="10" height="10" fill="none" stroke="#4c4c3c" stroke-width="1"/>
<path d="M531,419 l3,3 M546,419 l-3,3 M531,434 l3,-3 M546,434 l-3,-3" stroke="#ffffff" stroke-width="1"/>
<rect x="423.5" y="446.5" width="14" height="14" fill="none" stroke="#e49424" stroke-width="1"/>
<rect x="424.5" y="447.5" width="12" height="12" fill="none" stroke="#caa27c" stroke-width="1"/>
<rect x="425.5" y="448.5" width="10" height="10" fill="none" stroke="#4c4c3c" stroke-width="1"/>
<path d="M423,446 l3,3 M438,446 l-3,3 M423,461 l3,-3 M438,461 l-3,-3" stroke="#ffffff" stroke-width="1"/>
<rect x="562.5" y="445.5" width="14" height="14" fill="none" stroke="#e49424" stroke-width="1"/>
<rect x="563.5" y="446.5" width="12" height="12" fill="none" stroke="#caa27c" stroke-width="1"/>
<rect x="564.5" y="447.5" width="10" height="10" fill="none" stroke="#4c4c3c" stroke-width="1"/>
<path d="M562,445 l3,3 M577,445 l-3,3 M562,460 l3,-3 M577,460 l-3,-3" stroke="#ffffff" stroke-width="1"/>
<rect x="605.5" y="474.5" width="14" height="14" fill="none" stroke="#e49424" stroke-width="1"/>
<rect x="606.5" y="475.5" width="12" height="12" fill="none" stroke="#caa27c" stroke-width="1"/>
<rect x="607.5" y="476.5" width="10" height="10" fill="none" stroke="#4c4c3c" stroke-width="1"/>
<path d="M605,474 l3,3 M620,474 l-3,3 M605,489 l3,-3 M620,489 l-3,-3" stroke="#ffffff" stroke-width="1"/>
<rect x="464.5" y="512.5" width="14" height="14" fill="none" stroke="#e49424" stroke-width="1"/>
<rect x="465.5" y="513.5" width="12" height="12" fill="none" stroke="#caa27c" stroke-width="1"/>
<rect x="466.5" y="514.5" width="10" height="10" fill="none" stroke="#4c4c3c" stroke-width="1"/>
<path d="M464,512 l3,3 M479,512 l-3,3 M464,527 l3,-3 M479,527 l-3,-3" stroke="#ffffff" stroke-width="1"/>
<rect x="495.5" y="506.5" width="14" height="14" fill="none" stroke="#e49424" stroke-width="1"/>
<rect x="496.5" y="507.5" width="12" height="12" fill="none" stroke="#caa27c" stroke-width="1"/>
<rect x="497.5" y="508.5" width="10" height="10" fill="none" stroke="#4c4c3c" stroke-width="1"/>
<path d="M495,506 l3,3 M510,506 l-3,3 M495,521 l3,-3 M510,521 l-3,-3" stroke="#ffffff" stroke-width="1"/>
<rect x="558.5" y="549.5" width="14" height="14" fill="none" stroke="#e49424" stroke-width="1"/>
<rect x="559.5" y="550.5" width="12" height="12" fill="none" stroke="#caa27c" stroke-width="1"/>
<rect x="560.5" y="551.5" width="10" height="10" fill="none" stroke="#4c4c3c" stroke-width="1"/>
<path d="M558,549 l3,3 M573,549 l-3,3 M558,564 l3,-3 M573,564 l-3,-3" stroke="#ffffff" stroke-width="1"/>
<rect x="642.5" y="543.5" width="14" height="14" fill="none" stroke="#e49424" stroke-width="1"/>
<rect x="643.5" y="544.5" width="12" height="12" fill="none" stroke="#caa27c" stroke-width="1"/>
<rect x="644.5" y="545.5" width="10" height="10" fill="none" stroke="#4c4c3c" stroke-width="1"/>
<path d="M642,543 l3,3 M657,543 l-3,3 M642,558 l3,-3 M657,558 l-3,-3" stroke="#ffffff" stroke-width="1"/>
<rect x="384.5" y="393.5" width="14" height="14" fill="none" stroke="#e49424" stroke-width="1"/>
<rect x="385.5" y="394.5" width="12" height="12" fill="none" stroke="#caa27c" stroke-width="1"/>
<rect x="386.5" y="395.5" width="10" height="10" fill="none" stroke="#4c4c3c" stroke-width="1"/>
<path d="M384,393 l3,3 M399,393 l-3,3 M384,408 l3,-3 M399,408 l-3,-3" stroke="#ffffff" stroke-width="1"/>
<rect x="339.5" y="509.5" width="14" height="14" fill="none" stroke="#e49424" stroke-width="1"/>
<rect x="340.5" y="510.5" width="12" height="12" fill="none" stroke="#caa27c" stroke-width="1"/>
<rect x="341.5" y="511.5" width="10" height="10" fill="none" stroke="#4c4c3c" stroke-width="1"/>
<path d="M339,509 l3,3 M354,509 l-3,3 M339,524 l3,-3 M354,524 l-3,-3" stroke="#ffffff" stroke-width="1"/>
<rect x="392.5" y="536.5" width="14" height="14" fill="none" stroke="#e49424" stroke-width="1"/>
<rect x="393.5" y="537.5" width="12" height="12" fill="none" stroke="#caa27c" stroke-width="1"/>
<rect x="394.5" y="538.5" width="10" height="10" fill="none" stroke="#4c4c3c" stroke-width="1"/>
<path d="M392,536 l3,3 M407,536 l-3,3 M392,551 l3,-3 M407,551 l-3,-3" stroke="#ffffff" stroke-width="1"/>
<rect x="286.5" y="588.5" width="14" height="14" fill="none" stroke="#e49424" stroke-width="1"/>
<rect x="287.5" y="589.5" width="12" height="12" fill="none" stroke="#caa27c" stroke-width="1"/>
<rect x="288.5" y="590.5" width="10" height="10" fill="none" stroke="#4c4c3c" stroke-width="1"/>
<path d="M286,588 l3,3 M301,588 l-3,3 M286,603 l3,-3 M301,603 l-3,-3" stroke="#ffffff" stroke-width="1"/>
<rect x="324.5" y="591.5" width="14" height="14" fill="none" stroke="#e49424" stroke-width="1"/>
<rect x="325.5" y="592.5" width="12" height="12" fill="none" stroke="#caa27c" stroke-width="1"/>
<rect x="326.5" y="593.5" width="10" height="10" fill="none" stroke="#4c4c3c" stroke-width="1"/>
<path d="M324,591 l3,3 M339,591 l-3,3 M324,606 l3,-3 M339,606 l-3,-3" stroke="#ffffff" stroke-width="1"/>
<rect x="344.5" y="602.5" width="14" height="14" fill="none" stroke="#e49424" stroke-width="1"/>
<rect x="345.5" y="603.5" width="12" height="12" fill="none" stroke="#caa27c" stroke-width="1"/>
<rect x="346.5" y="604.5" width="10" height="10" fill="none" stroke="#4c4c3c" stroke-width="1"/>
<path d="M344,602 l3,3 M359,602 l-3,3 M344,617 l3,-3 M359,617 l-3,-3" stroke="#ffffff" stroke-width="1"/>
<rect x="365.5" y="632.5" width="14" height="14" fill="none" stroke="#e49424" stroke-width="1"/>
<rect x="366.5" y="633.5" width="12" height="12" fill="none" stroke="#caa27c" stroke-width="1"/>
<rect x="367.5" y="634.5" width="10" height="10" fill="none" stroke="#4c4c3c" stroke-width="1"/>
<path d="M365,632 l3,3 M380,632 l-3,3 M365,647 l3,-3 M380,647 l-3,-3" stroke="#ffffff" stroke-width="1"/>
<rect x="288.5" y="656.5" width="14" height="14" fill="none" stroke="#e49424" stroke-width="1"/>
<rect x="289.5" y="657.5" width="12" height="12" fill="none" stroke="#caa27c" stroke-width="1"/>
<rect x="290.5" y="658.5" width="10" height="10" fill="none" stroke="#4c4c3c" stroke-width="1"/>
<path d="M288,656 l3,3 M303,656 l-3,3 M288,671 l3,-3 M303,671 l-3,-3" stroke="#ffffff" stroke-width="1"/>
<rect x="262.5" y="699.5" width="14" height="14" fill="none" stroke="#e49424" stroke-width="1"/>
<rect x="263.5" y="700.5" width="12" height="12" fill="none" stroke="#caa27c" stroke-width="1"/>
<rect x="264.5" y="701.5" width="10" height="10" fill="none" stroke="#4c4c3c" stroke-width="1"/>
<path d="M262,699 l3,3 M277,699 l-3,3 M262,714 l3,-3 M277,714 l-3,-3" stroke="#ffffff" stroke-width="1"/>
<rect x="460.5" y="606.5" width="14" height="14" fill="none" stroke="#e49424" stroke-width="1"/>
<rect x="461.5" y="607.5" width="12" height="12" fill="none" stroke="#caa27c" stroke-width="1"/>
<rect x="462.5" y="608.5" width="10" height="10" fill="none" stroke="#4c4c3c" stroke-width="1"/>
<path d="M460,606 l3,3 M475,606 l-3,3 M460,621 l3,-3 M475,621 l-3,-3" stroke="#ffffff" stroke-width="1"/>
<path d="M380,318.5 h14 M380.5,318 v7" stroke="#141a6e" stroke-width="1"/>
<path d="M380.5,325 v7.5 h6.5" stroke="#a01050" stroke-width="1" fill="none"/>
<path d="M394.5,319 v14 M387,332.5 h8" stroke="#ff1848" stroke-width="1"/>
<rect x="382" y="320" width="11" height="11" fill="none" stroke="#60ff00" stroke-width="2"/>
<path d="M383,321 h9 v6 l-2,3 h-5 l-2,-3 z" fill="#40b040"/>
<path d="M383,321 h2 v2 h-2 z" fill="#e8f0ff" opacity="0.8"/>
<path d="M384,324.5 h5 M386.5,322 v5" stroke="#000" stroke-width="1"/>
<path d="M499,394.5 h14 M499.5,394 v7" stroke="#141a6e" stroke-width="1"/>
<path d="M499.5,401 v7.5 h6.5" stroke="#a01050" stroke-width="1" fill="none"/>
<path d="M513.5,395 v14 M506,408.5 h8" stroke="#ff1848" stroke-width="1"/>
<rect x="501" y="396" width="11" height="11" fill="none" stroke="#ffe400" stroke-width="2"/>
<path d="M502,397 h9 v6 l-2,3 h-5 l-2,-3 z" fill="#a09030"/>
<path d="M502,397 h2 v2 h-2 z" fill="#e8f0ff" opacity="0.8"/>
<path d="M503,400.5 h5 M505.5,398 v5" stroke="#000" stroke-width="1"/>
<path d="M304,536.5 h14 M304.5,536 v7" stroke="#141a6e" stroke-width="1"/>
<path d="M304.5,543 v7.5 h6.5" stroke="#a01050" stroke-width="1" fill="none"/>
<path d="M318.5,537 v14 M311,550.5 h8" stroke="#ff1848" stroke-width="1"/>
<rect x="306" y="538" width="11" height="11" fill="none" stroke="#40f0ff" stroke-width="2"/>
<path d="M307,539 h9 v6 l-2,3 h-5 l-2,-3 z" fill="#4080a0"/>
<path d="M307,539 h2 v2 h-2 z" fill="#e8f0ff" opacity="0.8"/>
<path d="M308,542.5 h5 M310.5,540 v5" stroke="#000" stroke-width="1"/>
<path d="M718,534.5 h14 M718.5,534 v7" stroke="#141a6e" stroke-width="1"/>
<path d="M718.5,541 v7.5 h6.5" stroke="#a01050" stroke-width="1" fill="none"/>
<path d="M732.5,535 v14 M725,548.5 h8" stroke="#ff1848" stroke-width="1"/>
<rect x="720" y="536" width="11" height="11" fill="none" stroke="#ff1020" stroke-width="2"/>
<path d="M721,537 h9 v6 l-2,3 h-5 l-2,-3 z" fill="#a04040"/>
<path d="M721,537 h2 v2 h-2 z" fill="#e8f0ff" opacity="0.8"/>
<path d="M722,540.5 h5 M724.5,538 v5" stroke="#000" stroke-width="1"/>
<path d="M401,675.5 h14 M401.5,675 v7" stroke="#141a6e" stroke-width="1"/>
<path d="M401.5,682 v7.5 h6.5" stroke="#a01050" stroke-width="1" fill="none"/>
<path d="M415.5,676 v14 M408,689.5 h8" stroke="#ff1848" stroke-width="1"/>
<rect x="403" y="677" width="11" height="11" fill="none" stroke="#ff20f0" stroke-width="2"/>
<path d="M404,678 h9 v6 l-2,3 h-5 l-2,-3 z" fill="#606060"/>
<path d="M404,678 h2 v2 h-2 z" fill="#e8f0ff" opacity="0.8"/>
<path d="M405,681.5 h5 M407.5,679 v5" stroke="#000" stroke-width="1"/>
<path d="M230,751.5 h14 M230.5,751 v7" stroke="#141a6e" stroke-width="1"/>
<path d="M230.5,758 v7.5 h6.5" stroke="#a01050" stroke-width="1" fill="none"/>
<path d="M244.5,752 v14 M237,765.5 h8" stroke="#ff1848" stroke-width="1"/>
<rect x="232" y="753" width="11" height="11" fill="none" stroke="#5020ff" stroke-width="2"/>
<path d="M233,754 h9 v6 l-2,3 h-5 l-2,-3 z" fill="#3040a0"/>
<path d="M233,754 h2 v2 h-2 z" fill="#e8f0ff" opacity="0.8"/>
<path d="M234,757.5 h5 M236.5,755 v5" stroke="#000" stroke-width="1"/>
<path d="M336.0,612.0 C338.1,609.8 344.3,603.2 348.4,598.5 C352.5,593.8 356.3,588.8 360.5,584.0 C364.7,579.2 369.9,573.9 373.5,570.0 C377.1,566.1 378.5,564.2 382.4,560.5 C386.3,556.8 390.6,552.6 397.0,547.5 C403.4,542.4 413.0,535.4 420.8,529.8 C428.6,524.2 436.0,519.0 444.0,514.0 C452.0,509.0 460.3,504.1 469.0,499.7 C477.7,495.3 486.8,491.1 496.0,487.5 C505.2,483.9 515.9,480.4 524.5,478.0 C533.1,475.6 542.6,473.9 547.9,472.8 C553.2,471.7 555.1,471.7 556.5,471.5" fill="none" stroke="#000" stroke-width="2"/>
<circle cx="373.5" cy="570.0" r="3" fill="#fff" stroke="#202020" stroke-width="1"/>
<circle cx="420.8" cy="529.8" r="3" fill="#fff" stroke="#202020" stroke-width="1"/>
<circle cx="469.0" cy="499.7" r="3" fill="#fff" stroke="#202020" stroke-width="1"/>
<circle cx="524.5" cy="478.0" r="3" fill="#fff" stroke="#202020" stroke-width="1"/>
<circle cx="547.9" cy="472.8" r="3" fill="#fff" stroke="#202020" stroke-width="1"/>
<circle cx="399.1" cy="541.8" r="3.2" fill="#10d010" stroke="#0a600a" stroke-width="0.8"/>
<circle cx="396.8" cy="552.5" r="3.2" fill="#10d010" stroke="#0a600a" stroke-width="0.8"/>
<circle cx="435.1" cy="523.7" r="3.2" fill="#10d010" stroke="#0a600a" stroke-width="0.8"/>
<circle cx="534.0" cy="480.0" r="3.2" fill="#10d010" stroke="#0a600a" stroke-width="0.8"/>
<circle cx="419.8" cy="539.6" r="5.5" fill="#fff" stroke="#505050" stroke-width="1.5"/>
<circle cx="382.8" cy="556" r="5.5" fill="none" stroke="#303030" stroke-width="1.5"/>
<circle cx="382.5" cy="560.5" r="5.8" fill="#fff" stroke="#000" stroke-width="2.2"/>
<circle cx="306.3" cy="229.0" r="5.6" fill="#12e012" stroke="#0a5a0a" stroke-width="1.6"/>
<circle cx="306.3" cy="229.0" r="0.9" fill="#000"/>
<circle cx="514.5" cy="375.8" r="5.6" fill="#f0eaa8" stroke="#8c8a48" stroke-width="1.6"/>
<circle cx="514.5" cy="375.8" r="0.9" fill="#000060"/>
<circle cx="260.2" cy="571.5" r="5.6" fill="#88eef4" stroke="#3a6a90" stroke-width="1.6"/>
<circle cx="260.2" cy="571.5" r="0.9" fill="#800000"/>
<circle cx="750.5" cy="539.2" r="5.6" fill="#d8103a" stroke="#780012" stroke-width="1.6"/>
<circle cx="750.5" cy="539.2" r="0.9" fill="#d01010"/>
<circle cx="413.5" cy="694.1" r="5.6" fill="#e424f0" stroke="#700880" stroke-width="1.6"/>
<circle cx="413.5" cy="694.1" r="0.9" fill="#000"/>
<circle cx="232.0" cy="777.5" r="5.6" fill="#3848f0" stroke="#101a80" stroke-width="1.6"/>
<circle cx="232.0" cy="777.5" r="0.9" fill="#2030c0"/>
</g>
<clipPath id="tbclip"><rect x="11" y="850" width="902" height="19"/></clipPath>
<g clip-path="url(#tbclip)">
<rect x="11" y="850" width="902" height="19" fill="#f0f0f0"/>
<rect x="11" y="850" width="902" height="1" fill="#000"/>
<polygon points="129.5,850 217.5,850 208.5,868 131,868" fill="#ffffff"/>
<rect x="130" y="850" width="87" height="1" fill="#ececec"/>
<line x1="65.9" y1="851" x2="74" y2="868.5" stroke="#000" stroke-width="1.2"/>
<line x1="129.5" y1="850.5" x2="137.8" y2="868.5" stroke="#000" stroke-width="1.2"/>
<line x1="130.5" y1="868.5" x2="135" y2="860.5" stroke="#000" stroke-width="1.2"/>
<line x1="217.5" y1="850.5" x2="208.5" y2="868.5" stroke="#000" stroke-width="1.2"/>
<rect x="65" y="868" width="848" height="1" fill="#9a9a9a"/>
<text x="81.7" y="863" font-family="Liberation Sans" font-size="9.6" fill="#0c0c14" textLength="41" lengthAdjust="spacingAndGlyphs">Measures</text>
<text x="141.3" y="863" font-family="Liberation Sans" font-weight="bold" font-size="10" fill="#101018" textLength="64" lengthAdjust="spacingAndGlyphs">CIE Diagram</text>
<rect x="11" y="850" width="54" height="19" fill="#000"/>
<rect x="12" y="851" width="17" height="17" fill="#a0a0a0"/>
<rect x="12" y="851" width="16" height="16" fill="#ffffff"/>
<rect x="13" y="852" width="15" height="15" fill="#f0f0f0"/>
<rect x="12" y="867" width="17" height="1" fill="#808080"/>
<rect x="28" y="851" width="1" height="17" fill="#808080"/>
<rect x="29" y="851" width="17" height="17" fill="#a0a0a0"/>
<rect x="29" y="851" width="16" height="16" fill="#ffffff"/>
<rect x="30" y="852" width="15" height="15" fill="#f0f0f0"/>
<rect x="29" y="867" width="17" height="1" fill="#808080"/>
<rect x="45" y="851" width="1" height="17" fill="#808080"/>
<rect x="46" y="851" width="17" height="17" fill="#a0a0a0"/>
<rect x="46" y="851" width="16" height="16" fill="#ffffff"/>
<rect x="47" y="852" width="15" height="15" fill="#f0f0f0"/>
<rect x="46" y="867" width="17" height="1" fill="#808080"/>
<rect x="62" y="851" width="1" height="17" fill="#808080"/>
<path d="M17,856.5 L24.5,863 M24.5,856.5 L17,863" stroke="#000" stroke-width="1.6"/>
<path d="M39,856 L35,859.5 L39,863 Z" fill="#000"/>
<path d="M53,856 L57,859.5 L53,863 Z" fill="#000"/>
<rect x="663.5" y="857.5" width="13" height="9" fill="#808000" stroke="#000" stroke-width="1"/>
<path d="M666,861 L670,859.5 L673,860 L673,864 L668,863 Z" fill="#ff1010"/>
<path d="M666,861.5 L669,861 L668,863 Z" fill="#ffffff"/>
<rect x="664" y="866" width="6" height="3" fill="#808000"/><rect x="670" y="866" width="6" height="3" fill="#ffe800"/>
<rect x="803.5" y="854.5" width="19" height="16" fill="#ffffff" stroke="#333333" stroke-width="1"/>
<text x="828.5" y="870" font-family="Liberation Sans" font-size="16" fill="#1a1a1a" textLength="73" lengthAdjust="spacingAndGlyphs">Reference</text>
</g>
</svg></body></html>
